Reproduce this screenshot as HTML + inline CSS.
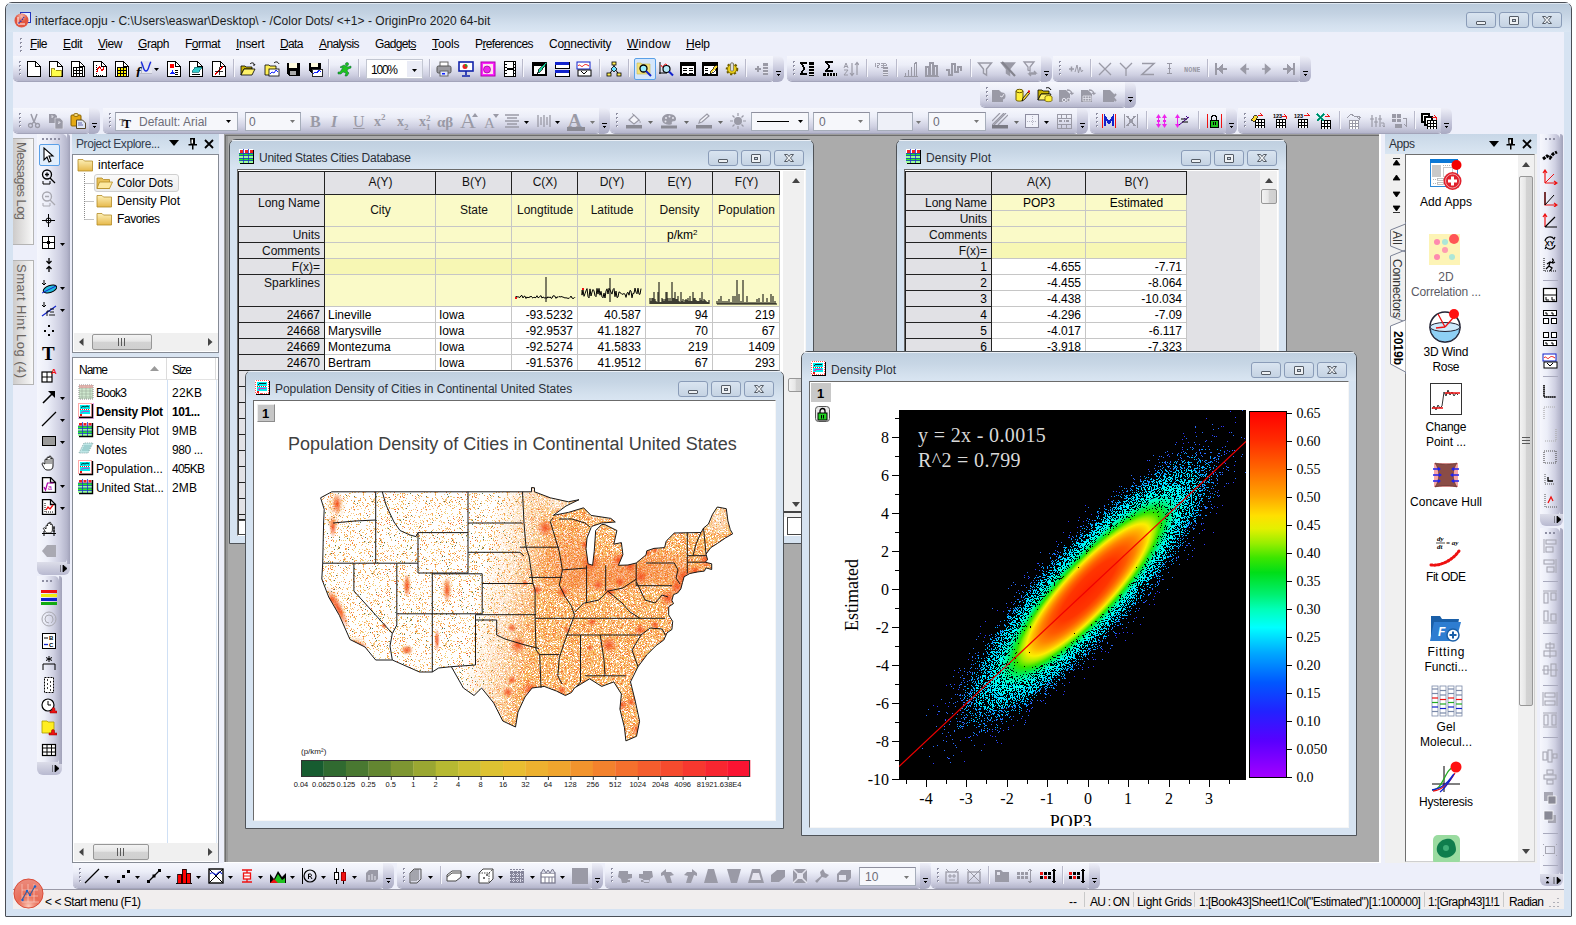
<!DOCTYPE html>
<html><head><meta charset="utf-8"><title>OriginPro 2020</title>
<style>
html,body{margin:0;padding:0;background:#fff;}
body{width:1576px;height:925px;position:relative;overflow:hidden;font-family:"Liberation Sans",sans-serif;}
body div,body svg{position:absolute;}
u{text-decoration:underline;text-underline-offset:1px;}
.tb{background:linear-gradient(#f6f7fd,#eceef8 35%,#cfd0e2 75%,#b4b5cb);border-radius:0 0 5px 5px;box-shadow:0 1px 0 #a3a4ba;}
.tbv{background:linear-gradient(90deg,#f6f7fd,#eceef8 35%,#cfd0e2 75%,#b4b5cb);border-radius:0 5px 5px 0;}
.cap{background:linear-gradient(#d7d8e8,#a9aac4);border-radius:0 5px 5px 0;}
.combo{box-sizing:border-box;border:1px solid #a5acb8;background:#fff;}
</style></head><body>
<svg width="0" height="0" style="left:0;top:0"><defs>
<radialGradient id="gl" cx=".5" cy=".2" r=".8"><stop offset="0" stop-color="#fff" stop-opacity=".6"/><stop offset=".5" stop-color="#fff" stop-opacity="0"/></radialGradient>
<radialGradient id="ball" cx=".5" cy=".95" r=".9"><stop offset="0" stop-color="#ffd8c8" stop-opacity=".9"/><stop offset=".45" stop-color="#f08a70" stop-opacity=".3"/><stop offset="1" stop-color="#fff" stop-opacity=".25"/></radialGradient>
<linearGradient id="fold" x1="0" y1="0" x2="0" y2="1"><stop offset="0" stop-color="#fdf0b8"/><stop offset="1" stop-color="#e6b84a"/></linearGradient>
</defs></svg>
<div style="left:5px;top:2px;width:1567px;height:915px;border:1px solid #4a4e55;border-radius:7px 7px 1px 1px;background:#d6e3f2;box-sizing:border-box;"></div>
<div style="left:6px;top:3px;width:1565px;height:29px;border-radius:6px 6px 0 0;background:linear-gradient(#b9cadb,#c3d2e2 35%,#d3e0ee 75%,#dae6f3);"></div>
<div style="left:6px;top:3px;width:1565px;height:1px;background:#e8eff6;border-radius:6px 6px 0 0;opacity:.8"></div>
<div style="left:13px;top:32px;width:1551px;height:877px;background:#edeffa;"></div>
<div style="left:35px;top:15.0px;font:12px/13.40px 'Liberation Sans',sans-serif;color:#1c1c1c;white-space:pre;letter-spacing:0.04px;">interface.opju - C:\Users\easwar\Desktop\ - /Color Dots/ &lt;+1&gt; - OriginPro 2020 64-bit</div>
<svg style="left:13px;top:9px;" width="22" height="20" viewBox="0 0 22 20"><rect x="7.5" y="3.5" width="10" height="10" fill="#e8eeff" stroke="#2233bb"/><circle cx="8.5" cy="11.5" r="7" fill="#e2553f"/><circle cx="8.5" cy="11.5" r="7" fill="url(#gl)"/><path d="M5 8v7h7" stroke="#fff" fill="none"/><path d="M5.5 14.5l2-2 1.5-1.5 2-3" stroke="#2233bb" stroke-width="1.3" fill="none" stroke-dasharray="1.5 1"/></svg>
<div style="left:1466px;top:12px;width:30px;height:16px;box-sizing:border-box;border:1px solid #8a9cb8;border-radius:3px;background:linear-gradient(#d9e4f0,#c5d3e3);"></div>
<div style="left:1476.0px;top:21.0px;width:10px;height:4px;box-sizing:border-box;border:1px solid #555c66;border-radius:1px;background:#eef1f4;"></div>
<div style="left:1499px;top:12px;width:30px;height:16px;box-sizing:border-box;border:1px solid #8a9cb8;border-radius:3px;background:linear-gradient(#d9e4f0,#c5d3e3);"></div>
<div style="left:1509.0px;top:16.0px;width:10px;height:9px;box-sizing:border-box;border:1px solid #555c66;border-radius:1px;background:#eef1f4;"></div>
<div style="left:1512.0px;top:19.0px;width:4px;height:3px;box-sizing:border-box;border:1px solid #555c66;background:#cbd6e2;"></div>
<div style="left:1532px;top:12px;width:30px;height:16px;box-sizing:border-box;border:1px solid #8a9cb8;border-radius:3px;background:linear-gradient(#d9e4f0,#c5d3e3);"></div>
<svg style="left:1541.0px;top:15.0px;" width="12" height="10" viewBox="0 0 12 10"><path d="M1.5 1.5h3l1.5 2 1.5-2h3l-3 3.5 3 3.5h-3l-1.5-2-1.5 2h-3l3-3.5z" fill="#eef1f4" stroke="#555c66" stroke-width="1" stroke-linejoin="round"/></svg>
<svg style="left:20px;top:38px;" width="3" height="15" viewBox="0 0 3 15"><rect x="0" y="0" width="2" height="2" fill="#8e8fa3"/><rect x="1" y="1" width="1" height="1" fill="#fff"/><rect x="0" y="4" width="2" height="2" fill="#8e8fa3"/><rect x="1" y="5" width="1" height="1" fill="#fff"/><rect x="0" y="8" width="2" height="2" fill="#8e8fa3"/><rect x="1" y="9" width="1" height="1" fill="#fff"/><rect x="0" y="12" width="2" height="2" fill="#8e8fa3"/><rect x="1" y="13" width="1" height="1" fill="#fff"/></svg>
<div style="left:30px;top:38.0px;font:12px/13.40px 'Liberation Sans',sans-serif;color:#000;white-space:pre;letter-spacing:-0.61px;"><u>F</u>ile</div>
<div style="left:63px;top:38.0px;font:12px/13.40px 'Liberation Sans',sans-serif;color:#000;white-space:pre;letter-spacing:-0.39px;"><u>E</u>dit</div>
<div style="left:98px;top:38.0px;font:12px/13.40px 'Liberation Sans',sans-serif;color:#000;white-space:pre;letter-spacing:-0.43px;"><u>V</u>iew</div>
<div style="left:138px;top:38.0px;font:12px/13.40px 'Liberation Sans',sans-serif;color:#000;white-space:pre;letter-spacing:-0.46px;"><u>G</u>raph</div>
<div style="left:185px;top:38.0px;font:12px/13.40px 'Liberation Sans',sans-serif;color:#000;white-space:pre;letter-spacing:-0.50px;">F<u>o</u>rmat</div>
<div style="left:236px;top:38.0px;font:12px/13.40px 'Liberation Sans',sans-serif;color:#000;white-space:pre;letter-spacing:-0.30px;"><u>I</u>nsert</div>
<div style="left:280px;top:38.0px;font:12px/13.40px 'Liberation Sans',sans-serif;color:#000;white-space:pre;letter-spacing:-0.62px;"><u>D</u>ata</div>
<div style="left:319px;top:38.0px;font:12px/13.40px 'Liberation Sans',sans-serif;color:#000;white-space:pre;letter-spacing:-0.60px;"><u>A</u>nalysis</div>
<div style="left:375px;top:38.0px;font:12px/13.40px 'Liberation Sans',sans-serif;color:#000;white-space:pre;letter-spacing:-0.64px;">Gadget<u>s</u></div>
<div style="left:432px;top:38.0px;font:12px/13.40px 'Liberation Sans',sans-serif;color:#000;white-space:pre;letter-spacing:-0.13px;"><u>T</u>ools</div>
<div style="left:475px;top:38.0px;font:12px/13.40px 'Liberation Sans',sans-serif;color:#000;white-space:pre;letter-spacing:-0.62px;">P<u>r</u>eferences</div>
<div style="left:549px;top:38.0px;font:12px/13.40px 'Liberation Sans',sans-serif;color:#000;white-space:pre;letter-spacing:-0.26px;">Co<u>n</u>nectivity</div>
<div style="left:627px;top:38.0px;font:12px/13.40px 'Liberation Sans',sans-serif;color:#000;white-space:pre;letter-spacing:0.16px;"><u>W</u>indow</div>
<div style="left:686px;top:38.0px;font:12px/13.40px 'Liberation Sans',sans-serif;color:#000;white-space:pre;letter-spacing:-0.23px;"><u>H</u>elp</div>
<div class="tb" style="left:13px;top:56px;width:762px;height:25px;"></div>
<svg style="left:19px;top:61px;" width="3" height="17" viewBox="0 0 3 17"><rect x="0" y="0" width="2" height="2" fill="#8e8fa3"/><rect x="1" y="1" width="1" height="1" fill="#fff"/><rect x="0" y="4" width="2" height="2" fill="#8e8fa3"/><rect x="1" y="5" width="1" height="1" fill="#fff"/><rect x="0" y="8" width="2" height="2" fill="#8e8fa3"/><rect x="1" y="9" width="1" height="1" fill="#fff"/><rect x="0" y="12" width="2" height="2" fill="#8e8fa3"/><rect x="1" y="13" width="1" height="1" fill="#fff"/></svg>
<div style="left:773px;top:56px;width:11px;height:26px;background:linear-gradient(#eeeff8,#c4c5da 55%,#a9aac2);border-radius:0 6px 6px 0;"></div>
<svg style="left:776px;top:71px;shape-rendering:crispEdges" width="5" height="6" viewBox="0 0 5 6"><path d="M0 .5h5" stroke="#000"/><path d="M0 2.500h5l-2.500 3z" fill="#000"/></svg>
<svg style="left:26px;top:61px" width="16" height="16" viewBox="0 0 16 16" shape-rendering="crispEdges"><path d="M1.5 .5h8l5 5v10h-13z" fill="#fff" stroke="#000" stroke-width="1.3"/><path d="M9.5 .5v5h5" fill="none" stroke="#000" stroke-width="1.3"/></svg>
<svg style="left:48px;top:61px" width="16" height="16" viewBox="0 0 16 16" shape-rendering="crispEdges"><path d="M1.5 .5h8l5 5v10h-13z" fill="#fff" stroke="#000" stroke-width="1.3"/><path d="M9.5 .5v5h5" fill="none" stroke="#000" stroke-width="1.3"/><path d="M3 7.500h3.500l1 1.500h5.500v6h-10z" fill="#ffff4a" stroke="#8a7a00" stroke-width=".8"/></svg>
<svg style="left:70px;top:61px" width="16" height="16" viewBox="0 0 16 16" shape-rendering="crispEdges"><path d="M1.5 .5h8l5 5v10h-13z" fill="#fff" stroke="#000" stroke-width="1.3"/><path d="M9.5 .5v5h5" fill="none" stroke="#000" stroke-width="1.3"/><rect x="3" y="6" width="10" height="9" fill="#000"/><rect x="4" y="7" width="2" height="2" fill="#fff"/><rect x="4" y="10" width="2" height="2" fill="#fff"/><rect x="4" y="13" width="2" height="2" fill="#fff"/><rect x="7" y="7" width="2" height="2" fill="#fff"/><rect x="7" y="10" width="2" height="2" fill="#fff"/><rect x="7" y="13" width="2" height="2" fill="#fff"/><rect x="10" y="7" width="2" height="2" fill="#fff"/><rect x="10" y="10" width="2" height="2" fill="#fff"/><rect x="10" y="13" width="2" height="2" fill="#fff"/></svg>
<svg style="left:92px;top:61px" width="16" height="16" viewBox="0 0 16 16" shape-rendering="crispEdges"><path d="M1.5 .5h8l5 5v10h-13z" fill="#fff" stroke="#000" stroke-width="1.3"/><path d="M9.5 .5v5h5" fill="none" stroke="#000" stroke-width="1.3"/><path d="M4 4v10h8" stroke="#000" fill="none" stroke-dasharray="1 1"/><path d="M5 11c1-6 3-6 4-3s2 1 3-2" stroke="#e00" stroke-width="1.3" fill="none"/></svg>
<svg style="left:114px;top:61px" width="16" height="16" viewBox="0 0 16 16" shape-rendering="crispEdges"><path d="M1.5 .5h8l5 5v10h-13z" fill="#fff" stroke="#000" stroke-width="1.3"/><path d="M9.5 .5v5h5" fill="none" stroke="#000" stroke-width="1.3"/><rect x="3" y="6" width="10" height="9" fill="#000"/><rect x="4" y="7" width="2" height="2" fill="#ffef00"/><rect x="4" y="10" width="2" height="2" fill="#ffef00"/><rect x="4" y="13" width="2" height="2" fill="#ffef00"/><rect x="7" y="7" width="2" height="2" fill="#ffef00"/><rect x="7" y="10" width="2" height="2" fill="#ffef00"/><rect x="7" y="13" width="2" height="2" fill="#ffef00"/><rect x="10" y="7" width="2" height="2" fill="#ffef00"/><rect x="10" y="10" width="2" height="2" fill="#ffef00"/><rect x="10" y="13" width="2" height="2" fill="#ffef00"/></svg>
<svg style="left:136px;top:61px" width="16" height="16" viewBox="0 0 16 16"><rect x="4" y="0" width="12" height="12" fill="#e6e7f0"/><path d="M4 12.500h12M5.500 0v13" stroke="#b9bac8"/><path d="M5 1c2 1 2 9 5 9s3-8 5-9" stroke="#1a2be0" stroke-width="1.400" fill="none"/><text x="0" y="15.500" font-family="Liberation Serif,serif" font-weight="bold" font-style="italic" font-size="14" fill="#000">f</text></svg>
<svg style="left:166px;top:61px" width="16" height="16" viewBox="0 0 16 16" shape-rendering="crispEdges"><path d="M1.5 .5h8l5 5v10h-13z" fill="#fff" stroke="#000" stroke-width="1.3"/><path d="M9.5 .5v5h5" fill="none" stroke="#000" stroke-width="1.3"/><rect x="4" y="3" width="4" height="4" fill="#f00"/><path d="M4 13l2.500-4 2.500 4z" fill="#12f"/><path d="M9 9h3M9 11h3M9 13h3" stroke="#000"/></svg>
<svg style="left:188px;top:61px" width="16" height="16" viewBox="0 0 16 16" shape-rendering="crispEdges"><path d="M1.5 .5h8l5 5v10h-13z" fill="#fff" stroke="#000" stroke-width="1.3"/><path d="M9.5 .5v5h5" fill="none" stroke="#000" stroke-width="1.3"/><path d="M4 11l3-5h7l-3 5z" fill="#3cc" stroke="#066" stroke-width=".7"/><path d="M4 13h8" stroke="#000"/></svg>
<svg style="left:211px;top:61px" width="16" height="16" viewBox="0 0 16 16" shape-rendering="crispEdges"><path d="M1.5 .5h8l5 5v10h-13z" fill="#fff" stroke="#000" stroke-width="1.3"/><path d="M9.5 .5v5h5" fill="none" stroke="#000" stroke-width="1.3"/><path d="M4 14l8-9" stroke="#e00" stroke-width="1.300"/><path d="M8 6v8M4 10h8" stroke="#000" stroke-width=".8"/></svg>
<svg style="left:240px;top:61px" width="16" height="16" viewBox="0 0 16 16"><path d="M1 5h4l1 1h6v2h-8l-3 6z" fill="#c9b200" stroke="#000" stroke-width=".8"/><path d="M4 8h11l-3 6h-11z" fill="#fff36b" stroke="#000" stroke-width=".8"/><path d="M10 3c2-2 4-1 5 1l-2 0" stroke="#000" fill="none"/></svg>
<svg style="left:264px;top:61px" width="16" height="16" viewBox="0 0 16 16"><path d="M1 4h4l1 1h6v9h-11z" fill="#ffef55" stroke="#000" stroke-width=".8"/><rect x="5" y="8" width="10" height="7" fill="#fff" stroke="#000" stroke-width=".8"/><path d="M6 13l2-2 2 1 2-3 2 2" stroke="#12f" fill="none"/><path d="M10 2c2-2 4-1 5 1" stroke="#000" fill="none"/></svg>
<svg style="left:285px;top:61px" width="16" height="16" viewBox="0 0 16 16" shape-rendering="crispEdges"><path d="M1.500 1.500h13v13h-11l-2-2z" fill="#000"/><rect x="4" y="2" width="8" height="5" fill="#fffbe0"/><rect x="5" y="10" width="6" height="4" fill="#aaa"/></svg>
<svg style="left:307px;top:61px" width="16" height="16" viewBox="0 0 16 16" shape-rendering="crispEdges"><path d="M1.500 1.500h12v10h-10l-2-2z" fill="#000"/><rect x="4" y="2" width="7" height="4" fill="#fffbe0"/><rect x="5" y="8" width="10" height="7" fill="#fff" stroke="#000" stroke-width=".8"/><path d="M6 13l2-2 2 1 2-3 2 2" stroke="#12f" fill="none"/></svg>
<svg style="left:337px;top:61px" width="16" height="16" viewBox="0 0 16 16"><path d="M10 1.500a1.600 1.600 0 1 1 0 3.200a1.600 1.600 0 0 1 0-3.200M3 6l4-2 4 2 3-1v2l-3 1-1 2 2 2-2 3h-2l1-3-3-1-2 2-3 0 0-2h2l2-3 1-2-2 1z" fill="#1fc21f" stroke="#063" stroke-width=".5"/></svg>
<svg style="left:154px;top:68px" width="5" height="3" viewBox="0 0 5 3"><path d="M0 0h5l-2.500 3z" fill="#000"/></svg>
<div style="left:233px;top:59px;width:1px;height:18px;background:#b9bacb;"></div>
<div style="left:234px;top:59px;width:1px;height:18px;background:#f6f6fc;"></div>
<div style="left:328px;top:59px;width:1px;height:18px;background:#b9bacb;"></div>
<div style="left:329px;top:59px;width:1px;height:18px;background:#f6f6fc;"></div>
<div style="left:358px;top:59px;width:1px;height:18px;background:#b9bacb;"></div>
<div style="left:359px;top:59px;width:1px;height:18px;background:#f6f6fc;"></div>
<div style="left:429px;top:59px;width:1px;height:18px;background:#b9bacb;"></div>
<div style="left:430px;top:59px;width:1px;height:18px;background:#f6f6fc;"></div>
<div style="left:522px;top:59px;width:1px;height:18px;background:#b9bacb;"></div>
<div style="left:523px;top:59px;width:1px;height:18px;background:#f6f6fc;"></div>
<div style="left:599px;top:59px;width:1px;height:18px;background:#b9bacb;"></div>
<div style="left:600px;top:59px;width:1px;height:18px;background:#f6f6fc;"></div>
<div style="left:628px;top:59px;width:1px;height:18px;background:#b9bacb;"></div>
<div style="left:629px;top:59px;width:1px;height:18px;background:#f6f6fc;"></div>
<div style="left:745px;top:59px;width:1px;height:18px;background:#b9bacb;"></div>
<div style="left:746px;top:59px;width:1px;height:18px;background:#f6f6fc;"></div>
<div style="left:366px;top:59px;width:57px;height:20px;box-sizing:border-box;border:1px solid #c3c7d2;background:#fff;"></div>
<div style="left:371px;top:63.5px;font:12px/13.40px 'Liberation Sans',sans-serif;color:#000;white-space:pre;letter-spacing:-1.23px;">100%</div>
<div style="left:407px;top:61px;width:15px;height:16px;background:#eaecf6;"></div>
<svg style="left:412px;top:69px" width="5" height="3" viewBox="0 0 5 3"><path d="M0 0h5l-2.500 3z" fill="#000"/></svg>
<svg style="left:436px;top:61px" width="16" height="16" viewBox="0 0 16 16"><rect x="4" y="1" width="8" height="5" fill="#fff" stroke="#666"/><rect x="1" y="5" width="14" height="7" rx="1.500" fill="#9a9aa0" stroke="#555"/><rect x="4" y="10" width="8" height="5" fill="#dfe6ff" stroke="#666"/><rect x="6" y="12" width="3" height="1.500" fill="#12f"/></svg>
<svg style="left:458px;top:61px" width="16" height="16" viewBox="0 0 16 16"><rect x="1" y="1" width="14" height="9" fill="#fff" stroke="#12a" stroke-width="1.600"/><circle cx="7" cy="5.500" r="2.500" fill="#e22"/><path d="M7 5.500v-2.500a2.500 2.500 0 0 1 2.500 2.500z" fill="#2a2"/><path d="M8 10v4M4 15h8" stroke="#12a" stroke-width="1.600"/></svg>
<svg style="left:480px;top:61px" width="16" height="16" viewBox="0 0 16 16"><rect x="1" y="1" width="14" height="14" fill="#f2f" stroke="#a0a"/><rect x="3" y="3" width="10" height="10" fill="#fde" /><circle cx="7" cy="8.500" r="3.500" fill="#e2e" stroke="#707" stroke-width=".6"/></svg>
<svg style="left:502px;top:61px" width="16" height="16" viewBox="0 0 16 16" shape-rendering="crispEdges"><rect x="2" y="0" width="12" height="16" fill="#000"/><rect x="5" y="1" width="6" height="6" fill="#fff"/><rect x="5" y="9" width="6" height="6" fill="#fff"/><rect x="3" y="1" width="1.500" height="1.500" fill="#fff"/><rect x="3" y="4" width="1.500" height="1.500" fill="#fff"/><rect x="3" y="7" width="1.500" height="1.500" fill="#fff"/><rect x="3" y="10" width="1.500" height="1.500" fill="#fff"/><rect x="3" y="13" width="1.500" height="1.500" fill="#fff"/><rect x="11.5" y="1" width="1.500" height="1.500" fill="#fff"/><rect x="11.5" y="4" width="1.500" height="1.500" fill="#fff"/><rect x="11.5" y="7" width="1.500" height="1.500" fill="#fff"/><rect x="11.5" y="10" width="1.500" height="1.500" fill="#fff"/><rect x="11.5" y="13" width="1.500" height="1.500" fill="#fff"/></svg>
<svg style="left:532px;top:61px" width="16" height="16" viewBox="0 0 16 16" shape-rendering="crispEdges"><rect x="1" y="2" width="13" height="12" fill="#fff" stroke="#000" stroke-width="1.300"/><rect x="1" y="2" width="13" height="3" fill="#000"/><path d="M5 13l2-5 7-7 1 1-6 8z" fill="#1c9" stroke="#000" stroke-width=".7"/></svg>
<svg style="left:554px;top:61px" width="16" height="16" viewBox="0 0 16 16" shape-rendering="crispEdges"><rect x="1" y="1" width="14" height="6" fill="#fff" stroke="#000"/><rect x="1" y="1" width="14" height="3" fill="#12c"/><rect x="1" y="9" width="14" height="6" fill="#fff" stroke="#000"/><rect x="1" y="9" width="14" height="3" fill="#12c"/></svg>
<svg style="left:576px;top:61px" width="16" height="16" viewBox="0 0 16 16"><rect x="1" y="1" width="13" height="7" fill="#fff" stroke="#12c"/><path d="M2 5c2-3 3 2 5 0s3-2 6 0" stroke="#e11" fill="none"/><rect x="2" y="9" width="13" height="6" fill="#fff" stroke="#000"/><path d="M5 10l3 3 3-3" stroke="#000" fill="none"/></svg>
<svg style="left:606px;top:61px" width="16" height="16" viewBox="0 0 16 16"><rect x="6" y="1" width="4" height="3" fill="#ffef55" stroke="#000" stroke-width=".8"/><path d="M8 4v2M4 12l4-5 4 5" stroke="#000" fill="none"/><path d="M8 5l3 3-3 3-3-3z" fill="#6df" stroke="#000" stroke-width=".8"/><rect x="1" y="12" width="4" height="3" fill="#ffef55" stroke="#000" stroke-width=".8"/><rect x="11" y="12" width="4" height="3" fill="#ffef55" stroke="#000" stroke-width=".8"/></svg>
<div style="left:634px;top:58px;width:22px;height:22px;box-sizing:border-box;border:1px solid #5aa0e8;background:#d4e6fb;border-radius:2px;"></div>
<svg style="left:636px;top:61px" width="16" height="16" viewBox="0 0 16 16"><path d="M1 2h4l1 1h8v10h-13z" fill="#f3e27a" stroke="#c8b850" stroke-width=".6"/><circle cx="7.500" cy="7.500" r="3.500" fill="#9ef" stroke="#000" stroke-width="1.300"/><path d="M10 10l5 5" stroke="#12c" stroke-width="2"/></svg>
<svg style="left:658px;top:61px" width="16" height="16" viewBox="0 0 16 16"><path d="M2 1v12M1 12h8" stroke="#000"/><path d="M3 4c2 6 3-4 6 0" stroke="#e11" fill="none"/><circle cx="8.500" cy="8" r="3.500" fill="#9ef" fill-opacity=".6" stroke="#000" stroke-width="1.200"/><path d="M11 10.500l4 4" stroke="#12c" stroke-width="2"/></svg>
<svg style="left:680px;top:61px" width="16" height="16" viewBox="0 0 16 16" shape-rendering="crispEdges"><rect x="1" y="2" width="14" height="12" fill="#fff" stroke="#000" stroke-width="1.300"/><rect x="1" y="2" width="14" height="3" fill="#000"/><path d="M3 7h4M9 7h4M3 9.500h4M9 9.500h4M3 12h4M9 12h4" stroke="#000"/></svg>
<svg style="left:702px;top:61px" width="16" height="16" viewBox="0 0 16 16" shape-rendering="crispEdges"><rect x="1" y="2" width="14" height="12" fill="#fff" stroke="#000" stroke-width="1.300"/><rect x="1" y="2" width="14" height="3" fill="#000"/><path d="M3 7h3M3 9.500h3M3 12h3" stroke="#000"/><path d="M8 13l1-3 5-6 1.500 1.500-5 6z" fill="#fd3" stroke="#000" stroke-width=".7"/></svg>
<svg style="left:724px;top:61px" width="16" height="16" viewBox="0 0 16 16"><circle cx="8" cy="8" r="5" fill="#e2c100" stroke="#6b5a00" stroke-width="2.500" stroke-dasharray="2 1.700"/><circle cx="8" cy="8" r="4.500" fill="#ecd019" stroke="#7a6800" stroke-width=".7"/><rect x="6.500" y="2" width="3" height="8" rx="1" fill="#ddd" stroke="#555" stroke-width=".6"/></svg>
<svg style="left:754px;top:61px" width="16" height="16" viewBox="0 0 16 16" shape-rendering="crispEdges"><path d="M1 8h6M4 5v6" stroke="#9a9aa6" stroke-width="1.600"/><rect x="9" y="2" width="5" height="12" fill="#9a9aa6"/><path d="M9 5h5M9 8h5M9 11h5" stroke="#e4e4ee"/></svg>
<div class="tb" style="left:787px;top:56px;width:256px;height:25px;"></div>
<svg style="left:793px;top:61px;" width="3" height="17" viewBox="0 0 3 17"><rect x="0" y="0" width="2" height="2" fill="#8e8fa3"/><rect x="1" y="1" width="1" height="1" fill="#fff"/><rect x="0" y="4" width="2" height="2" fill="#8e8fa3"/><rect x="1" y="5" width="1" height="1" fill="#fff"/><rect x="0" y="8" width="2" height="2" fill="#8e8fa3"/><rect x="1" y="9" width="1" height="1" fill="#fff"/><rect x="0" y="12" width="2" height="2" fill="#8e8fa3"/><rect x="1" y="13" width="1" height="1" fill="#fff"/></svg>
<div style="left:1041px;top:56px;width:11px;height:26px;background:linear-gradient(#eeeff8,#c4c5da 55%,#a9aac2);border-radius:0 6px 6px 0;"></div>
<svg style="left:1044px;top:71px;shape-rendering:crispEdges" width="5" height="6" viewBox="0 0 5 6"><path d="M0 .5h5" stroke="#000"/><path d="M0 2.500h5l-2.500 3z" fill="#000"/></svg>
<svg style="left:800px;top:61px" width="16" height="16" viewBox="0 0 16 16" shape-rendering="crispEdges"><path d="M7 2h-6l3.500 5-3.500 6h6" stroke="#000" stroke-width="1.700" fill="none"/><rect x="9" y="1" width="5" height="14" fill="#000"/><path d="M9 4h5M9 7h5M9 10h5M9 13h5" stroke="#fff" stroke-width=".9"/></svg>
<svg style="left:822px;top:61px" width="16" height="16" viewBox="0 0 16 16" shape-rendering="crispEdges"><path d="M11 1h-7l3.500 4.500-3.500 4.500h7" stroke="#000" stroke-width="1.600" fill="none"/><rect x="1" y="12" width="14" height="3" fill="#000"/><path d="M4 12v3M7 12v3M10 12v3M13 12v3" stroke="#fff" stroke-width=".9"/></svg>
<svg style="left:843px;top:61px" width="16" height="16" viewBox="0 0 16 16"><path d="M9 2v12M7 12l2 2.500 2-2.500M14 14v-12M12 4l2-2.500 2 2.500" stroke="#9a9aa6" fill="none" stroke-width="1.200"/><path d="M1 7l2-5 2 5M2 5.500h2M1 9h4l-4 5h4" stroke="#9a9aa6" fill="none"/></svg>
<svg style="left:874px;top:61px" width="16" height="16" viewBox="0 0 16 16" shape-rendering="crispEdges"><path d="M1 2v4M3 2h2v2h-2v2h2M7 2h2v4h-2M7 4h2M10 2l3 2-3 0" stroke="#9a9aa6" fill="none" stroke-width=".9"/><rect x="9" y="6" width="5" height="9" fill="#9a9aa6"/><path d="M9 8.500h5M9 11h5M9 13.500h5" stroke="#e4e4ee"/></svg>
<svg style="left:903px;top:61px" width="16" height="16" viewBox="0 0 16 16" shape-rendering="crispEdges"><path d="M1 15h14" stroke="#9a9aa6"/><path d="M2.500 15v-3M5.500 15v-6M8.500 15v-9M11.500 15v-13M13.500 15v-13M11.500 2h2" stroke="#9a9aa6" stroke-width="1.400" fill="none"/></svg>
<svg style="left:924px;top:61px" width="16" height="16" viewBox="0 0 16 16" shape-rendering="crispEdges"><path d="M1 15h14" stroke="#9a9aa6"/><rect x="2" y="6" width="3" height="9" fill="none" stroke="#9a9aa6" stroke-width="1.300"/><rect x="6" y="2" width="3" height="13" fill="none" stroke="#9a9aa6" stroke-width="1.300"/><rect x="10" y="5" width="3" height="10" fill="none" stroke="#9a9aa6" stroke-width="1.300"/></svg>
<svg style="left:946px;top:61px" width="16" height="16" viewBox="0 0 16 16" shape-rendering="crispEdges"><path d="M0 9h3v5h3v-11h3v8h3v-5h3v4" fill="none" stroke="#9a9aa6" stroke-width="1.500"/></svg>
<svg style="left:977px;top:61px" width="16" height="16" viewBox="0 0 16 16"><path d="M1.500 2h13l-5 6v6l-3-2v-4z" fill="#e8e9f3" stroke="#9a9aa6" stroke-width="1.500"/></svg>
<svg style="left:1000px;top:61px" width="16" height="16" viewBox="0 0 16 16"><path d="M1.500 2h13l-5 6v6l-3-2v-4z" fill="#9a9aa6" stroke="#9a9aa6" stroke-width="1.500"/><path d="M2 1l13 14" stroke="#84848e" stroke-width="2.200"/></svg>
<svg style="left:1022px;top:61px" width="16" height="16" viewBox="0 0 16 16"><path d="M2 1h10l-4 5v4l-2-1v-3z" fill="#e8e9f3" stroke="#9a9aa6" stroke-width="1.300"/><path d="M7 12h7l-2-2M14 13h-7l2 2" stroke="#9a9aa6" stroke-width="1.400" fill="none"/></svg>
<div style="left:866px;top:59px;width:1px;height:18px;background:#b9bacb;"></div>
<div style="left:867px;top:59px;width:1px;height:18px;background:#f6f6fc;"></div>
<div style="left:896px;top:59px;width:1px;height:18px;background:#b9bacb;"></div>
<div style="left:897px;top:59px;width:1px;height:18px;background:#f6f6fc;"></div>
<div style="left:970px;top:59px;width:1px;height:18px;background:#b9bacb;"></div>
<div style="left:971px;top:59px;width:1px;height:18px;background:#f6f6fc;"></div>
<div class="tb" style="left:1053px;top:56px;width:249px;height:25px;"></div>
<svg style="left:1059px;top:61px;" width="3" height="17" viewBox="0 0 3 17"><rect x="0" y="0" width="2" height="2" fill="#8e8fa3"/><rect x="1" y="1" width="1" height="1" fill="#fff"/><rect x="0" y="4" width="2" height="2" fill="#8e8fa3"/><rect x="1" y="5" width="1" height="1" fill="#fff"/><rect x="0" y="8" width="2" height="2" fill="#8e8fa3"/><rect x="1" y="9" width="1" height="1" fill="#fff"/><rect x="0" y="12" width="2" height="2" fill="#8e8fa3"/><rect x="1" y="13" width="1" height="1" fill="#fff"/></svg>
<div style="left:1300px;top:56px;width:11px;height:26px;background:linear-gradient(#eeeff8,#c4c5da 55%,#a9aac2);border-radius:0 6px 6px 0;"></div>
<svg style="left:1303px;top:71px;shape-rendering:crispEdges" width="5" height="6" viewBox="0 0 5 6"><path d="M0 .5h5" stroke="#000"/><path d="M0 2.500h5l-2.500 3z" fill="#000"/></svg>
<svg style="left:1068px;top:61px" width="16" height="16" viewBox="0 0 16 16"><path d="M1 8h5M3.500 5.500v5" stroke="#9a9aa6" stroke-width="1.500"/><path d="M7 11l2-7 1.500 8 1.500-6 1.500 5 1.500-2" stroke="#9a9aa6" fill="none"/></svg>
<svg style="left:1097px;top:61px" width="16" height="16" viewBox="0 0 16 16"><path d="M2 2l12 12M14 2l-12 12" stroke="#9a9aa6" stroke-width="1.300"/></svg>
<svg style="left:1118px;top:61px" width="16" height="16" viewBox="0 0 16 16"><path d="M2 2l6 6 6-6M8 8v7" stroke="#9a9aa6" stroke-width="1.300" fill="none"/></svg>
<svg style="left:1140px;top:61px" width="16" height="16" viewBox="0 0 16 16"><path d="M2 2.500h12l-12 11h12" stroke="#9a9aa6" stroke-width="1.500" fill="none"/></svg>
<svg style="left:1162px;top:61px" width="16" height="16" viewBox="0 0 16 16"><path d="M7.5 2v11M5 2.5h5M5 12.5h5M6 7.5h3" stroke="#9a9aa6" stroke-width="1" fill="none"/></svg>
<svg style="left:1184px;top:61px" width="16" height="16" viewBox="0 0 16 16"><text x="0" y="11" font-family="Liberation Mono,monospace" font-size="7" font-weight="bold" fill="#9a9aa6">NONE</text></svg>
<svg style="left:1214px;top:61px" width="16" height="16" viewBox="0 0 16 16" shape-rendering="crispEdges"><path d="M2 2v12" stroke="#9a9aa6" stroke-width="2"/><path d="M13 8h-8M8 4.500l-4 3.500 4 3.500z" fill="#9a9aa6" stroke="#9a9aa6" stroke-width="1.500"/></svg>
<svg style="left:1237px;top:61px" width="16" height="16" viewBox="0 0 16 16"><path d="M12 8h-7M8.500 4l-4.500 4 4.500 4z" fill="#9a9aa6" stroke="#9a9aa6" stroke-width="1.500"/></svg>
<svg style="left:1258px;top:61px" width="16" height="16" viewBox="0 0 16 16"><path d="M4 8h7M7.500 4l4.500 4-4.500 4z" fill="#9a9aa6" stroke="#9a9aa6" stroke-width="1.500"/></svg>
<svg style="left:1280px;top:61px" width="16" height="16" viewBox="0 0 16 16" shape-rendering="crispEdges"><path d="M14 2v12" stroke="#9a9aa6" stroke-width="2"/><path d="M3 8h8M8 4.500l4 3.500-4 3.500z" fill="#9a9aa6" stroke="#9a9aa6" stroke-width="1.500"/></svg>
<div style="left:1090px;top:59px;width:1px;height:18px;background:#b9bacb;"></div>
<div style="left:1091px;top:59px;width:1px;height:18px;background:#f6f6fc;"></div>
<div style="left:1207px;top:59px;width:1px;height:18px;background:#b9bacb;"></div>
<div style="left:1208px;top:59px;width:1px;height:18px;background:#f6f6fc;"></div>
<div class="tb" style="left:980px;top:82px;width:147px;height:25px;"></div>
<svg style="left:986px;top:87px;" width="3" height="17" viewBox="0 0 3 17"><rect x="0" y="0" width="2" height="2" fill="#8e8fa3"/><rect x="1" y="1" width="1" height="1" fill="#fff"/><rect x="0" y="4" width="2" height="2" fill="#8e8fa3"/><rect x="1" y="5" width="1" height="1" fill="#fff"/><rect x="0" y="8" width="2" height="2" fill="#8e8fa3"/><rect x="1" y="9" width="1" height="1" fill="#fff"/><rect x="0" y="12" width="2" height="2" fill="#8e8fa3"/><rect x="1" y="13" width="1" height="1" fill="#fff"/></svg>
<div style="left:1125px;top:82px;width:11px;height:26px;background:linear-gradient(#eeeff8,#c4c5da 55%,#a9aac2);border-radius:0 6px 6px 0;"></div>
<svg style="left:1128px;top:97px;shape-rendering:crispEdges" width="5" height="6" viewBox="0 0 5 6"><path d="M0 .5h5" stroke="#000"/><path d="M0 2.500h5l-2.500 3z" fill="#000"/></svg>
<svg style="left:991px;top:87px" width="16" height="16" viewBox="0 0 16 16"><path d="M1 3h7l4 4v8h-11z" fill="#9a9aa6"/><circle cx="11" cy="9" r="3.500" fill="#9a9aa6"/><path d="M9 9l2 1 2-3" stroke="#e4e4ee" fill="none"/></svg>
<svg style="left:1014px;top:87px" width="16" height="16" viewBox="0 0 16 16"><path d="M2 4v9c0 1.500 7 1.500 7 0v-9" fill="#ffef3a" stroke="#6b5a00"/><ellipse cx="5.500" cy="4" rx="3.500" ry="1.700" fill="#ffef3a" stroke="#6b5a00"/><path d="M8 14l1-3 5-6 1.500 1.500-5 6z" fill="#fd3" stroke="#000" stroke-width=".8"/><circle cx="15" cy="4.500" r="1.200" fill="#e11"/></svg>
<svg style="left:1037px;top:87px" width="16" height="16" viewBox="0 0 16 16"><path d="M1 3h4l1 1h6v3h-8l-3 6z" fill="#c9b200" stroke="#000" stroke-width=".8"/><path d="M4 7h10l-3 6h-10z" fill="#fff36b" stroke="#000" stroke-width=".8"/><path d="M9 1c2-1 4 0 5 2" stroke="#000" fill="none"/><ellipse cx="11.500" cy="10" rx="3.500" ry="1.500" fill="#ffef3a" stroke="#6b5a00" stroke-width=".8"/><path d="M8 10v3.500c0 1.500 7 1.500 7 0v-3.500" fill="#ffef3a" stroke="#6b5a00" stroke-width=".8"/></svg>
<svg style="left:1058px;top:87px" width="16" height="16" viewBox="0 0 16 16"><path d="M1 3h7l4 4v8h-11z" fill="#9a9aa6"/><path d="M9 3c3 0 5 2 5 4l1.500-1M14 7l-2-1" stroke="#9a9aa6" fill="none" stroke-width="1.300"/><circle cx="6" cy="13" r="1.700" fill="none" stroke="#e4e4ee"/><circle cx="10.500" cy="13" r="1.700" fill="none" stroke="#e4e4ee"/></svg>
<svg style="left:1080px;top:87px" width="16" height="16" viewBox="0 0 16 16"><path d="M1 3h7l4 4v8h-11z" fill="#9a9aa6"/><path d="M9 3c3 0 5 2 5 4l1.500-1M14 7l-2-1" stroke="#9a9aa6" fill="none" stroke-width="1.300"/><path d="M3.0 9v5M5.7 9v5M8.3 9v5M11.0 9v5M3 9.0h8M3 11.5h8M3 14.0h8" stroke="#e4e4ee" stroke-width="0.8" fill="none"/></svg>
<svg style="left:1102px;top:87px" width="16" height="16" viewBox="0 0 16 16"><path d="M1 3h7l4 4v8h-11z" fill="#9a9aa6"/><path d="M7 6l7 8M14 7l-6 7" stroke="#9a9aa6" stroke-width="2"/></svg>
<div class="tb" style="left:13px;top:108px;width:78px;height:25px;"></div>
<svg style="left:19px;top:113px;" width="3" height="17" viewBox="0 0 3 17"><rect x="0" y="0" width="2" height="2" fill="#8e8fa3"/><rect x="1" y="1" width="1" height="1" fill="#fff"/><rect x="0" y="4" width="2" height="2" fill="#8e8fa3"/><rect x="1" y="5" width="1" height="1" fill="#fff"/><rect x="0" y="8" width="2" height="2" fill="#8e8fa3"/><rect x="1" y="9" width="1" height="1" fill="#fff"/><rect x="0" y="12" width="2" height="2" fill="#8e8fa3"/><rect x="1" y="13" width="1" height="1" fill="#fff"/></svg>
<div style="left:89px;top:108px;width:11px;height:26px;background:linear-gradient(#eeeff8,#c4c5da 55%,#a9aac2);border-radius:0 6px 6px 0;"></div>
<svg style="left:92px;top:123px;shape-rendering:crispEdges" width="5" height="6" viewBox="0 0 5 6"><path d="M0 .5h5" stroke="#000"/><path d="M0 2.500h5l-2.500 3z" fill="#000"/></svg>
<svg style="left:26px;top:113px" width="16" height="16" viewBox="0 0 16 16"><path d="M5 1l3 8M11 1l-3 8M8 9l-2.500 2M8 9l2.500 2" stroke="#9a9aa6" stroke-width="1.500" fill="none"/><circle cx="4.500" cy="12.500" r="2" fill="none" stroke="#9a9aa6" stroke-width="1.300"/><circle cx="11.500" cy="12.500" r="2" fill="none" stroke="#9a9aa6" stroke-width="1.300"/></svg>
<svg style="left:48px;top:113px" width="16" height="16" viewBox="0 0 16 16"><path d="M1 1h6l2 2v7h-8z" fill="#9a9aa6"/><path d="M7 5h5l3 3v8h-8z" fill="#9a9aa6" stroke="#e4e4ee" stroke-width=".6"/><path d="M3 3h2v1h-1v1M10 9h2v1h-1.500v1" stroke="#e4e4ee" fill="none" stroke-width=".8"/></svg>
<svg style="left:70px;top:113px" width="16" height="16" viewBox="0 0 16 16"><rect x="1" y="2" width="10" height="11" rx="1" fill="#e5a913" stroke="#8a6200"/><rect x="4" y="0.500" width="4" height="3" rx="1" fill="#f4d87a" stroke="#8a6200" stroke-width=".8"/><path d="M6.500 7h6l3 3v5.500h-9z" fill="#dfe8f6" stroke="#53452a"/><path d="M8 10h4M8 12h5" stroke="#66a"/></svg>
<div class="tb" style="left:103px;top:108px;width:498px;height:25px;"></div>
<svg style="left:109px;top:113px;" width="3" height="17" viewBox="0 0 3 17"><rect x="0" y="0" width="2" height="2" fill="#8e8fa3"/><rect x="1" y="1" width="1" height="1" fill="#fff"/><rect x="0" y="4" width="2" height="2" fill="#8e8fa3"/><rect x="1" y="5" width="1" height="1" fill="#fff"/><rect x="0" y="8" width="2" height="2" fill="#8e8fa3"/><rect x="1" y="9" width="1" height="1" fill="#fff"/><rect x="0" y="12" width="2" height="2" fill="#8e8fa3"/><rect x="1" y="13" width="1" height="1" fill="#fff"/></svg>
<div style="left:599px;top:108px;width:11px;height:26px;background:linear-gradient(#eeeff8,#c4c5da 55%,#a9aac2);border-radius:0 6px 6px 0;"></div>
<svg style="left:602px;top:123px;shape-rendering:crispEdges" width="5" height="6" viewBox="0 0 5 6"><path d="M0 .5h5" stroke="#000"/><path d="M0 2.500h5l-2.500 3z" fill="#000"/></svg>
<div style="left:115px;top:112px;width:123px;height:19px;box-sizing:border-box;border:1px solid #a6adba;border-top-color:#8e8f9e;background:#f6f7fb;"></div>
<svg style="left:226px;top:120px" width="5" height="3" viewBox="0 0 5 3"><path d="M0 0h5l-2.500 3z" fill="#000"/></svg>
<div style="left:139px;top:115.5px;font:12px/13.40px 'Liberation Sans',sans-serif;color:#6d6d78;white-space:pre;letter-spacing:-0.00px;">Default: Arial</div>
<svg style="left:119px;top:115px;" width="14" height="14" viewBox="0 0 14 14"><text x="0" y="11" font-family="Liberation Serif,serif" font-size="11" fill="#555">T</text><text x="4" y="13" font-family="Liberation Serif,serif" font-weight="bold" font-size="12" fill="#000">T</text></svg>
<div style="left:245px;top:112px;width:56px;height:19px;box-sizing:border-box;border:1px solid #a6adba;border-top-color:#8e8f9e;background:#f6f7fb;"></div>
<svg style="left:290px;top:120px" width="5" height="3" viewBox="0 0 5 3"><path d="M0 0h5l-2.500 3z" fill="#777"/></svg>
<div style="left:249px;top:115.5px;font:12px/13.40px 'Liberation Sans',sans-serif;color:#6d6d78;white-space:pre;">0</div>
<div style="left:310px;top:113.1px;font:bold 16px/17.71px 'Liberation Serif',serif;color:#9a9aa6;white-space:pre;">B</div>
<div style="left:331px;top:113.1px;font:bold 16px/17.71px 'Liberation Serif',serif;color:#9a9aa6;white-space:pre;font-style:italic;">I</div>
<div style="left:353px;top:113.1px;font:16px/17.71px 'Liberation Serif',serif;color:#9a9aa6;white-space:pre;text-decoration:underline;">U</div>
<div style="left:374px;top:114.4px;font:bold 14px/15.50px 'Liberation Serif',serif;color:#9a9aa6;white-space:pre;">x<sup style="font-size:9px;position:relative;top:-1px;vertical-align:super;line-height:0">2</sup></div>
<div style="left:397px;top:114.4px;font:bold 14px/15.50px 'Liberation Serif',serif;color:#9a9aa6;white-space:pre;">x<sub style="font-size:9px;vertical-align:sub;line-height:0">2</sub></div>
<div style="left:419px;top:114.4px;font:bold 14px/15.50px 'Liberation Serif',serif;color:#9a9aa6;white-space:pre;">x</div>
<div style="left:426px;top:113.9px;font:bold 9px/9.96px 'Liberation Serif',serif;color:#9a9aa6;white-space:pre;">2</div>
<div style="left:426px;top:122.9px;font:bold 9px/9.96px 'Liberation Serif',serif;color:#9a9aa6;white-space:pre;">1</div>
<div style="left:437px;top:113.5px;font:bold 15px/16.61px 'Liberation Serif',serif;color:#9a9aa6;white-space:pre;">αβ</div>
<div style="left:460px;top:109.3px;font:22px/24.35px 'Liberation Serif',serif;color:#9a9aa6;white-space:pre;">A</div>
<svg style="left:472px;top:113px;" width="6" height="4" viewBox="0 0 6 4"><path d="M0 4l3-4 3 4z" fill="#9a9aa6"/></svg>
<div style="left:484px;top:114.5px;font:15px/16.61px 'Liberation Serif',serif;color:#9a9aa6;white-space:pre;">A</div>
<svg style="left:493px;top:114px;" width="6" height="4" viewBox="0 0 6 4"><path d="M0 0l3 4 3-4z" fill="#9a9aa6"/></svg>
<svg style="left:505px;top:114px;" width="14" height="14" viewBox="0 0 14 14"><path d="M0 1h14M2 4h10M0 7h14M2 10h10M0 13h14" stroke="#9a9aa6" stroke-width="1.300"/></svg>
<svg style="left:524px;top:121px" width="5" height="3" viewBox="0 0 5 3"><path d="M0 0h5l-2.500 3z" fill="#000"/></svg>
<svg style="left:537px;top:114px;" width="14" height="14" viewBox="0 0 14 14"><path d="M1 1v12M4 3v8M7 1v12M10 3v8M13 1v12" stroke="#9a9aa6" stroke-width="1.300"/></svg>
<svg style="left:555px;top:121px" width="5" height="3" viewBox="0 0 5 3"><path d="M0 0h5l-2.500 3z" fill="#000"/></svg>
<div style="left:568px;top:110.0px;font:bold 19px/21.03px 'Liberation Serif',serif;color:#9a9aa6;white-space:pre;">A</div>
<div style="left:567px;top:127px;width:18px;height:4px;background:#8a8a94;"></div>
<svg style="left:590px;top:121px" width="5" height="3" viewBox="0 0 5 3"><path d="M0 0h5l-2.500 3z" fill="#777"/></svg>
<div class="tb" style="left:610px;top:108px;width:469px;height:25px;"></div>
<svg style="left:616px;top:113px;" width="3" height="17" viewBox="0 0 3 17"><rect x="0" y="0" width="2" height="2" fill="#8e8fa3"/><rect x="1" y="1" width="1" height="1" fill="#fff"/><rect x="0" y="4" width="2" height="2" fill="#8e8fa3"/><rect x="1" y="5" width="1" height="1" fill="#fff"/><rect x="0" y="8" width="2" height="2" fill="#8e8fa3"/><rect x="1" y="9" width="1" height="1" fill="#fff"/><rect x="0" y="12" width="2" height="2" fill="#8e8fa3"/><rect x="1" y="13" width="1" height="1" fill="#fff"/></svg>
<div style="left:1077px;top:108px;width:11px;height:26px;background:linear-gradient(#eeeff8,#c4c5da 55%,#a9aac2);border-radius:0 6px 6px 0;"></div>
<svg style="left:1080px;top:123px;shape-rendering:crispEdges" width="5" height="6" viewBox="0 0 5 6"><path d="M0 .5h5" stroke="#000"/><path d="M0 2.500h5l-2.500 3z" fill="#000"/></svg>
<svg style="left:626px;top:113px" width="16" height="16" viewBox="0 0 16 16"><path d="M3 7l5-5 5 5-5 4z" fill="#f4f4fa" stroke="#9a9aa6" stroke-width="1.200"/><path d="M8 2l-2-1.500M13 7c1 1 1.500 2 1 3" stroke="#9a9aa6" fill="none"/><rect x="0" y="12" width="16" height="3.500" fill="#8a8a94"/></svg>
<svg style="left:661px;top:113px" width="16" height="16" viewBox="0 0 16 16"><path d="M8 1c5 0 7.500 3 7 5.500s-3 1-4 2.500 1 2-1 2.500c-5 1-9-1.500-9-5s3-5.500 7-5.500z" fill="#9a9aa6"/><circle cx="5" cy="5" r="1" fill="#e4e4ee"/><circle cx="8.500" cy="3.500" r="1" fill="#e4e4ee"/><circle cx="12" cy="5" r="1" fill="#e4e4ee"/><circle cx="4.500" cy="8.500" r="1" fill="#e4e4ee"/><rect x="0" y="12.500" width="16" height="3" fill="#8a8a94"/></svg>
<svg style="left:696px;top:113px" width="16" height="16" viewBox="0 0 16 16"><path d="M3 10l1-3 7-6 2 2-7 6z" fill="#f4f4fa" stroke="#9a9aa6" stroke-width="1.200"/><rect x="0" y="12" width="16" height="3.500" fill="#8a8a94"/></svg>
<svg style="left:730px;top:113px" width="16" height="16" viewBox="0 0 16 16"><circle cx="8" cy="8" r="4" fill="#9a9aa6"/><path d="M8 0v3M8 13v3M0 8h3M13 8h3M2.500 2.500l2 2M11.500 11.500l2 2M13.500 2.500l-2 2M4.500 11.500l-2 2" stroke="#9a9aa6" stroke-width="1.200"/></svg>
<svg style="left:992px;top:113px" width="16" height="16" viewBox="0 0 16 16"><path d="M0 8l8-8M0 12l12-12M2 12l12-12M6 12l10-10" stroke="#9a9aa6" stroke-width="1.200"/><rect x="0" y="12" width="16" height="3.500" fill="#7a7a84"/></svg>
<svg style="left:1024px;top:113px" width="16" height="16" viewBox="0 0 16 16" shape-rendering="crispEdges"><rect x="1.500" y="1.500" width="13" height="13" fill="#f1f2fa" stroke="#8d8da0"/><path d="M8 3v10M3 8h10" stroke="#b5b5c4" stroke-dasharray="1 1"/></svg>
<svg style="left:1056px;top:113px" width="16" height="16" viewBox="0 0 16 16" shape-rendering="crispEdges"><rect x="1" y="1" width="14" height="14" fill="none" stroke="#9a9aa6"/><path d="M1 5h14M1 11h14M5 1v4M10 1v4M5 11v4M10 11v4" stroke="#9a9aa6"/><path d="M3 8h3M13 8h-3M7.500 8h1" stroke="#9a9aa6" stroke-width="1.200"/></svg>
<svg style="left:648px;top:121px" width="5" height="3" viewBox="0 0 5 3"><path d="M0 0h5l-2.500 3z" fill="#666"/></svg>
<svg style="left:684px;top:121px" width="5" height="3" viewBox="0 0 5 3"><path d="M0 0h5l-2.500 3z" fill="#666"/></svg>
<svg style="left:718px;top:121px" width="5" height="3" viewBox="0 0 5 3"><path d="M0 0h5l-2.500 3z" fill="#666"/></svg>
<svg style="left:1014px;top:121px" width="5" height="3" viewBox="0 0 5 3"><path d="M0 0h5l-2.500 3z" fill="#666"/></svg>
<svg style="left:1044px;top:121px" width="5" height="3" viewBox="0 0 5 3"><path d="M0 0h5l-2.500 3z" fill="#000"/></svg>
<div style="left:751px;top:112px;width:58px;height:19px;box-sizing:border-box;border:1px solid #a6adba;border-top-color:#8e8f9e;background:#f6f7fb;"></div>
<svg style="left:798px;top:120px" width="5" height="3" viewBox="0 0 5 3"><path d="M0 0h5l-2.500 3z" fill="#000"/></svg>
<div style="left:757px;top:121px;width:32px;height:1px;background:#000;"></div>
<div style="left:813px;top:112px;width:57px;height:19px;box-sizing:border-box;border:1px solid #a6adba;border-top-color:#8e8f9e;background:#f6f7fb;"></div>
<svg style="left:858px;top:120px" width="5" height="3" viewBox="0 0 5 3"><path d="M0 0h5l-2.500 3z" fill="#777"/></svg>
<div style="left:819px;top:115.5px;font:12px/13.40px 'Liberation Sans',sans-serif;color:#6d6d78;white-space:pre;">0</div>
<div style="left:877px;top:112px;width:36px;height:19px;box-sizing:border-box;border:1px solid #a6adba;border-top-color:#8e8f9e;background:#eef0f8;"></div>
<svg style="left:916px;top:121px" width="5" height="3" viewBox="0 0 5 3"><path d="M0 0h5l-2.500 3z" fill="#777"/></svg>
<div style="left:928px;top:112px;width:58px;height:19px;box-sizing:border-box;border:1px solid #a6adba;border-top-color:#8e8f9e;background:#f6f7fb;"></div>
<svg style="left:974px;top:120px" width="5" height="3" viewBox="0 0 5 3"><path d="M0 0h5l-2.500 3z" fill="#777"/></svg>
<div style="left:933px;top:115.5px;font:12px/13.40px 'Liberation Sans',sans-serif;color:#6d6d78;white-space:pre;">0</div>
<div class="tb" style="left:1090px;top:108px;width:138px;height:25px;"></div>
<svg style="left:1096px;top:113px;" width="3" height="17" viewBox="0 0 3 17"><rect x="0" y="0" width="2" height="2" fill="#8e8fa3"/><rect x="1" y="1" width="1" height="1" fill="#fff"/><rect x="0" y="4" width="2" height="2" fill="#8e8fa3"/><rect x="1" y="5" width="1" height="1" fill="#fff"/><rect x="0" y="8" width="2" height="2" fill="#8e8fa3"/><rect x="1" y="9" width="1" height="1" fill="#fff"/><rect x="0" y="12" width="2" height="2" fill="#8e8fa3"/><rect x="1" y="13" width="1" height="1" fill="#fff"/></svg>
<div style="left:1226px;top:108px;width:11px;height:26px;background:linear-gradient(#eeeff8,#c4c5da 55%,#a9aac2);border-radius:0 6px 6px 0;"></div>
<svg style="left:1229px;top:123px;shape-rendering:crispEdges" width="5" height="6" viewBox="0 0 5 6"><path d="M0 .5h5" stroke="#000"/><path d="M0 2.500h5l-2.500 3z" fill="#000"/></svg>
<svg style="left:1101px;top:113px" width="16" height="16" viewBox="0 0 16 16" shape-rendering="crispEdges"><path d="M1.500 1v14M14.500 1v14" stroke="#e11" stroke-width="1.200"/><path d="M4 13v-9l4 6 4-6v9" stroke="#12c" stroke-width="2" fill="none"/></svg>
<svg style="left:1123px;top:113px" width="16" height="16" viewBox="0 0 16 16" shape-rendering="crispEdges"><path d="M1.500 1v14M14.500 1v14" stroke="#9a9aa6" stroke-width="1.200"/><path d="M4 3l8 10M12 3l-8 10" stroke="#9a9aa6" stroke-width="2"/></svg>
<svg style="left:1154px;top:113px" width="16" height="16" viewBox="0 0 16 16"><path d="M4.5 3v10M10.5 3v10" stroke="#e2e" stroke-width="1"/><path d="M2 5l2.5-4 2.5 4zM2 11l2.5 4 2.5-4zM8 5l2.5-4 2.5 4zM8 11l2.5 4 2.5-4z" fill="#e2e"/><rect x="3" y="7" width="3" height="2" fill="#e2e"/><rect x="9" y="7" width="3" height="2" fill="#e2e"/></svg>
<svg style="left:1174px;top:113px" width="16" height="16" viewBox="0 0 16 16"><path d="M3.5 3v10" stroke="#e2e"/><path d="M1 5l2.5-4 2.5 4zM1 11l2.5 4 2.5-4z" fill="#e2e"/><path d="M5 12l10-8" stroke="#408" stroke-width="1"/><path d="M7 6h6M8 9h6" stroke="#000"/><path d="M12 3l2 2M10 5l2 2" stroke="#408"/></svg>
<svg style="left:1206px;top:113px" width="16" height="16" viewBox="0 0 16 16" shape-rendering="crispEdges"><path d="M1 1v14M15 1v14" stroke="#e11"/><rect x="4" y="7" width="8" height="7" fill="#1fc21f" stroke="#000"/><path d="M5.500 7v-2a2.500 2.500 0 0 1 5 0v2" fill="none" stroke="#000" stroke-width="1.200"/><path d="M7 9v3M9 9v3" stroke="#000" /></svg>
<div style="left:1146px;top:111px;width:1px;height:18px;background:#b9bacb;"></div>
<div style="left:1147px;top:111px;width:1px;height:18px;background:#f6f6fc;"></div>
<div style="left:1198px;top:111px;width:1px;height:18px;background:#b9bacb;"></div>
<div style="left:1199px;top:111px;width:1px;height:18px;background:#f6f6fc;"></div>
<div class="tb" style="left:1238px;top:108px;width:205px;height:25px;"></div>
<svg style="left:1244px;top:113px;" width="3" height="17" viewBox="0 0 3 17"><rect x="0" y="0" width="2" height="2" fill="#8e8fa3"/><rect x="1" y="1" width="1" height="1" fill="#fff"/><rect x="0" y="4" width="2" height="2" fill="#8e8fa3"/><rect x="1" y="5" width="1" height="1" fill="#fff"/><rect x="0" y="8" width="2" height="2" fill="#8e8fa3"/><rect x="1" y="9" width="1" height="1" fill="#fff"/><rect x="0" y="12" width="2" height="2" fill="#8e8fa3"/><rect x="1" y="13" width="1" height="1" fill="#fff"/></svg>
<div style="left:1441px;top:108px;width:11px;height:26px;background:linear-gradient(#eeeff8,#c4c5da 55%,#a9aac2);border-radius:0 6px 6px 0;"></div>
<svg style="left:1444px;top:123px;shape-rendering:crispEdges" width="5" height="6" viewBox="0 0 5 6"><path d="M0 .5h5" stroke="#000"/><path d="M0 2.500h5l-2.500 3z" fill="#000"/></svg>
<svg style="left:1250px;top:113px" width="16" height="16" viewBox="0 0 16 16" shape-rendering="crispEdges"><rect x="5" y="6" width="10" height="9" fill="#000"/><rect x="6" y="7" width="2" height="2" fill="#fff"/><rect x="6" y="10" width="2" height="2" fill="#fff"/><rect x="6" y="13" width="2" height="2" fill="#fff"/><rect x="9" y="7" width="2" height="2" fill="#fff"/><rect x="9" y="10" width="2" height="2" fill="#fff"/><rect x="9" y="13" width="2" height="2" fill="#fff"/><rect x="12" y="7" width="2" height="2" fill="#fff"/><rect x="12" y="10" width="2" height="2" fill="#fff"/><rect x="12" y="13" width="2" height="2" fill="#fff"/><path d="M1 7l4-5 3 2-4 5z" fill="#fd3" stroke="#000" stroke-width=".7"/><path d="M8 2h4l-1.500-1.500M12 2l-1.500 1.500" stroke="#e11" fill="none"/></svg>
<svg style="left:1272px;top:113px" width="16" height="16" viewBox="0 0 16 16" shape-rendering="crispEdges"><rect x="4" y="6" width="10" height="9" fill="#000"/><rect x="5" y="7" width="2" height="2" fill="#fff"/><rect x="5" y="10" width="2" height="2" fill="#fff"/><rect x="5" y="13" width="2" height="2" fill="#fff"/><rect x="8" y="7" width="2" height="2" fill="#fff"/><rect x="8" y="10" width="2" height="2" fill="#fff"/><rect x="8" y="13" width="2" height="2" fill="#fff"/><rect x="11" y="7" width="2" height="2" fill="#fff"/><rect x="11" y="10" width="2" height="2" fill="#fff"/><rect x="11" y="13" width="2" height="2" fill="#fff"/><text x="1" y="5" font-size="5.500" font-weight="bold" font-family="Liberation Sans,sans-serif">123</text><path d="M10 3h4l-1.500-1.500M14 3l-1.500 1.500M14 3v3" stroke="#e11" fill="none"/></svg>
<svg style="left:1294px;top:113px" width="16" height="16" viewBox="0 0 16 16" shape-rendering="crispEdges"><rect x="4" y="6" width="10" height="9" fill="#000"/><rect x="5" y="7" width="2" height="2" fill="#fff"/><rect x="5" y="10" width="2" height="2" fill="#fff"/><rect x="5" y="13" width="2" height="2" fill="#fff"/><rect x="8" y="7" width="2" height="2" fill="#fff"/><rect x="8" y="10" width="2" height="2" fill="#fff"/><rect x="8" y="13" width="2" height="2" fill="#fff"/><rect x="11" y="7" width="2" height="2" fill="#fff"/><rect x="11" y="10" width="2" height="2" fill="#fff"/><rect x="11" y="13" width="2" height="2" fill="#fff"/><text x="0" y="5" font-size="5.500" font-weight="bold" font-family="Liberation Sans,sans-serif">123</text><path d="M10 2h5l-1.500-1.500M15 2l-1.500 1.500" stroke="#e11" fill="none"/></svg>
<svg style="left:1316px;top:113px" width="16" height="16" viewBox="0 0 16 16" shape-rendering="crispEdges"><rect x="5" y="7" width="10" height="9" fill="#000"/><rect x="6" y="8" width="2" height="2" fill="#fff"/><rect x="6" y="11" width="2" height="2" fill="#fff"/><rect x="6" y="14" width="2" height="2" fill="#fff"/><rect x="9" y="8" width="2" height="2" fill="#fff"/><rect x="9" y="11" width="2" height="2" fill="#fff"/><rect x="9" y="14" width="2" height="2" fill="#fff"/><rect x="12" y="8" width="2" height="2" fill="#fff"/><rect x="12" y="11" width="2" height="2" fill="#fff"/><rect x="12" y="14" width="2" height="2" fill="#fff"/><path d="M1 1l7 7M8 1l-7 7" stroke="#0a8" stroke-width="2"/><path d="M1 1l7 7M8 1l-7 7" stroke="#064" stroke-width=".7"/><path d="M9 3h4l-1.500-1.500M13 3l-1.500 1.500" stroke="#e11" fill="none"/></svg>
<svg style="left:1346px;top:113px" width="16" height="16" viewBox="0 0 16 16" shape-rendering="crispEdges"><rect x="3" y="7" width="10" height="9" fill="#9a9aa6"/><rect x="4" y="8" width="2" height="2" fill="#fff"/><rect x="4" y="11" width="2" height="2" fill="#fff"/><rect x="4" y="14" width="2" height="2" fill="#fff"/><rect x="7" y="8" width="2" height="2" fill="#fff"/><rect x="7" y="11" width="2" height="2" fill="#fff"/><rect x="7" y="14" width="2" height="2" fill="#fff"/><rect x="10" y="8" width="2" height="2" fill="#fff"/><rect x="10" y="11" width="2" height="2" fill="#fff"/><rect x="10" y="14" width="2" height="2" fill="#fff"/><path d="M1 5l4-4 3 2M8 3h5v3l-1.500-1.500M13 6l1.500-1.500" stroke="#9a9aa6" fill="none"/></svg>
<svg style="left:1369px;top:113px" width="16" height="16" viewBox="0 0 16 16"><path d="M3 2v12M7 4v10M11 2v12M1 6h4M5 9h4M9 6h4" stroke="#9a9aa6" stroke-width="1.200"/><path d="M12 10h3v4l-1.500-1.500M15 14l1-1.500" stroke="#9a9aa6" fill="none"/></svg>
<svg style="left:1391px;top:113px" width="16" height="16" viewBox="0 0 16 16" shape-rendering="crispEdges"><rect x="1" y="1" width="9" height="8" fill="#9a9aa6"/><path d="M1 5h9M5.500 1v8" stroke="#e4e4ee"/><rect x="4" y="11" width="7" height="4" fill="#9a9aa6"/><path d="M12 5h3v8l-1.500-1.500M15 13l1.500-1.500" stroke="#9a9aa6" fill="none"/></svg>
<svg style="left:1421px;top:113px" width="16" height="16" viewBox="0 0 16 16" shape-rendering="crispEdges"><rect x="1" y="1" width="7" height="8" fill="#fff" stroke="#000" stroke-width="1.200"/><rect x="4" y="4" width="7" height="8" fill="#fff" stroke="#000" stroke-width="1.200"/><rect x="6" y="7" width="10" height="9" fill="#000"/><rect x="7" y="8" width="2" height="2" fill="#fff"/><rect x="7" y="11" width="2" height="2" fill="#fff"/><rect x="7" y="14" width="2" height="2" fill="#fff"/><rect x="10" y="8" width="2" height="2" fill="#fff"/><rect x="10" y="11" width="2" height="2" fill="#fff"/><rect x="10" y="14" width="2" height="2" fill="#fff"/><rect x="13" y="8" width="2" height="2" fill="#fff"/><rect x="13" y="11" width="2" height="2" fill="#fff"/><rect x="13" y="14" width="2" height="2" fill="#fff"/><path d="M11 4h4l-1.500-1.500M15 4l-1.500 1.500M15 4v3" stroke="#e11" fill="none"/></svg>
<div style="left:1339px;top:111px;width:1px;height:18px;background:#b9bacb;"></div>
<div style="left:1340px;top:111px;width:1px;height:18px;background:#f6f6fc;"></div>
<div style="left:1414px;top:111px;width:1px;height:18px;background:#b9bacb;"></div>
<div style="left:1415px;top:111px;width:1px;height:18px;background:#f6f6fc;"></div>
<div class="tb" style="left:73px;top:863px;width:312px;height:25px;"></div>
<svg style="left:79px;top:868px;" width="3" height="17" viewBox="0 0 3 17"><rect x="0" y="0" width="2" height="2" fill="#8e8fa3"/><rect x="1" y="1" width="1" height="1" fill="#fff"/><rect x="0" y="4" width="2" height="2" fill="#8e8fa3"/><rect x="1" y="5" width="1" height="1" fill="#fff"/><rect x="0" y="8" width="2" height="2" fill="#8e8fa3"/><rect x="1" y="9" width="1" height="1" fill="#fff"/><rect x="0" y="12" width="2" height="2" fill="#8e8fa3"/><rect x="1" y="13" width="1" height="1" fill="#fff"/></svg>
<div style="left:383px;top:863px;width:11px;height:26px;background:linear-gradient(#eeeff8,#c4c5da 55%,#a9aac2);border-radius:0 6px 6px 0;"></div>
<svg style="left:386px;top:878px;shape-rendering:crispEdges" width="5" height="6" viewBox="0 0 5 6"><path d="M0 .5h5" stroke="#000"/><path d="M0 2.500h5l-2.500 3z" fill="#000"/></svg>
<svg style="left:84px;top:868px" width="16" height="16" viewBox="0 0 16 16"><path d="M1 15l14-14" stroke="#000" stroke-width="1.200"/></svg>
<svg style="left:104px;top:876px" width="5" height="3" viewBox="0 0 5 3"><path d="M0 0h5l-2.500 3z" fill="#000"/></svg>
<svg style="left:116px;top:868px" width="16" height="16" viewBox="0 0 16 16" shape-rendering="crispEdges"><rect x="1" y="12" width="3" height="3" fill="#000"/><rect x="6" y="7" width="3" height="3" fill="#000"/><rect x="11" y="2" width="3" height="3" fill="#000"/></svg>
<svg style="left:135px;top:876px" width="5" height="3" viewBox="0 0 5 3"><path d="M0 0h5l-2.500 3z" fill="#000"/></svg>
<svg style="left:146px;top:868px" width="16" height="16" viewBox="0 0 16 16"><path d="M2 14l12-12" stroke="#000" stroke-width="1.300"/><rect x="1" y="12" width="3" height="3" fill="#000"/><rect x="6.500" y="6.500" width="3" height="3" fill="#000"/><rect x="12" y="1" width="3" height="3" fill="#000"/></svg>
<svg style="left:166px;top:876px" width="5" height="3" viewBox="0 0 5 3"><path d="M0 0h5l-2.500 3z" fill="#000"/></svg>
<svg style="left:176px;top:868px" width="16" height="16" viewBox="0 0 16 16" shape-rendering="crispEdges"><path d="M0 15.500h16" stroke="#000"/><rect x="1.500" y="6" width="4" height="9.500" fill="#f00" stroke="#000" stroke-width=".8"/><rect x="6" y="1" width="4" height="14.500" fill="#f00" stroke="#000" stroke-width=".8"/><rect x="10.500" y="5" width="4" height="10.500" fill="#f00" stroke="#000" stroke-width=".8"/></svg>
<svg style="left:196px;top:876px" width="5" height="3" viewBox="0 0 5 3"><path d="M0 0h5l-2.500 3z" fill="#000"/></svg>
<svg style="left:208px;top:868px" width="16" height="16" viewBox="0 0 16 16"><rect x="1" y="1" width="14" height="14" fill="#fff" stroke="#000" stroke-width="1.400"/><path d="M1 1l14 14M1 15l14-14" stroke="#000"/><path d="M2 6c3-4 5 3 7 0s3-3 5 0" stroke="#12c" fill="none" stroke-width="1.200"/></svg>
<svg style="left:228px;top:876px" width="5" height="3" viewBox="0 0 5 3"><path d="M0 0h5l-2.500 3z" fill="#000"/></svg>
<svg style="left:239px;top:868px" width="16" height="16" viewBox="0 0 16 16"><path d="M3 2h10M3 14h10M8 2v12" stroke="#e11" stroke-width="1.300"/><rect x="4.500" y="5" width="7" height="6" fill="#fff" stroke="#e11" stroke-width="1.300"/><path d="M4.500 8h7" stroke="#e11"/></svg>
<svg style="left:258px;top:876px" width="5" height="3" viewBox="0 0 5 3"><path d="M0 0h5l-2.500 3z" fill="#000"/></svg>
<svg style="left:270px;top:868px" width="16" height="16" viewBox="0 0 16 16"><path d="M0 15v-9l4 5 4-8 4 6 4-4v10z" fill="#000"/><path d="M3 15l5-9 4 6 3-2v5z" fill="#1fc21f"/><path d="M0 15l4-4 4 4z" fill="#e11"/></svg>
<svg style="left:290px;top:876px" width="5" height="3" viewBox="0 0 5 3"><path d="M0 0h5l-2.500 3z" fill="#000"/></svg>
<svg style="left:301px;top:868px" width="16" height="16" viewBox="0 0 16 16"><path d="M1.500 0v16" stroke="#000"/><circle cx="9" cy="8" r="6" fill="none" stroke="#000" stroke-width="1.200"/><path d="M7.500 11v-5h2a1.300 1.300 0 0 1 0 2.500h-2M9.500 8.500l1.500 2.500" stroke="#000" fill="none"/></svg>
<svg style="left:321px;top:876px" width="5" height="3" viewBox="0 0 5 3"><path d="M0 0h5l-2.500 3z" fill="#000"/></svg>
<svg style="left:332px;top:868px" width="16" height="16" viewBox="0 0 16 16" shape-rendering="crispEdges"><path d="M4 0v16M11 1v15" stroke="#000"/><rect x="2" y="4" width="4" height="7" fill="#fff" stroke="#000"/><rect x="9" y="4" width="4" height="8" fill="#e11" stroke="#a00"/></svg>
<svg style="left:352px;top:876px" width="5" height="3" viewBox="0 0 5 3"><path d="M0 0h5l-2.500 3z" fill="#000"/></svg>
<svg style="left:364px;top:868px" width="16" height="16" viewBox="0 0 16 16"><path d="M2 5l3-3h9v9l-3 3h-9z" fill="#9a9aa6"/><path d="M5 7v5M8 6v6M11 8v4" stroke="#e4e4ee"/></svg>
<div class="tb" style="left:397px;top:863px;width:197px;height:25px;"></div>
<svg style="left:403px;top:868px;" width="3" height="17" viewBox="0 0 3 17"><rect x="0" y="0" width="2" height="2" fill="#8e8fa3"/><rect x="1" y="1" width="1" height="1" fill="#fff"/><rect x="0" y="4" width="2" height="2" fill="#8e8fa3"/><rect x="1" y="5" width="1" height="1" fill="#fff"/><rect x="0" y="8" width="2" height="2" fill="#8e8fa3"/><rect x="1" y="9" width="1" height="1" fill="#fff"/><rect x="0" y="12" width="2" height="2" fill="#8e8fa3"/><rect x="1" y="13" width="1" height="1" fill="#fff"/></svg>
<div style="left:592px;top:863px;width:11px;height:26px;background:linear-gradient(#eeeff8,#c4c5da 55%,#a9aac2);border-radius:0 6px 6px 0;"></div>
<svg style="left:595px;top:878px;shape-rendering:crispEdges" width="5" height="6" viewBox="0 0 5 6"><path d="M0 .5h5" stroke="#000"/><path d="M0 2.500h5l-2.500 3z" fill="#000"/></svg>
<svg style="left:407px;top:868px" width="16" height="16" viewBox="0 0 16 16"><path d="M3 5l4-4h7v10l-4 4h-7z" fill="#d8d9e6" stroke="#555" /><path d="M5 3v10M7 2v11M9 1v12M11 1v11" stroke="#555" stroke-width=".8"/></svg>
<svg style="left:446px;top:868px" width="16" height="16" viewBox="0 0 16 16"><path d="M1 7l5-4h9v6l-5 4h-9z" fill="#fff" stroke="#444"/><path d="M1 9l5-4h9" stroke="#444" fill="none"/></svg>
<svg style="left:478px;top:868px" width="16" height="16" viewBox="0 0 16 16"><path d="M1 5l4-4h10v10l-4 4h-10z" fill="#fff" stroke="#444"/><path d="M1 5h10v10M11 5l4-4" stroke="#444" fill="none" stroke-dasharray="1.500 1"/><circle cx="6" cy="10" r="1" fill="#444"/><circle cx="9" cy="7" r="1" fill="#444"/></svg>
<svg style="left:509px;top:868px" width="16" height="16" viewBox="0 0 16 16" shape-rendering="crispEdges"><rect x="1" y="3" width="14" height="12" fill="#85859a"/><path d="M1 6h14M1 9h14M1 12h14M4.500 3v12M8 3v12M11.500 3v12" stroke="#dcdcea" stroke-dasharray="1 1"/><path d="M1 1h14" stroke="#85859a" stroke-dasharray="2 1"/></svg>
<svg style="left:540px;top:868px" width="16" height="16" viewBox="0 0 16 16"><rect x="1" y="5" width="14" height="10" fill="#fff" stroke="#7c7c90" stroke-width="1.300"/><path d="M1 5l2.500-4 2.500 4 2-3 2 3 2.500-4 2.500 4" stroke="#7c7c90" fill="#d8d9e6"/><path d="M1 9h14M5 9v6M9 9v6M12 9v6" stroke="#7c7c90"/></svg>
<svg style="left:572px;top:868px" width="16" height="16" viewBox="0 0 16 16" shape-rendering="crispEdges"><rect x="0" y="0" width="16" height="16" fill="#9a9aa6"/></svg>
<svg style="left:428px;top:876px" width="5" height="3" viewBox="0 0 5 3"><path d="M0 0h5l-2.500 3z" fill="#000"/></svg>
<svg style="left:466px;top:876px" width="5" height="3" viewBox="0 0 5 3"><path d="M0 0h5l-2.500 3z" fill="#000"/></svg>
<svg style="left:498px;top:876px" width="5" height="3" viewBox="0 0 5 3"><path d="M0 0h5l-2.500 3z" fill="#000"/></svg>
<svg style="left:530px;top:876px" width="5" height="3" viewBox="0 0 5 3"><path d="M0 0h5l-2.500 3z" fill="#000"/></svg>
<svg style="left:560px;top:876px" width="5" height="3" viewBox="0 0 5 3"><path d="M0 0h5l-2.500 3z" fill="#000"/></svg>
<div style="left:440px;top:866px;width:1px;height:18px;background:#b9bacb;"></div>
<div style="left:441px;top:866px;width:1px;height:18px;background:#f6f6fc;"></div>
<div class="tb" style="left:605px;top:863px;width:317px;height:25px;"></div>
<svg style="left:611px;top:868px;" width="3" height="17" viewBox="0 0 3 17"><rect x="0" y="0" width="2" height="2" fill="#8e8fa3"/><rect x="1" y="1" width="1" height="1" fill="#fff"/><rect x="0" y="4" width="2" height="2" fill="#8e8fa3"/><rect x="1" y="5" width="1" height="1" fill="#fff"/><rect x="0" y="8" width="2" height="2" fill="#8e8fa3"/><rect x="1" y="9" width="1" height="1" fill="#fff"/><rect x="0" y="12" width="2" height="2" fill="#8e8fa3"/><rect x="1" y="13" width="1" height="1" fill="#fff"/></svg>
<div style="left:920px;top:863px;width:11px;height:26px;background:linear-gradient(#eeeff8,#c4c5da 55%,#a9aac2);border-radius:0 6px 6px 0;"></div>
<svg style="left:923px;top:878px;shape-rendering:crispEdges" width="5" height="6" viewBox="0 0 5 6"><path d="M0 .5h5" stroke="#000"/><path d="M0 2.500h5l-2.500 3z" fill="#000"/></svg>
<svg style="left:617px;top:868px" width="16" height="16" viewBox="0 0 16 16"><path d="M2 3h9v3h4v4l-4 1-1 4h-5l-1-4-3-2zM5 12h8v2h-8z" fill="#9a9aa6"/></svg>
<svg style="left:638px;top:868px" width="16" height="16" viewBox="0 0 16 16"><path d="M14 3h-9v3h-4v4l4 1 1 4h5l1-4 3-2zM3 12h8v2h-8z" fill="#9a9aa6"/></svg>
<svg style="left:660px;top:868px" width="16" height="16" viewBox="0 0 16 16"><path d="M1 5l5-4v3h5l3 3-4 1 2 7h-5l-3-8-3 1z" fill="#9a9aa6"/></svg>
<svg style="left:682px;top:868px" width="16" height="16" viewBox="0 0 16 16"><path d="M15 5l-5-4v3h-5l-3 3 4 1-2 7h5l3-8 3 1z" fill="#9a9aa6"/></svg>
<svg style="left:703px;top:868px" width="16" height="16" viewBox="0 0 16 16"><path d="M5 1h6l4 14h-14z" fill="#9a9aa6"/></svg>
<svg style="left:726px;top:868px" width="16" height="16" viewBox="0 0 16 16"><path d="M1 1h14l-4 14h-6z" fill="#9a9aa6"/></svg>
<svg style="left:748px;top:868px" width="16" height="16" viewBox="0 0 16 16"><path d="M4 1h8l4 14h-16z" fill="#9a9aa6"/><path d="M5 5h6l2 7h-10z" fill="#e4e4ee"/></svg>
<svg style="left:770px;top:868px" width="16" height="16" viewBox="0 0 16 16"><path d="M1 7l6-5h8v7l-6 5h-8z" fill="#9a9aa6"/></svg>
<svg style="left:792px;top:868px" width="16" height="16" viewBox="0 0 16 16"><rect x="1" y="1" width="14" height="14" fill="#9a9aa6"/><path d="M1 1l14 14M15 1l-14 14" stroke="#e4e4ee" stroke-width="1.500"/><rect x="5" y="5" width="6" height="6" fill="#e4e4ee"/></svg>
<svg style="left:814px;top:868px" width="16" height="16" viewBox="0 0 16 16"><path d="M9 1l2 4 4 2-3 3-4-1-5 6-2-2 6-5-1-4z" fill="#9a9aa6"/></svg>
<svg style="left:836px;top:868px" width="16" height="16" viewBox="0 0 16 16"><path d="M1 6l4-4h10v8l-4 4h-10z" fill="#9a9aa6"/><path d="M3 7h7v5h-7z" fill="#e4e4ee"/></svg>
<div style="left:859px;top:867px;width:57px;height:19px;box-sizing:border-box;border:1px solid #a6adba;border-top-color:#8e8f9e;background:#f6f7fb;"></div>
<svg style="left:904px;top:876px" width="5" height="3" viewBox="0 0 5 3"><path d="M0 0h5l-2.500 3z" fill="#777"/></svg>
<div style="left:865px;top:870.5px;font:12px/13.40px 'Liberation Sans',sans-serif;color:#6d6d78;white-space:pre;">10</div>
<div class="tb" style="left:931px;top:863px;width:160px;height:25px;"></div>
<svg style="left:937px;top:868px;" width="3" height="17" viewBox="0 0 3 17"><rect x="0" y="0" width="2" height="2" fill="#8e8fa3"/><rect x="1" y="1" width="1" height="1" fill="#fff"/><rect x="0" y="4" width="2" height="2" fill="#8e8fa3"/><rect x="1" y="5" width="1" height="1" fill="#fff"/><rect x="0" y="8" width="2" height="2" fill="#8e8fa3"/><rect x="1" y="9" width="1" height="1" fill="#fff"/><rect x="0" y="12" width="2" height="2" fill="#8e8fa3"/><rect x="1" y="13" width="1" height="1" fill="#fff"/></svg>
<div style="left:1089px;top:863px;width:11px;height:26px;background:linear-gradient(#eeeff8,#c4c5da 55%,#a9aac2);border-radius:0 6px 6px 0;"></div>
<svg style="left:1092px;top:878px;shape-rendering:crispEdges" width="5" height="6" viewBox="0 0 5 6"><path d="M0 .5h5" stroke="#000"/><path d="M0 2.500h5l-2.500 3z" fill="#000"/></svg>
<svg style="left:944px;top:868px" width="16" height="16" viewBox="0 0 16 16"><rect x="2" y="4" width="12" height="11" fill="none" stroke="#9a9aa6" stroke-width="1.300"/><path d="M2 1l3 3M14 1l-3 3M5 7h2v2h-2zM9 7h2v2h-2zM5 12h6" stroke="#9a9aa6" fill="none"/></svg>
<svg style="left:966px;top:868px" width="16" height="16" viewBox="0 0 16 16"><rect x="2" y="4" width="12" height="11" fill="none" stroke="#9a9aa6" stroke-width="1.300"/><path d="M1 1l14 14M15 1l-14 14" stroke="#9a9aa6"/></svg>
<svg style="left:994px;top:868px" width="16" height="16" viewBox="0 0 16 16"><path d="M1 2h6l2 2h6v10h-14z" fill="#9a9aa6"/><path d="M3 4h3v3h-3z" fill="#e4e4ee"/></svg>
<svg style="left:1016px;top:868px" width="16" height="16" viewBox="0 0 16 16" shape-rendering="crispEdges"><rect x="1" y="4" width="3" height="3" fill="#9a9aa6"/><rect x="1" y="8" width="3" height="3" fill="#9a9aa6"/><rect x="5" y="4" width="3" height="3" fill="#9a9aa6"/><rect x="5" y="8" width="3" height="3" fill="#9a9aa6"/><rect x="9" y="4" width="3" height="3" fill="#9a9aa6"/><rect x="9" y="8" width="3" height="3" fill="#9a9aa6"/><path d="M14 1v14M12.500 3l1.500-2 1.500 2M12.500 13l1.500 2 1.500-2" stroke="#9a9aa6" fill="none"/></svg>
<svg style="left:1040px;top:868px" width="16" height="16" viewBox="0 0 16 16" shape-rendering="crispEdges"><rect x="0" y="4" width="3" height="3" fill="#e11"/><rect x="0" y="8" width="3" height="3" fill="#000"/><rect x="4" y="4" width="3" height="3" fill="#000"/><rect x="4" y="8" width="3" height="3" fill="#e11"/><rect x="8" y="4" width="3" height="3" fill="#000"/><rect x="8" y="8" width="3" height="3" fill="#000"/><path d="M14 1v14M12.500 3l1.500-2 1.500 2M12.500 13l1.500 2 1.500-2" stroke="#000" fill="none" stroke-width="1.300"/></svg>
<svg style="left:1069px;top:868px" width="16" height="16" viewBox="0 0 16 16" shape-rendering="crispEdges"><rect x="0" y="4" width="3" height="3" fill="#e11"/><rect x="0" y="8" width="3" height="3" fill="#000"/><rect x="4" y="4" width="3" height="3" fill="#000"/><rect x="4" y="8" width="3" height="3" fill="#e11"/><rect x="8" y="4" width="3" height="3" fill="#000"/><rect x="8" y="8" width="3" height="3" fill="#000"/><path d="M14 1v14M12.500 3l1.500-2 1.500 2M12.500 13l1.500 2 1.500-2" stroke="#000" fill="none" stroke-width="1.300"/></svg>
<div style="left:988px;top:866px;width:1px;height:18px;background:#b9bacb;"></div>
<div style="left:989px;top:866px;width:1px;height:18px;background:#f6f6fc;"></div>
<div style="left:1062px;top:866px;width:1px;height:18px;background:#b9bacb;"></div>
<div style="left:1063px;top:866px;width:1px;height:18px;background:#f6f6fc;"></div>
<div style="left:13px;top:138px;width:21px;height:107px;background:linear-gradient(90deg,#cdcbca,#f8f8f8);border:1px solid #b4b4b4;border-left:none;box-sizing:border-box;"></div>
<div style="left:13px;top:260px;width:21px;height:125px;background:linear-gradient(90deg,#cdcbca,#f8f8f8);border:1px solid #b4b4b4;border-left:none;box-sizing:border-box;"></div>
<div style="left:28px;top:142px;transform-origin:0 0;transform:rotate(90deg);font:13px/13px 'Liberation Sans',sans-serif;color:#6b6662;white-space:pre;letter-spacing:-0.59px;">Messages Log</div>
<div style="left:28px;top:264px;transform-origin:0 0;transform:rotate(90deg);font:13px/13px 'Liberation Sans',sans-serif;color:#6b6662;white-space:pre;letter-spacing:0.46px;">Smart Hint Log (4)</div>
<div class="tbv" style="left:37px;top:134px;width:30px;height:430px;"></div>
<svg style="left:42px;top:138px;" width="21" height="3" viewBox="0 0 21 3"><rect y="0" x="0" width="2" height="2" fill="#8e8fa3"/><rect y="0" x="4" width="2" height="2" fill="#8e8fa3"/><rect y="0" x="8" width="2" height="2" fill="#8e8fa3"/><rect y="0" x="12" width="2" height="2" fill="#8e8fa3"/><rect y="0" x="16" width="2" height="2" fill="#8e8fa3"/></svg>
<div style="left:37px;top:562px;width:33px;height:13px;background:linear-gradient(#dcdde9,#b8b9d0);border-radius:0 0 6px 6px;"></div>
<div style="left:67px;top:134px;width:3px;height:430px;background:linear-gradient(90deg,#b4b5cb,#a0a1b8);border-radius:0 4px 0 0;"></div>
<svg style="left:60px;top:565px;" width="8" height="7" viewBox="0 0 8 7"><path d="M0 0v7M3 0v7l4-3.500z" fill="#000" stroke="#000" stroke-width=".8"/></svg>
<div style="left:39px;top:144px;width:21px;height:22px;box-sizing:border-box;border:1px solid #5aa0e8;background:#e1eefc;border-radius:2px;"></div>
<svg style="left:41px;top:147px" width="16" height="16" viewBox="0 0 16 16"><path d="M3 1v12l3-3 2 5 2-1-2-5h4z" fill="#fff" stroke="#000" stroke-width="1.100"/></svg>
<svg style="left:41px;top:169px" width="16" height="16" viewBox="0 0 16 16"><circle cx="6" cy="5.500" r="4.500" fill="none" stroke="#000" stroke-width="1.300"/><path d="M4 5.500h4M6 3.500v4M9 9l5 5" stroke="#000" stroke-width="1.300"/><path d="M2 12v3h7v-3" stroke="#000" fill="none"/></svg>
<svg style="left:41px;top:191px" width="16" height="16" viewBox="0 0 16 16"><circle cx="6" cy="5.500" r="4.500" fill="none" stroke="#a8a8b0" stroke-width="1.300"/><path d="M4 5.500h4M9 9l5 5" stroke="#a8a8b0" stroke-width="1.300"/><path d="M2 12v3h7v-3" stroke="#a8a8b0" fill="none"/></svg>
<svg style="left:41px;top:213px" width="16" height="16" viewBox="0 0 16 16"><path d="M7.500 1v13M1 7.500h13" stroke="#000" stroke-width="1"/><circle cx="7.500" cy="7.500" r="2.500" fill="none" stroke="#000"/></svg>
<svg style="left:41px;top:235px" width="16" height="16" viewBox="0 0 16 16"><rect x="1.500" y="1.500" width="12" height="12" fill="#fff" stroke="#000" stroke-width="1"/><path d="M7.500 2v11M2 7.500h11" stroke="#000"/><rect x="6" y="6" width="3" height="3" fill="#000"/></svg>
<svg style="left:41px;top:257px" width="16" height="16" viewBox="0 0 16 16"><path d="M8 1v5M8 15v-5M5.500 4l2.500 2.500 2.500-2.500M5.500 12l2.500-2.500 2.500 2.500" stroke="#000" fill="none" stroke-width="1.300"/></svg>
<svg style="left:41px;top:279px" width="16" height="16" viewBox="0 0 16 16"><ellipse cx="9" cy="10" rx="7" ry="3.500" fill="#2bd" stroke="#000" transform="rotate(-20 9 10)"/><path d="M3 1v5M1 4l2 2 2-2" stroke="#000" fill="none"/><path d="M1 14l14-7" stroke="#12c"/></svg>
<svg style="left:41px;top:301px" width="16" height="16" viewBox="0 0 16 16"><path d="M3 1v5M1 4l2 2 2-2" stroke="#000" fill="none"/><path d="M1 15l14-10" stroke="#12c" stroke-width="1.200"/><path d="M6 15v-5h3M9 8h4M9 11h4M8 14h6" stroke="#000" fill="none" stroke-width=".9"/></svg>
<svg style="left:41px;top:323px" width="16" height="16" viewBox="0 0 16 16"><rect x="7" y="2" width="2" height="2" fill="#000"/><rect x="3" y="7" width="2" height="2" fill="#000"/><rect x="11" y="7" width="2" height="2" fill="#000"/><rect x="7" y="11" width="2" height="2" fill="#000"/></svg>
<svg style="left:41px;top:345px" width="16" height="16" viewBox="0 0 16 16"><text x="1" y="15" font-family="Liberation Serif,serif" font-weight="bold" font-size="19" fill="#000">T</text></svg>
<svg style="left:41px;top:367px" width="16" height="16" viewBox="0 0 16 16"><rect x="1" y="5" width="10" height="10" fill="#fff" stroke="#000" stroke-width="1.200"/><path d="M6 5v10M1 10h10" stroke="#000"/><text x="10" y="7" font-family="Liberation Sans,sans-serif" font-weight="bold" font-size="8" fill="#e11">A</text></svg>
<svg style="left:41px;top:389px" width="16" height="16" viewBox="0 0 16 16"><path d="M2 14l11-11" stroke="#000" stroke-width="1.600"/><path d="M7 2h7v7z" fill="#000"/></svg>
<svg style="left:41px;top:411px" width="16" height="16" viewBox="0 0 16 16"><path d="M1 15l14-14" stroke="#000" stroke-width="1.300"/></svg>
<svg style="left:41px;top:433px" width="16" height="16" viewBox="0 0 16 16"><rect x="1.500" y="3.500" width="13" height="9" fill="#9a9a9a" stroke="#000"/></svg>
<svg style="left:41px;top:455px" width="16" height="16" viewBox="0 0 16 16"><path d="M4 9v-4a1 1 0 0 1 2 0v-2a1 1 0 0 1 2 0v-1a1 1 0 0 1 2 0v2a1 1 0 0 1 2 0v7c0 3-2 4-4 4h-2c-2 0-3-2-4-4l-1-2c0-1 1-1.500 2-.5z" fill="#fff" stroke="#000" stroke-width=".9"/><path d="M6 5v4M8 4v5M10 4v5" stroke="#000" stroke-width=".7"/></svg>
<svg style="left:41px;top:477px" width="16" height="16" viewBox="0 0 16 16"><path d="M1.5 .5h8l5 5v10h-13z" fill="#fff" stroke="#000" stroke-width="1.3"/><path d="M9.5 .5v5h5" fill="none" stroke="#000" stroke-width="1.3"/><path d="M3 10l1.500 3 2-7h6" stroke="#a0a" fill="none" stroke-width="1.200"/><text x="7" y="13" font-family="Liberation Sans,sans-serif" font-size="7" fill="#a0a">a</text></svg>
<svg style="left:41px;top:499px" width="16" height="16" viewBox="0 0 16 16"><path d="M1.5 .5h8l5 5v10h-13z" fill="#fff" stroke="#000" stroke-width="1.3"/><path d="M9.5 .5v5h5" fill="none" stroke="#000" stroke-width="1.3"/><path d="M4 4v9h8" stroke="#000" fill="none" stroke-dasharray="1 1"/><path d="M5 11l2-3 2 2 3-4" stroke="#e11" stroke-width="1.300" fill="none"/></svg>
<svg style="left:41px;top:521px" width="16" height="16" viewBox="0 0 16 16"><path d="M5 8v-3a.8 .8 0 0 1 1.600 0v-2a.8 .8 0 0 1 1.600 0v-1a.8 .8 0 0 1 1.600 0v2a.8 .8 0 0 1 1.600 0v5c0 2-1.500 3-3 3h-2c-1.500 0-2.500-1.500-3-3l-1-1.500c0-.8 1-1 1.600-.5z" fill="#fff" stroke="#000" stroke-width=".8"/><path d="M1 12.500h14M3 10v5M13 5v10M12 7h2M12 10h2" stroke="#000"/></svg>
<svg style="left:41px;top:543px" width="16" height="16" viewBox="0 0 16 16"><path d="M1 8l5-6h9v12h-9z" fill="#a9a9b2"/></svg>
<svg style="left:60px;top:243px" width="5" height="3" viewBox="0 0 5 3"><path d="M0 0h5l-2.500 3z" fill="#000"/></svg>
<svg style="left:60px;top:287px" width="5" height="3" viewBox="0 0 5 3"><path d="M0 0h5l-2.500 3z" fill="#000"/></svg>
<svg style="left:60px;top:309px" width="5" height="3" viewBox="0 0 5 3"><path d="M0 0h5l-2.500 3z" fill="#000"/></svg>
<svg style="left:60px;top:397px" width="5" height="3" viewBox="0 0 5 3"><path d="M0 0h5l-2.500 3z" fill="#000"/></svg>
<svg style="left:60px;top:419px" width="5" height="3" viewBox="0 0 5 3"><path d="M0 0h5l-2.500 3z" fill="#000"/></svg>
<svg style="left:60px;top:441px" width="5" height="3" viewBox="0 0 5 3"><path d="M0 0h5l-2.500 3z" fill="#000"/></svg>
<svg style="left:60px;top:485px" width="5" height="3" viewBox="0 0 5 3"><path d="M0 0h5l-2.500 3z" fill="#000"/></svg>
<svg style="left:60px;top:507px" width="5" height="3" viewBox="0 0 5 3"><path d="M0 0h5l-2.500 3z" fill="#000"/></svg>
<div class="tbv" style="left:37px;top:576px;width:22px;height:188px;"></div>
<svg style="left:42px;top:580px;" width="13" height="3" viewBox="0 0 13 3"><rect y="0" x="0" width="2" height="2" fill="#8e8fa3"/><rect y="0" x="4" width="2" height="2" fill="#8e8fa3"/><rect y="0" x="8" width="2" height="2" fill="#8e8fa3"/></svg>
<div style="left:37px;top:762px;width:25px;height:13px;background:linear-gradient(#dcdde9,#b8b9d0);border-radius:0 0 6px 6px;"></div>
<div style="left:59px;top:576px;width:3px;height:188px;background:linear-gradient(90deg,#b4b5cb,#a0a1b8);border-radius:0 4px 0 0;"></div>
<svg style="left:52px;top:765px;" width="8" height="7" viewBox="0 0 8 7"><path d="M0 0v7M3 0v7l4-3.500z" fill="#000" stroke="#000" stroke-width=".8"/></svg>
<svg style="left:41px;top:589px" width="16" height="16" viewBox="0 0 16 16"><rect x="0" y="1" width="16" height="3" fill="#e11"/><rect x="0" y="5" width="16" height="3" fill="#ee1"/><rect x="0" y="9" width="16" height="3" fill="#12c"/><rect x="0" y="13" width="16" height="3" fill="#1a1"/></svg>
<svg style="left:41px;top:611px" width="16" height="16" viewBox="0 0 16 16"><circle cx="8" cy="8" r="7" fill="none" stroke="#a8a8b0"/><path d="M8 12a4 4 0 1 1 4-4c0 2-1 3-2 4" fill="none" stroke="#a8a8b0"/></svg>
<svg style="left:41px;top:633px" width="16" height="16" viewBox="0 0 16 16"><rect x="1.500" y=".5" width="13" height="15" fill="#fff" stroke="#000"/><text x="8" y="7" font-family="Liberation Sans,sans-serif" font-size="6" font-weight="bold">B</text><text x="8" y="14" font-family="Liberation Sans,sans-serif" font-size="6" font-weight="bold">C</text><path d="M3 5h4" stroke="#000"/><path d="M3 11.500h4" stroke="#12c" stroke-width="1.300"/></svg>
<svg style="left:41px;top:655px" width="16" height="16" viewBox="0 0 16 16"><path d="M2 15v-6h12v6" stroke="#000" fill="none"/><path d="M8 1v6M5 2.500l6 3M11 2.500l-6 3" stroke="#000"/></svg>
<svg style="left:41px;top:677px" width="16" height="16" viewBox="0 0 16 16"><rect x="3.500" y=".5" width="9" height="15" fill="#fff" stroke="#000" stroke-dasharray="2 1"/><path d="M6 3h1M9 5h1M6 7h1M9 9h1M6 11h1M9 13h1" stroke="#000" stroke-width="1.500"/></svg>
<svg style="left:41px;top:698px" width="16" height="16" viewBox="0 0 16 16"><circle cx="7" cy="7" r="6" fill="#fff" stroke="#000" stroke-width="1.200"/><path d="M7 3v4h3" stroke="#000" fill="none"/><path d="M9 15h7v-2h-2v-2a1.500 1.500 0 1 0-3 0v2h-2z" fill="#e11" stroke="#800" stroke-width=".5"/></svg>
<svg style="left:41px;top:720px" width="16" height="16" viewBox="0 0 16 16"><path d="M1 1h5l1 1h6v11h-12z" fill="#fe2" stroke="#a90" stroke-width=".8"/><path d="M8 15h8v-2h-2.500v-2a1.500 1.500 0 1 0-3 0v2h-2.500z" fill="#e11" stroke="#800" stroke-width=".5"/></svg>
<svg style="left:41px;top:742px" width="16" height="16" viewBox="0 0 16 16"><rect x="1.500" y="2.500" width="13" height="11" fill="#fff" stroke="#000" stroke-width="1.200"/><path d="M1.500 6h13M1.500 10h13M6 2.500v11M10.500 2.500v11" stroke="#000"/></svg>
<div style="left:72px;top:134px;width:147px;height:729px;background:#d9e4f1;"></div>
<div style="left:72px;top:134px;width:147px;height:20px;background:linear-gradient(#c8d7e7,#dae6f2);"></div>
<div style="left:76px;top:138.0px;font:12px/13.40px 'Liberation Sans',sans-serif;color:#34404f;white-space:pre;letter-spacing:-0.43px;">Project Explore...</div>
<svg style="left:169px;top:140px;" width="10" height="7" viewBox="0 0 10 7"><path d="M0 0h10l-5 6z" fill="#000"/></svg>
<svg style="left:188px;top:138px;" width="9" height="12" viewBox="0 0 9 12"><path d="M2 0h5v6h2v1.500h-3.500v4h-1.500v-4h-3.500v-1.500h2z" fill="#000"/><rect x="3.500" y="1.500" width="1.500" height="4" fill="#fff"/></svg>
<svg style="left:204px;top:139px;" width="10" height="10" viewBox="0 0 10 10"><path d="M1 1l8 8M9 1l-8 8" stroke="#000" stroke-width="1.800"/></svg>
<div style="left:72px;top:154px;width:147px;height:199px;background:#fff;border:1px solid #868b95;box-sizing:border-box;"></div>
<svg style="left:77px;top:158px;" width="17" height="14" viewBox="0 0 17 14"><path d="M1 1.500h5l1.500 1.500h8v10h-14.500z" fill="url(#fold)" stroke="#b38a25" stroke-width=".8"/></svg>
<div style="left:98px;top:159.0px;font:12px/13.40px 'Liberation Sans',sans-serif;color:#000;white-space:pre;letter-spacing:-0.00px;">interface</div>
<div style="left:94px;top:174px;width:85px;height:18px;box-sizing:border-box;border:1px solid #d0d0d0;border-radius:3px;background:linear-gradient(#fafafa,#ececec);"></div>
<svg style="left:96px;top:176px;" width="17" height="14" viewBox="0 0 17 14"><path d="M1 2h5l1.500 1.500h6v9h-12.500z" fill="#e9c25a" stroke="#b38a25" stroke-width=".8"/><path d="M3.500 6h13l-3 6.500h-12.500z" fill="#fde9a1" stroke="#b38a25" stroke-width=".8"/></svg>
<div style="left:117px;top:177.0px;font:12px/13.40px 'Liberation Sans',sans-serif;color:#000;white-space:pre;letter-spacing:-0.08px;">Color Dots</div>
<svg style="left:96px;top:194px;" width="17" height="14" viewBox="0 0 17 14"><path d="M1 1.500h5l1.500 1.500h8v10h-14.500z" fill="url(#fold)" stroke="#b38a25" stroke-width=".8"/></svg>
<div style="left:117px;top:195.0px;font:12px/13.40px 'Liberation Sans',sans-serif;color:#000;white-space:pre;letter-spacing:-0.09px;">Density Plot</div>
<svg style="left:96px;top:212px;" width="17" height="14" viewBox="0 0 17 14"><path d="M1 1.500h5l1.500 1.500h8v10h-14.500z" fill="url(#fold)" stroke="#b38a25" stroke-width=".8"/></svg>
<div style="left:117px;top:213.0px;font:12px/13.40px 'Liberation Sans',sans-serif;color:#000;white-space:pre;letter-spacing:-0.43px;">Favories</div>
<svg style="left:84px;top:173px;" width="12" height="48" viewBox="0 0 12 48"><path d="M.5 0v46.500M.5 10.500h10M.5 28.500h10M.5 46.500h10" stroke="#888" stroke-dasharray="1 1" fill="none"/></svg>
<div style="left:74px;top:333px;width:144px;height:18px;background:#f0f0f0;"></div>
<svg style="left:79px;top:338px;" width="5" height="8" viewBox="0 0 5 8"><path d="M4.500 0v8l-4.500-4z" fill="#444"/></svg>
<svg style="left:208px;top:338px;" width="5" height="8" viewBox="0 0 5 8"><path d="M0 0v8l4.500-4z" fill="#444"/></svg>
<div style="left:92px;top:334px;width:60px;height:16px;box-sizing:border-box;border:1px solid #979797;border-radius:2px;background:linear-gradient(#f3f3f3,#e6e6e6 45%,#d3d3d3 50%,#cfcfcf);"></div>
<div style="left:118.0px;top:338px;width:1px;height:8px;background:#5a5a5a;"></div>
<div style="left:121.0px;top:338px;width:1px;height:8px;background:#5a5a5a;"></div>
<div style="left:124.0px;top:338px;width:1px;height:8px;background:#5a5a5a;"></div>
<div style="left:72px;top:357px;width:147px;height:506px;background:#fff;border:1px solid #868b95;box-sizing:border-box;"></div>
<div style="left:74px;top:358px;width:144px;height:22px;background:#fff;border-bottom:1px solid #e3e3e3;box-sizing:border-box;"></div>
<div style="left:166px;top:358px;width:1px;height:22px;background:#dcdcdc;"></div>
<div style="left:215px;top:358px;width:1px;height:22px;background:#dcdcdc;"></div>
<div style="left:79px;top:364.0px;font:12px/13.40px 'Liberation Sans',sans-serif;color:#000;white-space:pre;letter-spacing:-1.00px;">Name</div>
<div style="left:172px;top:364.0px;font:12px/13.40px 'Liberation Sans',sans-serif;color:#000;white-space:pre;letter-spacing:-1.11px;">Size</div>
<svg style="left:150px;top:366px;" width="9" height="5" viewBox="0 0 9 5"><path d="M0 5l4.500-5 4.500 5z" fill="#9a9a9a"/></svg>
<div style="left:167px;top:380px;width:1px;height:463px;background:#cfe0f5;"></div>
<div style="left:216px;top:380px;width:1px;height:463px;background:#dfeaf8;"></div>
<svg style="left:78px;top:384px" width="16" height="16" viewBox="0 0 16 16"><rect x="1" y="1" width="14" height="14" fill="#cfe8cf" stroke="#888" stroke-dasharray="1 1"/><path d="M1 4h14M1 7h14M1 10h14M1 13h14M4 1v14M8 1v14M12 1v14" stroke="#9a9" stroke-width=".6"/><rect x="1" y="1" width="14" height="3" fill="#e8a0a0" opacity=".7"/></svg>
<div style="left:96px;top:386.5px;font:12px/13.40px 'Liberation Sans',sans-serif;color:#000;white-space:pre;letter-spacing:-0.76px;">Book3</div>
<div style="left:172px;top:386.5px;font:12px/13.40px 'Liberation Sans',sans-serif;color:#000;white-space:pre;letter-spacing:0.21px;">22KB</div>
<svg style="left:78px;top:403px" width="16" height="16" viewBox="0 0 16 16"><rect x="-.5" y="-.5" width="17" height="17" fill="none" stroke="#e2e" stroke-width="1.500"/><rect x="0" y="0" width="14" height="14" fill="#fff"/><path d="M.5 .5h13v13h-13z" stroke="#f55" fill="none" stroke-dasharray="1 1"/><rect x="2" y="2" width="10" height="4" fill="#0ee"/><rect x="2" y="7" width="10" height="4" fill="#0ee"/><path d="M3 4.500l2-1 2 .5 2-1 2 1" stroke="#000" fill="none" stroke-width=".8"/><path d="M2 6.500h10" stroke="#e11" stroke-dasharray="1 1"/><path d="M3 10c2-2 5-2 8-1.500" stroke="#c3c" fill="none"/><rect x="2" y="11" width="2" height="2" fill="#e11"/><path d="M14.500 1v14.200M1 14.500h14" stroke="#000" stroke-width="1.400"/></svg>
<div style="left:96px;top:405.5px;font:bold 12px/13.40px 'Liberation Sans',sans-serif;color:#000;white-space:pre;letter-spacing:-0.21px;">Density Plot</div>
<div style="left:172px;top:405.5px;font:bold 12px/13.40px 'Liberation Sans',sans-serif;color:#000;white-space:pre;letter-spacing:-0.40px;">101...</div>
<svg style="left:78px;top:422px" width="16" height="16" viewBox="0 0 16 16"><rect x="0" y="0" width="14" height="14" fill="#fff"/><rect x="0" y="4" width="14" height="10" fill="#2e2"/><rect x="0" y="6.500" width="14" height="2.500" fill="#9f9"/><rect x="0" y="11.500" width="14" height="2.500" fill="#9f9"/><path d="M4.500 0v14M9.500 0v14M0 4h14M0 6.500h14M0 9h14M0 11.500h14" stroke="#23c" stroke-width=".8"/><rect x="1" y="1" width="3" height="2.500" fill="#e22"/><rect x="5.500" y="1" width="3" height="2.500" fill="#e22"/><rect x="10.500" y="1" width="3" height="2.500" fill="#e22"/><path d="M14.500 1v14.200M1 14.500h14" stroke="#000" stroke-width="1.400"/></svg>
<div style="left:96px;top:424.5px;font:12px/13.40px 'Liberation Sans',sans-serif;color:#000;white-space:pre;letter-spacing:-0.09px;">Density Plot</div>
<div style="left:172px;top:424.5px;font:12px/13.40px 'Liberation Sans',sans-serif;color:#000;white-space:pre;letter-spacing:0.16px;">9MB</div>
<svg style="left:78px;top:441px" width="16" height="16" viewBox="0 0 16 16"><path d="M1 12l5-10h9l-5 10z" fill="#bfe6e6" stroke="#8aa" stroke-dasharray="1 1"/><path d="M4 9h7M5 7h7M6 5h7" stroke="#6aa" stroke-width=".7"/></svg>
<div style="left:96px;top:443.5px;font:12px/13.40px 'Liberation Sans',sans-serif;color:#000;white-space:pre;letter-spacing:-0.09px;">Notes</div>
<div style="left:172px;top:443.5px;font:12px/13.40px 'Liberation Sans',sans-serif;color:#000;white-space:pre;letter-spacing:-0.39px;">980 ...</div>
<svg style="left:78px;top:460px" width="16" height="16" viewBox="0 0 16 16"><rect x="0" y="0" width="14" height="14" fill="#fff"/><path d="M.5 .5h13v13h-13z" stroke="#f55" fill="none" stroke-dasharray="1 1"/><rect x="2" y="2" width="10" height="4" fill="#0ee"/><rect x="2" y="7" width="10" height="4" fill="#0ee"/><path d="M3 4.500l2-1 2 .5 2-1 2 1" stroke="#000" fill="none" stroke-width=".8"/><path d="M2 6.500h10" stroke="#e11" stroke-dasharray="1 1"/><path d="M3 10c2-2 5-2 8-1.500" stroke="#c3c" fill="none"/><rect x="2" y="11" width="2" height="2" fill="#e11"/><path d="M14.500 1v14.200M1 14.500h14" stroke="#000" stroke-width="1.400"/></svg>
<div style="left:96px;top:462.5px;font:12px/13.40px 'Liberation Sans',sans-serif;color:#000;white-space:pre;letter-spacing:0.02px;">Population...</div>
<div style="left:172px;top:462.5px;font:12px/13.40px 'Liberation Sans',sans-serif;color:#000;white-space:pre;letter-spacing:-0.76px;">405KB</div>
<svg style="left:78px;top:479px" width="16" height="16" viewBox="0 0 16 16"><rect x="0" y="0" width="14" height="14" fill="#fff"/><rect x="0" y="4" width="14" height="10" fill="#2e2"/><rect x="0" y="6.500" width="14" height="2.500" fill="#9f9"/><rect x="0" y="11.500" width="14" height="2.500" fill="#9f9"/><path d="M4.500 0v14M9.500 0v14M0 4h14M0 6.500h14M0 9h14M0 11.500h14" stroke="#23c" stroke-width=".8"/><rect x="1" y="1" width="3" height="2.500" fill="#e22"/><rect x="5.500" y="1" width="3" height="2.500" fill="#e22"/><rect x="10.500" y="1" width="3" height="2.500" fill="#e22"/><path d="M14.500 1v14.200M1 14.500h14" stroke="#000" stroke-width="1.400"/></svg>
<div style="left:96px;top:481.5px;font:12px/13.40px 'Liberation Sans',sans-serif;color:#000;white-space:pre;letter-spacing:-0.11px;">United Stat...</div>
<div style="left:172px;top:481.5px;font:12px/13.40px 'Liberation Sans',sans-serif;color:#000;white-space:pre;letter-spacing:0.16px;">2MB</div>
<div style="left:74px;top:843px;width:144px;height:18px;background:#f0f0f0;"></div>
<svg style="left:79px;top:848px;" width="5" height="8" viewBox="0 0 5 8"><path d="M4.500 0v8l-4.500-4z" fill="#444"/></svg>
<svg style="left:208px;top:848px;" width="5" height="8" viewBox="0 0 5 8"><path d="M0 0v8l4.500-4z" fill="#444"/></svg>
<div style="left:93px;top:844px;width:56px;height:16px;box-sizing:border-box;border:1px solid #979797;border-radius:2px;background:linear-gradient(#f3f3f3,#e6e6e6 45%,#d3d3d3 50%,#cfcfcf);"></div>
<div style="left:117.0px;top:848px;width:1px;height:8px;background:#5a5a5a;"></div>
<div style="left:120.0px;top:848px;width:1px;height:8px;background:#5a5a5a;"></div>
<div style="left:123.0px;top:848px;width:1px;height:8px;background:#5a5a5a;"></div>
<div style="left:1385px;top:134px;width:152px;height:729px;background:#f0f0f0;"></div>
<div style="left:1385px;top:134px;width:152px;height:20px;background:linear-gradient(#c8d7e7,#dae6f2);"></div>
<div style="left:1389px;top:138.0px;font:12px/13.40px 'Liberation Sans',sans-serif;color:#2b3038;white-space:pre;letter-spacing:-0.45px;">Apps</div>
<svg style="left:1489px;top:141px;" width="10" height="7" viewBox="0 0 10 7"><path d="M0 0h10l-5 6z" fill="#000"/></svg>
<svg style="left:1506px;top:138px;" width="9" height="12" viewBox="0 0 9 12"><path d="M2 0h5v6h2v1.500h-3.500v4h-1.500v-4h-3.500v-1.500h2z" fill="#000"/><rect x="3.500" y="1.500" width="1.500" height="4" fill="#fff"/></svg>
<svg style="left:1522px;top:139px;" width="10" height="10" viewBox="0 0 10 10"><path d="M1 1l8 8M9 1l-8 8" stroke="#000" stroke-width="1.800"/></svg>
<div style="left:1405px;top:154px;width:130px;height:708px;background:#fff;border:1px solid #8e96a8;border-color:#6f6f6f #cfcfcf #cfcfcf #6f6f6f;box-sizing:border-box;"></div>
<svg style="left:1393px;top:158px;" width="8" height="58" viewBox="0 0 8 58"><path d="M0 .5h7M0 7l3.500-5 3.500 5zM0 22l3.500-5 3.500 5zM0 34l3.500 5 3.500-5zM0 48l3.500 5 3.500-5zM0 54.500h7" fill="#000" stroke="#000" stroke-width=".8"/></svg>
<svg style="left:1386px;top:222px;" width="22" height="160" viewBox="0 0 22 160"><path d="M19.500 0v2l-15 6v16l15 6" fill="none" stroke="#7b8296"/><path d="M19.500 28l-15 6v60l15 6" fill="none" stroke="#7b8296"/><path d="M19.500 98l-15 6v38l15 8v2" fill="#fff" stroke="#7b8296"/></svg>
<div style="left:1403px;top:231px;transform-origin:0 0;transform:rotate(90deg);font:12px/12px 'Liberation Sans',sans-serif;color:#333;white-space:pre;letter-spacing:0.33px;">All</div>
<div style="left:1403px;top:259px;transform-origin:0 0;transform:rotate(90deg);font:12px/12px 'Liberation Sans',sans-serif;color:#333;white-space:pre;letter-spacing:-0.26px;">Connectors</div>
<div style="left:1404px;top:331px;transform-origin:0 0;transform:rotate(90deg);font:bold 12px/12px 'Liberation Sans',sans-serif;color:#000;white-space:pre;letter-spacing:-0.01px;">2019b</div>
<div style="left:1518px;top:155px;width:16px;height:706px;background:#f0f0f0;"></div>
<svg style="left:1522px;top:162px;" width="8" height="5" viewBox="0 0 8 5"><path d="M0 5l4-5 4 5z" fill="#444"/></svg>
<svg style="left:1522px;top:849px;" width="8" height="5" viewBox="0 0 8 5"><path d="M0 0l4 5 4-5z" fill="#444"/></svg>
<div style="left:1519px;top:176px;width:14px;height:530px;box-sizing:border-box;border:1px solid #979797;border-radius:2px;background:linear-gradient(90deg,#f3f3f3,#e6e6e6 45%,#d3d3d3 50%,#cfcfcf);"></div>
<div style="left:1522px;top:437px;width:8px;height:1px;background:#5a5a5a;"></div>
<div style="left:1522px;top:440px;width:8px;height:1px;background:#5a5a5a;"></div>
<div style="left:1522px;top:443px;width:8px;height:1px;background:#5a5a5a;"></div>
<svg style="left:1428px;top:158px;" width="36" height="36" viewBox="0 0 36 36"><rect x="2.500" y="1.500" width="27" height="27" fill="#fff" stroke="#2b88d8"/><rect x="2" y="1" width="28" height="4" fill="#0a78d6"/><rect x="4" y="7" width="9" height="12" fill="#c9c9c9"/><rect x="15.500" y="9.500" width="9" height="9" fill="#fff" stroke="#c9c9c9"/><path d="M15 7.500h8M5 21.500h3M5 25.500h3" stroke="#b5b5b5" stroke-dasharray="1 1"/><rect x="9.500" y="20.500" width="6" height="2" fill="#fff" stroke="#b5b5b5" stroke-width=".8"/><rect x="9.500" y="24.500" width="6" height="2" fill="#fff" stroke="#b5b5b5" stroke-width=".8"/><circle cx="28.500" cy="7" r="5" fill="#f40000"/><circle cx="24.500" cy="23" r="9" fill="#e0202c"/><circle cx="24.500" cy="23" r="7" fill="none" stroke="#fff" stroke-width=".8" opacity=".7"/><path d="M24.500 18.500v9M20 23h9" stroke="#fff" stroke-width="3"/></svg>
<div style="left:1420.0px;top:196.0px;font:12px/13.40px 'Liberation Sans',sans-serif;color:#000;white-space:pre;letter-spacing:0.09px;">Add Apps</div>
<svg style="left:1428px;top:233px;" width="36" height="36" viewBox="0 0 36 36"><rect x="1" y="1" width="31" height="31" fill="#fdf4b6"/><circle cx="9" cy="9" r="3" fill="#f4a" opacity=".6"/><circle cx="17" cy="9" r="3" fill="#7de" opacity=".6"/><circle cx="9" cy="24" r="3" fill="#f4a" opacity=".6"/><circle cx="24" cy="24" r="3" fill="#7de" opacity=".6"/><circle cx="17" cy="17" r="3" fill="#f4a" opacity=".5"/><circle cx="26" cy="6" r="5" fill="#f55"/></svg>
<div style="left:1438.3px;top:271.0px;font:12px/13.40px 'Liberation Sans',sans-serif;color:#5a5a64;white-space:pre;">2D</div>
<div style="left:1411.0px;top:286.0px;font:12px/13.40px 'Liberation Sans',sans-serif;color:#5a5a64;white-space:pre;letter-spacing:-0.14px;">Correlation ...</div>
<svg style="left:1428px;top:308px;" width="36" height="36" viewBox="0 0 36 36"><circle cx="17" cy="19" r="15" fill="#fff" stroke="#223" stroke-width="1.500"/><path d="M2 19a15 15 0 0 0 30 0z" fill="#8ed0f5" stroke="#223"/><ellipse cx="17" cy="19" rx="15" ry="4.500" fill="#cde9fb" stroke="#223"/><path d="M17 19l-7-13M17 19l8-9M17 19l-9 1" stroke="#e11" stroke-width="1.300"/><circle cx="26" cy="6" r="5" fill="#f11"/></svg>
<div style="left:1423.5px;top:346.0px;font:12px/13.40px 'Liberation Sans',sans-serif;color:#000;white-space:pre;letter-spacing:-0.17px;">3D Wind</div>
<div style="left:1432.5px;top:361.0px;font:12px/13.40px 'Liberation Sans',sans-serif;color:#000;white-space:pre;letter-spacing:-0.34px;">Rose</div>
<svg style="left:1430px;top:383px;" width="32" height="32" viewBox="0 0 32 32"><rect x=".5" y=".5" width="31" height="31" fill="#fff" stroke="#333"/><path d="M2 26l2-3 2 4 2-5 2 3 2-2 2-14 2 4 2-6 2 5 2-3 2 4 2-3 2 2" stroke="#333" fill="none"/><path d="M2 25h11M15 10h15" stroke="#e11" stroke-width="1.500"/></svg>
<div style="left:1425.5px;top:421.0px;font:12px/13.40px 'Liberation Sans',sans-serif;color:#000;white-space:pre;letter-spacing:-0.21px;">Change</div>
<div style="left:1426.0px;top:436.0px;font:12px/13.40px 'Liberation Sans',sans-serif;color:#000;white-space:pre;letter-spacing:-0.09px;">Point ...</div>
<svg style="left:1430px;top:458px;" width="32" height="36" viewBox="0 0 32 36"><rect x="4" y="5" width="24" height="24" fill="#f6a6a6"/><path d="M5 5c4 1.500 18 1.500 22 0c-5 7-5 17 0 24c-4-1.500-18-1.500-22 0c5-7 5-17 0-24z" fill="#8a4c46" stroke="#5e2f2b" stroke-width=".6"/><path d="M3 11h7M3 17h8M3 23h7M29 11h-7M29 17h-8M29 23h-7" stroke="#2222ee" stroke-width="1.300"/><path d="M8 9l3 2-3 2zM9 15l3 2-3 2zM8 21l3 2-3 2zM24 9l-3 2 3 2zM23 15l-3 2 3 2zM24 21l-3 2 3 2z" fill="#2222ee"/></svg>
<div style="left:1410.0px;top:496.0px;font:12px/13.40px 'Liberation Sans',sans-serif;color:#000;white-space:pre;letter-spacing:0.06px;">Concave Hull</div>
<svg style="left:1428px;top:533px;" width="36" height="36" viewBox="0 0 36 36"><text x="9" y="8" font-family="Liberation Serif,serif" font-size="7" font-style="italic" font-weight="bold">dy</text><path d="M8 10h9" stroke="#000" stroke-width=".7"/><text x="9" y="16" font-family="Liberation Serif,serif" font-size="7" font-style="italic" font-weight="bold">dt</text><text x="18" y="12" font-family="Liberation Serif,serif" font-size="7" font-style="italic" font-weight="bold">= ay</text><path d="M3 32c8 1 20-3 28-14" stroke="#00a" fill="none" stroke-width="1.200"/><path d="M3 32c8 1 20-3 28-14" stroke="#e11" fill="none" stroke-width="3" stroke-dasharray="1.500 2" stroke-linecap="round"/></svg>
<div style="left:1426.0px;top:571.0px;font:12px/13.40px 'Liberation Sans',sans-serif;color:#000;white-space:pre;letter-spacing:-0.44px;">Fit ODE</div>
<svg style="left:1428px;top:610px;" width="36" height="34" viewBox="0 0 36 34"><path d="M3 6h9l2 3h17l-4 22h-24z" fill="#1a5fa8"/><path d="M6 12h27l-5 19h-26z" fill="#2e7dd1"/><text x="10" y="26" font-family="Liberation Sans,sans-serif" font-size="12" font-weight="bold" font-style="italic" fill="#fff">F</text><circle cx="25" cy="25" r="6" fill="#fff" stroke="#1a5fa8" stroke-width="1.500"/><path d="M25 21.500v7M21.500 25h7" stroke="#1a5fa8" stroke-width="2"/></svg>
<div style="left:1427.5px;top:646.0px;font:12px/13.40px 'Liberation Sans',sans-serif;color:#000;white-space:pre;letter-spacing:0.72px;">Fitting</div>
<div style="left:1424.5px;top:661.0px;font:12px/13.40px 'Liberation Sans',sans-serif;color:#000;white-space:pre;letter-spacing:0.04px;">Functi...</div>
<svg style="left:1430px;top:685px;" width="34" height="33" viewBox="0 0 34 33"><rect x="2" y="1" width="6" height="30" fill="#fff" stroke="#7a89a8" stroke-width=".8"/><path d="M2 4.0h6" stroke="#7a89a8" stroke-width="1.200"/><path d="M2 8.5h6" stroke="#7a89a8" stroke-width="1.200"/><path d="M2 13.0h6" stroke="#e11" stroke-width="1.200"/><path d="M2 17.5h6" stroke="#2a2" stroke-width="1.200"/><path d="M2 22.0h6" stroke="#12c" stroke-width="1.200"/><path d="M2 26.5h6" stroke="#7a89a8" stroke-width="1.200"/><rect x="10" y="1" width="6" height="30" fill="#fff" stroke="#7a89a8" stroke-width=".8"/><path d="M10 5.5h6" stroke="#7a89a8" stroke-width="1.200"/><path d="M10 10.0h6" stroke="#7a89a8" stroke-width="1.200"/><path d="M10 14.5h6" stroke="#e11" stroke-width="1.200"/><path d="M10 19.0h6" stroke="#2a2" stroke-width="1.200"/><path d="M10 23.5h6" stroke="#12c" stroke-width="1.200"/><path d="M10 28.0h6" stroke="#7a89a8" stroke-width="1.200"/><rect x="18" y="1" width="6" height="30" fill="#fff" stroke="#7a89a8" stroke-width=".8"/><path d="M18 4.0h6" stroke="#7a89a8" stroke-width="1.200"/><path d="M18 8.5h6" stroke="#7a89a8" stroke-width="1.200"/><path d="M18 13.0h6" stroke="#e11" stroke-width="1.200"/><path d="M18 17.5h6" stroke="#2a2" stroke-width="1.200"/><path d="M18 22.0h6" stroke="#12c" stroke-width="1.200"/><path d="M18 26.5h6" stroke="#7a89a8" stroke-width="1.200"/><rect x="26" y="1" width="6" height="30" fill="#fff" stroke="#7a89a8" stroke-width=".8"/><path d="M26 5.5h6" stroke="#7a89a8" stroke-width="1.200"/><path d="M26 10.0h6" stroke="#7a89a8" stroke-width="1.200"/><path d="M26 14.5h6" stroke="#e11" stroke-width="1.200"/><path d="M26 19.0h6" stroke="#2a2" stroke-width="1.200"/><path d="M26 23.5h6" stroke="#12c" stroke-width="1.200"/><path d="M26 28.0h6" stroke="#7a89a8" stroke-width="1.200"/></svg>
<div style="left:1436.5px;top:721.0px;font:12px/13.40px 'Liberation Sans',sans-serif;color:#000;white-space:pre;letter-spacing:0.16px;">Gel</div>
<div style="left:1420.0px;top:736.0px;font:12px/13.40px 'Liberation Sans',sans-serif;color:#000;white-space:pre;letter-spacing:0.07px;">Molecul...</div>
<svg style="left:1428px;top:760px;" width="36" height="34" viewBox="0 0 36 34"><path d="M4 24h28M16 6v26" stroke="#000"/><path d="M4 30c12 0 12-22 24-24" stroke="#2a2" fill="none" stroke-width="1.300"/><path d="M5 31c10-1 16-8 22-18" stroke="#e11" fill="none" stroke-width="1.300"/><path d="M4 30c14-2 18-12 22-16M12 32c6-4 10-12 14-18" stroke="#12c" fill="none" stroke-width="1.300"/><circle cx="28" cy="7" r="5.500" fill="#f11"/></svg>
<div style="left:1419.0px;top:796.0px;font:12px/13.40px 'Liberation Sans',sans-serif;color:#000;white-space:pre;letter-spacing:-0.22px;">Hysteresis</div>
<svg style="left:1433px;top:835px;" width="28" height="27" viewBox="0 0 28 27"><rect x="0" y="0" width="27" height="30" rx="5" fill="#9adba0"/><path d="M13 4c4-1 8 1 9 5s2 7-1 10-8 5-12 3-6-6-5-10 4-7 9-8z" fill="#0f7d4d"/><circle cx="13" cy="13" r="3" fill="#3fae78"/></svg>
<div class="tbv" style="left:1540px;top:134px;width:20px;height:382px;"></div>
<svg style="left:1545px;top:138px;" width="11" height="3" viewBox="0 0 11 3"><rect y="0" x="0" width="2" height="2" fill="#8e8fa3"/><rect y="0" x="4" width="2" height="2" fill="#8e8fa3"/><rect y="0" x="8" width="2" height="2" fill="#8e8fa3"/></svg>
<div style="left:1560px;top:134px;width:3px;height:382px;background:linear-gradient(90deg,#b4b5cb,#a0a1b8);border-radius:0 4px 0 0;"></div>
<div style="left:1540px;top:514px;width:23px;height:12px;background:linear-gradient(#dcdde9,#b8b9d0);border-radius:0 0 6px 6px;"></div>
<svg style="left:1554px;top:516px;" width="8" height="7" viewBox="0 0 8 7"><path d="M0 0v7M3 0v7l4-3.500z" fill="#000" stroke="#000" stroke-width=".8"/></svg>
<svg style="left:1542px;top:147px" width="16" height="16" viewBox="0 0 16 16"><path d="M1 12l4-3 3 2 3-4 4-2" stroke="#000" stroke-width="3" fill="none" stroke-dasharray="3 1"/></svg>
<svg style="left:1542px;top:169px" width="16" height="16" viewBox="0 0 16 16"><path d="M3 14v-12M1 4l2-3 2 3M3 14h12M12 12l3 2-3 2" stroke="#e11" fill="none" stroke-width="1.200"/><path d="M3 14l9-9" stroke="#e11"/></svg>
<svg style="left:1542px;top:191px" width="16" height="16" viewBox="0 0 16 16"><path d="M3 1v13h12M12 12l3 2-3 2" stroke="#e11" fill="none" stroke-width="1.200"/><path d="M3 1v13M3 14l9-10" stroke="#000"/></svg>
<svg style="left:1542px;top:213px" width="16" height="16" viewBox="0 0 16 16"><path d="M3 14v-12M1 4l2-3 2 3" stroke="#e11" fill="none" stroke-width="1.200"/><path d="M3 14h12M3 14l10-10" stroke="#000" stroke-width="1.200"/></svg>
<svg style="left:1542px;top:235px" width="16" height="16" viewBox="0 0 16 16"><path d="M3 6a5 5 0 0 1 9-2l1-2M13 10a5 5 0 0 1-9 2l-1 2" stroke="#000" fill="none" stroke-width="1.200"/><text x="3" y="11" font-family="Liberation Sans,sans-serif" font-size="7" font-weight="bold">XY</text></svg>
<svg style="left:1542px;top:257px" width="16" height="16" viewBox="0 0 16 16"><path d="M2 1v13h13" stroke="#000" fill="none" stroke-dasharray="1 1"/><path d="M10 2a1.300 1.300 0 1 1 0 2.600M5 7l3-2 3 1 2-1M8 5l-1 4 3 2-2 3M7 9l-3 3" stroke="#000" fill="none" stroke-width="1.300"/></svg>
<svg style="left:1542px;top:287px" width="16" height="16" viewBox="0 0 16 16"><rect x="1.500" y="1.500" width="13" height="13" fill="#fff" stroke="#000" stroke-width="1.200"/><path d="M1.500 8h13M4 10v3h3M10 10v3h3" stroke="#000" fill="none"/></svg>
<svg style="left:1542px;top:309px" width="16" height="16" viewBox="0 0 16 16"><rect x="1.500" y="1.500" width="13" height="5" fill="#fff" stroke="#000"/><rect x="1.500" y="9.500" width="5" height="5" fill="#fff" stroke="#000"/><rect x="9.500" y="9.500" width="5" height="5" fill="#fff" stroke="#000"/><path d="M4 3v2h2M10 3v2h2" stroke="#000" fill="none"/></svg>
<svg style="left:1542px;top:331px" width="16" height="16" viewBox="0 0 16 16"><rect x="1.500" y="9.500" width="13" height="5" fill="#fff" stroke="#000"/><rect x="1.500" y="1.500" width="5" height="5" fill="#fff" stroke="#000"/><rect x="9.500" y="1.500" width="5" height="5" fill="#fff" stroke="#000"/><path d="M4 11v2h2M10 11v2h2" stroke="#000" fill="none"/></svg>
<svg style="left:1542px;top:353px" width="16" height="16" viewBox="0 0 16 16"><rect x="1" y="1" width="13" height="7" fill="#fff" stroke="#12c"/><path d="M2 5c2-3 3 2 5 0s3-2 6 0" stroke="#e11" fill="none"/><rect x="2" y="9" width="13" height="6" fill="#fff" stroke="#000"/><path d="M5 10l3 3 3-3" stroke="#000" fill="none"/></svg>
<svg style="left:1542px;top:383px" width="16" height="16" viewBox="0 0 16 16"><path d="M2 2v12h12" stroke="#000" fill="none" stroke-width="1.200" stroke-dasharray="1 1"/><path d="M2 2v12h12" stroke="#000" fill="none"/></svg>
<svg style="left:1542px;top:405px" width="16" height="16" viewBox="0 0 16 16"><path d="M2 14v-12h12" stroke="#aaa" fill="none" stroke-width="1.200" stroke-dasharray="1 1"/></svg>
<svg style="left:1542px;top:427px" width="16" height="16" viewBox="0 0 16 16"><path d="M14 2v12h-12" stroke="#aaa" fill="none" stroke-width="1.200" stroke-dasharray="1 1"/></svg>
<svg style="left:1542px;top:449px" width="16" height="16" viewBox="0 0 16 16"><path d="M2 2h12v12h-12z" stroke="#555" fill="none" stroke-width="1.200" stroke-dasharray="1 1"/></svg>
<svg style="left:1542px;top:471px" width="16" height="16" viewBox="0 0 16 16"><path d="M3 3v10h10" stroke="#555" fill="none" stroke-dasharray="1 1"/><path d="M6 6v4h5" stroke="#000" fill="none" stroke-width="1.300"/></svg>
<svg style="left:1542px;top:493px" width="16" height="16" viewBox="0 0 16 16"><path d="M3 1v13h12" stroke="#555" fill="none" stroke-dasharray="1 1"/><path d="M6 10l3-6 2 4" stroke="#e11" fill="none" stroke-width="1.300"/></svg>
<div style="left:1543px;top:280px;width:15px;height:1px;background:#a9aabd;"></div>
<div style="left:1543px;top:376px;width:15px;height:1px;background:#a9aabd;"></div>
<div class="tbv" style="left:1540px;top:528px;width:20px;height:348px;"></div>
<svg style="left:1545px;top:532px;" width="11" height="3" viewBox="0 0 11 3"><rect y="0" x="0" width="2" height="2" fill="#8e8fa3"/><rect y="0" x="4" width="2" height="2" fill="#8e8fa3"/><rect y="0" x="8" width="2" height="2" fill="#8e8fa3"/></svg>
<div style="left:1560px;top:528px;width:3px;height:348px;background:linear-gradient(90deg,#b4b5cb,#a0a1b8);border-radius:0 4px 0 0;"></div>
<div style="left:1540px;top:874px;width:23px;height:12px;background:linear-gradient(#dcdde9,#b8b9d0);border-radius:0 0 6px 6px;"></div>
<svg style="left:1546px;top:877px;" width="16" height="7" viewBox="0 0 16 7"><path d="M0 0h3l-1.500 2zM0 6h3l-1.500-2zM8 0v7M11 0v7l4-3.500z" fill="#000" stroke="#000" stroke-width=".6"/></svg>
<svg style="left:1542px;top:538px" width="16" height="16" viewBox="0 0 16 16"><rect x="4" y="2" width="10" height="4" fill="none" stroke="#a6a6b2" stroke-width="1.100"/><rect x="4" y="9" width="7" height="5" fill="none" stroke="#a6a6b2" stroke-width="1.100"/><path d="M2 1v14" stroke="#a6a6b2" fill="none"/></svg>
<svg style="left:1542px;top:558px" width="16" height="16" viewBox="0 0 16 16"><rect x="2" y="2" width="10" height="4" fill="none" stroke="#a6a6b2" stroke-width="1.100"/><rect x="5" y="9" width="7" height="5" fill="none" stroke="#a6a6b2" stroke-width="1.100"/><path d="M14 1v14" stroke="#a6a6b2" fill="none"/></svg>
<svg style="left:1542px;top:589px" width="16" height="16" viewBox="0 0 16 16"><rect x="2" y="4" width="4" height="10" fill="none" stroke="#a6a6b2" stroke-width="1.100"/><rect x="9" y="4" width="5" height="7" fill="none" stroke="#a6a6b2" stroke-width="1.100"/><path d="M1 2h14" stroke="#a6a6b2" fill="none"/></svg>
<svg style="left:1542px;top:609px" width="16" height="16" viewBox="0 0 16 16"><rect x="2" y="2" width="4" height="10" fill="none" stroke="#a6a6b2" stroke-width="1.100"/><rect x="9" y="5" width="5" height="7" fill="none" stroke="#a6a6b2" stroke-width="1.100"/><path d="M1 14h14" stroke="#a6a6b2" fill="none"/></svg>
<svg style="left:1542px;top:642px" width="16" height="16" viewBox="0 0 16 16"><rect x="4" y="2" width="8" height="4" fill="none" stroke="#a6a6b2" stroke-width="1.100"/><rect x="2" y="9" width="12" height="5" fill="none" stroke="#a6a6b2" stroke-width="1.100"/><path d="M8 0v16" stroke="#a6a6b2" fill="none"/></svg>
<svg style="left:1542px;top:662px" width="16" height="16" viewBox="0 0 16 16"><rect x="2" y="4" width="4" height="8" fill="none" stroke="#a6a6b2" stroke-width="1.100"/><rect x="9" y="2" width="5" height="12" fill="none" stroke="#a6a6b2" stroke-width="1.100"/><path d="M0 8h16" stroke="#a6a6b2" fill="none"/></svg>
<svg style="left:1542px;top:691px" width="16" height="16" viewBox="0 0 16 16"><rect x="3" y="2" width="10" height="4" fill="none" stroke="#a6a6b2" stroke-width="1.100"/><rect x="3" y="10" width="10" height="4" fill="none" stroke="#a6a6b2" stroke-width="1.100"/><path d="M1 1v14M15 1v14" stroke="#a6a6b2" fill="none"/></svg>
<svg style="left:1542px;top:712px" width="16" height="16" viewBox="0 0 16 16"><rect x="2" y="3" width="4" height="10" fill="none" stroke="#a6a6b2" stroke-width="1.100"/><rect x="10" y="3" width="4" height="10" fill="none" stroke="#a6a6b2" stroke-width="1.100"/><path d="M1 1h14M1 15h14" stroke="#a6a6b2" fill="none"/></svg>
<svg style="left:1542px;top:748px" width="16" height="16" viewBox="0 0 16 16"><rect x="1" y="4" width="4" height="8" fill="none" stroke="#a6a6b2" stroke-width="1.100"/><rect x="6" y="2" width="4" height="12" fill="none" stroke="#a6a6b2" stroke-width="1.100"/><rect x="11" y="6" width="4" height="4" fill="none" stroke="#a6a6b2" stroke-width="1.100"/></svg>
<svg style="left:1542px;top:769px" width="16" height="16" viewBox="0 0 16 16"><rect x="5" y="1" width="6" height="4" fill="none" stroke="#a6a6b2" stroke-width="1.100"/><rect x="2" y="6" width="12" height="4" fill="none" stroke="#a6a6b2" stroke-width="1.100"/><rect x="5" y="11" width="6" height="4" fill="none" stroke="#a6a6b2" stroke-width="1.100"/></svg>
<svg style="left:1542px;top:790px" width="16" height="16" viewBox="0 0 16 16"><rect x="2" y="2" width="9" height="9" fill="#a6a6b2"/><rect x="6" y="6" width="8" height="8" fill="#8a8a96" stroke="#fff" stroke-width=".7"/></svg>
<svg style="left:1542px;top:809px" width="16" height="16" viewBox="0 0 16 16"><rect x="6" y="6" width="8" height="8" fill="#a6a6b2"/><rect x="2" y="2" width="9" height="9" fill="#8a8a96" stroke="#fff" stroke-width=".7"/></svg>
<svg style="left:1542px;top:842px" width="16" height="16" viewBox="0 0 16 16"><rect x="3.500" y="4.500" width="9" height="7" fill="none" stroke="#a6a6b2"/><path d="M1 2l1 1M15 2l-1 1M1 14l1-1M15 14l-1-1" stroke="#a6a6b2"/></svg>
<div style="left:1543px;top:581px;width:15px;height:1px;background:#a9aabd;"></div>
<div style="left:1543px;top:633px;width:15px;height:1px;background:#a9aabd;"></div>
<div style="left:1543px;top:685px;width:15px;height:1px;background:#a9aabd;"></div>
<div style="left:1543px;top:737px;width:15px;height:1px;background:#a9aabd;"></div>
<div style="left:1543px;top:833px;width:15px;height:1px;background:#a9aabd;"></div>
<div style="left:1543px;top:865px;width:15px;height:1px;background:#a9aabd;"></div>
<div style="left:224px;top:134px;width:1155px;height:728px;background:#ababab;"></div>
<div style="left:224px;top:134px;width:1155px;height:1px;background:#9c9c9c;"></div>
<div style="left:224px;top:135px;width:1155px;height:1px;background:#6e6e6e;"></div>
<div style="left:224px;top:134px;width:1px;height:728px;background:#9c9c9c;"></div>
<div style="left:225px;top:135px;width:1px;height:727px;background:#6e6e6e;"></div>
<div style="left:226px;top:136px;width:2px;height:726px;background:#979797;"></div>
<div style="left:1379px;top:134px;width:2px;height:729px;background:#fff;"></div>
<div style="left:224px;top:862px;width:1155px;height:1px;background:#fff;"></div>
<div style="left:229px;top:139px;width:585px;height:405px;box-sizing:border-box;border:1px solid #4f5358;border-radius:7px 7px 0 0;background:#d6e3f1;"></div>
<div style="left:230px;top:140px;width:583px;height:29px;border-radius:6px 6px 0 0;background:linear-gradient(#bfcfdf,#c7d6e5 40%,#d4e1ee 80%,#d9e5f2);"></div>
<div style="left:232px;top:140px;width:579px;height:1px;background:#f2f6fa;opacity:.85;"></div>
<svg style="left:239px;top:149px" width="16" height="16" viewBox="0 0 16 16" shape-rendering="crispEdges"><rect x="0" y="0" width="14" height="14" fill="#fff"/><rect x="0" y="4" width="14" height="10" fill="#2e2"/><rect x="0" y="6.500" width="14" height="2.500" fill="#9f9"/><rect x="0" y="11.500" width="14" height="2.500" fill="#9f9"/><path d="M4.500 0v14M9.500 0v14M0 4h14M0 6.500h14M0 9h14M0 11.500h14" stroke="#23c" stroke-width=".8"/><rect x="1" y="1" width="3" height="2.500" fill="#e22"/><rect x="5.500" y="1" width="3" height="2.500" fill="#e22"/><rect x="10.500" y="1" width="3" height="2.500" fill="#e22"/><path d="M14.500 1v14.200M1 14.500h14" stroke="#000" stroke-width="1.400"/></svg>
<div style="left:259px;top:152.0px;font:12px/13.40px 'Liberation Sans',sans-serif;color:#2b3038;white-space:pre;letter-spacing:-0.29px;">United States Cities Database</div>
<div style="left:708px;top:150px;width:30px;height:16px;box-sizing:border-box;border:1px solid #8a9cb8;border-radius:3px;background:linear-gradient(#d9e4f0,#c5d3e3);"></div>
<div style="left:718.0px;top:159.0px;width:10px;height:4px;box-sizing:border-box;border:1px solid #555c66;border-radius:1px;background:#eef1f4;"></div>
<div style="left:741px;top:150px;width:30px;height:16px;box-sizing:border-box;border:1px solid #8a9cb8;border-radius:3px;background:linear-gradient(#d9e4f0,#c5d3e3);"></div>
<div style="left:751.0px;top:154.0px;width:10px;height:9px;box-sizing:border-box;border:1px solid #555c66;border-radius:1px;background:#eef1f4;"></div>
<div style="left:754.0px;top:157.0px;width:4px;height:3px;box-sizing:border-box;border:1px solid #555c66;background:#cbd6e2;"></div>
<div style="left:774px;top:150px;width:30px;height:16px;box-sizing:border-box;border:1px solid #8a9cb8;border-radius:3px;background:linear-gradient(#d9e4f0,#c5d3e3);"></div>
<svg style="left:783.0px;top:153.0px;" width="12" height="10" viewBox="0 0 12 10"><path d="M1.5 1.5h3l1.5 2 1.5-2h3l-3 3.5 3 3.5h-3l-1.5-2-1.5 2h-3l3-3.5z" fill="#eef1f4" stroke="#555c66" stroke-width="1" stroke-linejoin="round"/></svg>
<div style="left:237px;top:169px;width:569px;height:367px;box-sizing:border-box;background:#fff;border:1px solid;border-color:#6b6b6b #f6f6f6 #f6f6f6 #6b6b6b;"></div>
<div style="left:238px;top:171px;width:566px;height:365px;background:#fff;"></div>
<div style="left:238px;top:171px;width:542px;height:24px;background:#e2e2e6;"></div>
<div style="left:238px;top:171px;width:87px;height:349px;background:#e2e2e6;"></div>
<div style="left:325px;top:195px;width:455px;height:112px;background:#fafac8;"></div>
<div style="left:325px;top:259px;width:455px;height:16px;background:#f7f7b4;"></div>
<div style="left:368.5px;top:175.5px;font:12px/13.40px 'Liberation Sans',sans-serif;color:#111;white-space:pre;">A(Y)</div>
<div style="left:462.0px;top:175.5px;font:12px/13.40px 'Liberation Sans',sans-serif;color:#111;white-space:pre;">B(Y)</div>
<div style="left:532.7px;top:175.5px;font:12px/13.40px 'Liberation Sans',sans-serif;color:#111;white-space:pre;">C(X)</div>
<div style="left:599.7px;top:175.5px;font:12px/13.40px 'Liberation Sans',sans-serif;color:#111;white-space:pre;">D(Y)</div>
<div style="left:667.5px;top:175.5px;font:12px/13.40px 'Liberation Sans',sans-serif;color:#111;white-space:pre;">E(Y)</div>
<div style="left:734.8px;top:175.5px;font:12px/13.40px 'Liberation Sans',sans-serif;color:#111;white-space:pre;">F(Y)</div>
<div style="right:1256px;top:197.0px;font:12px/13.40px 'Liberation Sans',sans-serif;color:#111;white-space:pre;">Long Name</div>
<div style="right:1256px;top:229.0px;font:12px/13.40px 'Liberation Sans',sans-serif;color:#111;white-space:pre;">Units</div>
<div style="right:1256px;top:245.0px;font:12px/13.40px 'Liberation Sans',sans-serif;color:#111;white-space:pre;">Comments</div>
<div style="right:1256px;top:261.0px;font:12px/13.40px 'Liberation Sans',sans-serif;color:#111;white-space:pre;">F(x)=</div>
<div style="right:1256px;top:277.0px;font:12px/13.40px 'Liberation Sans',sans-serif;color:#111;white-space:pre;">Sparklines</div>
<div style="left:370.2px;top:204.0px;font:12px/13.40px 'Liberation Sans',sans-serif;color:#111;white-space:pre;">City</div>
<div style="left:460.0px;top:204.0px;font:12px/13.40px 'Liberation Sans',sans-serif;color:#111;white-space:pre;">State</div>
<div style="left:517.0px;top:204.0px;font:12px/13.40px 'Liberation Sans',sans-serif;color:#111;white-space:pre;">Longtitude</div>
<div style="left:590.7px;top:204.0px;font:12px/13.40px 'Liberation Sans',sans-serif;color:#111;white-space:pre;">Latitude</div>
<div style="left:659.5px;top:204.0px;font:12px/13.40px 'Liberation Sans',sans-serif;color:#111;white-space:pre;">Density</div>
<div style="left:718.1px;top:204.0px;font:12px/13.40px 'Liberation Sans',sans-serif;color:#111;white-space:pre;">Population</div>
<div style="left:667px;top:229.0px;font:12px/13.40px 'Liberation Sans',sans-serif;color:#000;white-space:pre;">p/km<span style="font-size:8px;position:relative;top:-4px">2</span></div>
<div style="right:1256px;top:309.0px;font:12px/13.40px 'Liberation Sans',sans-serif;color:#000;white-space:pre;">24667</div>
<div style="left:328px;top:309.0px;font:12px/13.40px 'Liberation Sans',sans-serif;color:#000;white-space:pre;">Lineville</div>
<div style="left:439px;top:309.0px;font:12px/13.40px 'Liberation Sans',sans-serif;color:#000;white-space:pre;">Iowa</div>
<div style="right:1003px;top:309.0px;font:12px/13.40px 'Liberation Sans',sans-serif;color:#000;white-space:pre;">-93.5232</div>
<div style="right:935px;top:309.0px;font:12px/13.40px 'Liberation Sans',sans-serif;color:#000;white-space:pre;">40.587</div>
<div style="right:868px;top:309.0px;font:12px/13.40px 'Liberation Sans',sans-serif;color:#000;white-space:pre;">94</div>
<div style="right:801px;top:309.0px;font:12px/13.40px 'Liberation Sans',sans-serif;color:#000;white-space:pre;">219</div>
<div style="right:1256px;top:325.0px;font:12px/13.40px 'Liberation Sans',sans-serif;color:#000;white-space:pre;">24668</div>
<div style="left:328px;top:325.0px;font:12px/13.40px 'Liberation Sans',sans-serif;color:#000;white-space:pre;">Marysville</div>
<div style="left:439px;top:325.0px;font:12px/13.40px 'Liberation Sans',sans-serif;color:#000;white-space:pre;">Iowa</div>
<div style="right:1003px;top:325.0px;font:12px/13.40px 'Liberation Sans',sans-serif;color:#000;white-space:pre;">-92.9537</div>
<div style="right:935px;top:325.0px;font:12px/13.40px 'Liberation Sans',sans-serif;color:#000;white-space:pre;">41.1827</div>
<div style="right:868px;top:325.0px;font:12px/13.40px 'Liberation Sans',sans-serif;color:#000;white-space:pre;">70</div>
<div style="right:801px;top:325.0px;font:12px/13.40px 'Liberation Sans',sans-serif;color:#000;white-space:pre;">67</div>
<div style="right:1256px;top:341.0px;font:12px/13.40px 'Liberation Sans',sans-serif;color:#000;white-space:pre;">24669</div>
<div style="left:328px;top:341.0px;font:12px/13.40px 'Liberation Sans',sans-serif;color:#000;white-space:pre;">Montezuma</div>
<div style="left:439px;top:341.0px;font:12px/13.40px 'Liberation Sans',sans-serif;color:#000;white-space:pre;">Iowa</div>
<div style="right:1003px;top:341.0px;font:12px/13.40px 'Liberation Sans',sans-serif;color:#000;white-space:pre;">-92.5274</div>
<div style="right:935px;top:341.0px;font:12px/13.40px 'Liberation Sans',sans-serif;color:#000;white-space:pre;">41.5833</div>
<div style="right:868px;top:341.0px;font:12px/13.40px 'Liberation Sans',sans-serif;color:#000;white-space:pre;">219</div>
<div style="right:801px;top:341.0px;font:12px/13.40px 'Liberation Sans',sans-serif;color:#000;white-space:pre;">1409</div>
<div style="right:1256px;top:357.0px;font:12px/13.40px 'Liberation Sans',sans-serif;color:#000;white-space:pre;">24670</div>
<div style="left:328px;top:357.0px;font:12px/13.40px 'Liberation Sans',sans-serif;color:#000;white-space:pre;">Bertram</div>
<div style="left:439px;top:357.0px;font:12px/13.40px 'Liberation Sans',sans-serif;color:#000;white-space:pre;">Iowa</div>
<div style="right:1003px;top:357.0px;font:12px/13.40px 'Liberation Sans',sans-serif;color:#000;white-space:pre;">-91.5376</div>
<div style="right:935px;top:357.0px;font:12px/13.40px 'Liberation Sans',sans-serif;color:#000;white-space:pre;">41.9512</div>
<div style="right:868px;top:357.0px;font:12px/13.40px 'Liberation Sans',sans-serif;color:#000;white-space:pre;">67</div>
<div style="right:801px;top:357.0px;font:12px/13.40px 'Liberation Sans',sans-serif;color:#000;white-space:pre;">293</div>
<svg style="left:238px;top:171px;" width="543" height="350" viewBox="0 0 543 350"><rect x="86" y="0" width="1" height="200" fill="#c6c6c6"/><rect x="197" y="0" width="1" height="200" fill="#c6c6c6"/><rect x="273" y="0" width="1" height="200" fill="#c6c6c6"/><rect x="339" y="0" width="1" height="200" fill="#c6c6c6"/><rect x="407" y="0" width="1" height="200" fill="#c6c6c6"/><rect x="474" y="0" width="1" height="200" fill="#c6c6c6"/><rect x="541" y="0" width="1" height="200" fill="#c6c6c6"/><rect x="0" y="23" width="542" height="1" fill="#c6c6c6"/><rect x="0" y="55" width="542" height="1" fill="#c6c6c6"/><rect x="0" y="71" width="542" height="1" fill="#c6c6c6"/><rect x="0" y="87" width="542" height="1" fill="#c6c6c6"/><rect x="0" y="103" width="542" height="1" fill="#c6c6c6"/><rect x="0" y="135" width="542" height="1" fill="#c6c6c6"/><rect x="0" y="151" width="542" height="1" fill="#c6c6c6"/><rect x="0" y="167" width="542" height="1" fill="#c6c6c6"/><rect x="0" y="183" width="542" height="1" fill="#c6c6c6"/><rect x="0" y="199" width="542" height="1" fill="#c6c6c6"/><rect x="86" y="0" width="1" height="24" fill="#222"/><rect x="197" y="0" width="1" height="24" fill="#222"/><rect x="273" y="0" width="1" height="24" fill="#222"/><rect x="339" y="0" width="1" height="24" fill="#222"/><rect x="407" y="0" width="1" height="24" fill="#222"/><rect x="474" y="0" width="1" height="24" fill="#222"/><rect x="541" y="0" width="1" height="24" fill="#222"/><rect x="0" y="23" width="542" height="1" fill="#222"/><rect x="86" y="0" width="1" height="349" fill="#222"/><rect x="0" y="23" width="87" height="1" fill="#222"/><rect x="0" y="55" width="87" height="1" fill="#222"/><rect x="0" y="71" width="87" height="1" fill="#222"/><rect x="0" y="87" width="87" height="1" fill="#222"/><rect x="0" y="103" width="87" height="1" fill="#222"/><rect x="0" y="135" width="87" height="1" fill="#222"/><rect x="0" y="151" width="87" height="1" fill="#222"/><rect x="0" y="167" width="87" height="1" fill="#222"/><rect x="0" y="183" width="87" height="1" fill="#222"/><rect x="0" y="199" width="87" height="1" fill="#222"/><rect x="0" y="215" width="87" height="1" fill="#222"/><rect x="0" y="231" width="87" height="1" fill="#222"/><rect x="0" y="247" width="87" height="1" fill="#222"/><rect x="0" y="263" width="87" height="1" fill="#222"/><rect x="0" y="279" width="87" height="1" fill="#222"/><rect x="0" y="295" width="87" height="1" fill="#222"/><rect x="0" y="311" width="87" height="1" fill="#222"/><rect x="0" y="327" width="87" height="1" fill="#222"/><rect x="0" y="343" width="87" height="1" fill="#222"/><rect x="0" y="348" width="87" height="1" fill="#222"/><rect x="0" y="0" width="542" height="1" fill="#222"/><rect x="0" y="0" width="1" height="349" fill="#222"/></svg>
<svg style="left:0;top:0" width="1576" height="925"><path d="M516 297L516 296.2L517 297.1L518 296.6L519 297.3L520 297.4L521 295.7L522 295.5L523 298.0L524 296.3L525 296.2L526 298.5L527 296.9L528 298.0L529 296.9L530 297.4L531 296.0L532 297.4L533 298.1L534 297.1L535 297.7L536 297.5L537 295.7L538 297.8L539 297.3L540 296.4L541 295.6L542 298.1L543 296.9L544 297.7L545 298.1L546 297.6L547 298.3L548 296.7L549 297.9L550 296.8L551 298.3L552 298.1L553 295.8L554 295.9L555 296.2L556 298.4L557 296.8L558 297.4L559 296.4L560 297.0L561 296.7L562 296.6L563 297.3L564 297.3L565 298.2L566 297.5L567 298.3L568 298.1L569 298.5L570 297.5L571 296.0L572 298.1L573 298.4L574 298.2L575 297.2M546 277v25" stroke="#000" fill="none" stroke-width="1"/><path d="M582 290L582 295.1L583 290.1L584 296.3L585 293.7L586 290.8L587 288.6L588 296.5L589 297.9L590 288.9L591 296.0L592 292.1L593 289.5L594 290.9L595 295.7L596 296.7L597 288.4L598 294.1L599 288.4L600 295.2L601 291.3L602 296.8L603 297.8L604 293.1L605 298.0L606 291.1L607 288.8L608 294.0L609 288.3L610 290.0L611 292.1L612 294.1L613 289.6L614 288.4L615 296.7L616 291.1L617 297.6L618 297.0L619 291.8L620 292.6L621 293.2L622 294.4L623 294.0L624 293.6L625 294.2L626 297.4L627 293.1L628 292.3L629 295.2L630 290.4L631 291.0L632 297.8L633 293.2L634 293.5L635 288.1L636 292.2L637 293.8L638 288.2L639 294.2L640 294.3L641 288.6M610 278v24" stroke="#000" fill="none" stroke-width="1"/><path d="M650 304v-6M651 304v-3M652 304v-6M653 304v-6M654 304v-12M655 304v-5M656 304v-3M657 304v-2M658 304v-12M659 304v-22M660 304v-2M661 304v-2M662 304v-6M663 304v-5M664 304v-3M665 304v-5M666 304v-12M667 304v-12M668 304v-6M669 304v-3M670 304v-6M671 304v-3M672 304v-22M673 304v-6M674 304v-6M675 304v-12M676 304v-5M677 304v-5M678 304v-8M679 304v-3M680 304v-2M681 304v-12M682 304v-3M683 304v-5M684 304v-2M685 304v-4M686 304v-5M687 304v-4M688 304v-6M689 304v-3M690 304v-8M691 304v-3M692 304v-3M693 304v-12M694 304v-6M695 304v-6M696 304v-4M697 304v-3M698 304v-3M699 304v-3M700 304v-6M701 304v-4M702 304v-12M703 304v-3M704 304v-5M705 304v-4M706 304v-3M707 304v-2M708 304v-2M709 304v-4" stroke="#000" fill="none" stroke-width="1"/><path d="M717 304h60M717 304v-3M719 304v-5M721 304v-8M723 304v-3M725 304v-3M727 304v-3M729 304v-5M731 304v-2M733 304v-8M735 304v-8M737 304v-24M739 304v-10M741 304v-3M743 304v-24M745 304v-2M747 304v-8M749 304v-2M751 304v-2M753 304v-2M755 304v-2M757 304v-5M759 304v-6M761 304v-2M763 304v-10M765 304v-2M767 304v-6M769 304v-2M771 304v-10M773 304v-8M775 304v-3" stroke="#000" fill="none" stroke-width="1"/><rect x="515" y="297" width="2" height="2" fill="#e11"/><rect x="582" y="288" width="2" height="2" fill="#e11"/></svg>
<div style="left:783px;top:171px;width:21px;height:346px;background:#f0f0f0;"></div>
<svg style="left:792px;top:178px;" width="8" height="5" viewBox="0 0 8 5"><path d="M0 5l4-5 4 5z" fill="#444"/></svg>
<svg style="left:792px;top:502px;" width="8" height="5" viewBox="0 0 8 5"><path d="M0 0l4 5 4-5z" fill="#444"/></svg>
<div style="left:788px;top:378px;width:16px;height:14px;box-sizing:border-box;border:1px solid #979797;border-radius:2px;background:linear-gradient(90deg,#f3f3f3,#e6e6e6 45%,#d3d3d3 50%,#cfcfcf);"></div>
<div style="left:783px;top:511px;width:21px;height:2px;background:#444;"></div>
<div style="left:787px;top:517px;width:17px;height:18px;box-sizing:border-box;border:1px solid #444;background:#fff;"></div>
<div style="left:238px;top:520px;width:545px;height:15px;background:#fff;border:1px solid #444;box-sizing:border-box;"></div>
<div style="left:896px;top:139px;width:391px;height:421px;box-sizing:border-box;border:1px solid #4f5358;border-radius:7px 7px 0 0;background:#d6e3f1;"></div>
<div style="left:897px;top:140px;width:389px;height:29px;border-radius:6px 6px 0 0;background:linear-gradient(#bfcfdf,#c7d6e5 40%,#d4e1ee 80%,#d9e5f2);"></div>
<div style="left:899px;top:140px;width:385px;height:1px;background:#f2f6fa;opacity:.85;"></div>
<svg style="left:906px;top:149px" width="16" height="16" viewBox="0 0 16 16" shape-rendering="crispEdges"><rect x="0" y="0" width="14" height="14" fill="#fff"/><rect x="0" y="4" width="14" height="10" fill="#2e2"/><rect x="0" y="6.500" width="14" height="2.500" fill="#9f9"/><rect x="0" y="11.500" width="14" height="2.500" fill="#9f9"/><path d="M4.500 0v14M9.500 0v14M0 4h14M0 6.500h14M0 9h14M0 11.500h14" stroke="#23c" stroke-width=".8"/><rect x="1" y="1" width="3" height="2.500" fill="#e22"/><rect x="5.500" y="1" width="3" height="2.500" fill="#e22"/><rect x="10.500" y="1" width="3" height="2.500" fill="#e22"/><path d="M14.500 1v14.200M1 14.500h14" stroke="#000" stroke-width="1.400"/></svg>
<div style="left:926px;top:152.0px;font:12px/13.40px 'Liberation Sans',sans-serif;color:#2b3038;white-space:pre;letter-spacing:0.09px;">Density Plot</div>
<div style="left:1181px;top:150px;width:30px;height:16px;box-sizing:border-box;border:1px solid #8a9cb8;border-radius:3px;background:linear-gradient(#d9e4f0,#c5d3e3);"></div>
<div style="left:1191.0px;top:159.0px;width:10px;height:4px;box-sizing:border-box;border:1px solid #555c66;border-radius:1px;background:#eef1f4;"></div>
<div style="left:1214px;top:150px;width:30px;height:16px;box-sizing:border-box;border:1px solid #8a9cb8;border-radius:3px;background:linear-gradient(#d9e4f0,#c5d3e3);"></div>
<div style="left:1224.0px;top:154.0px;width:10px;height:9px;box-sizing:border-box;border:1px solid #555c66;border-radius:1px;background:#eef1f4;"></div>
<div style="left:1227.0px;top:157.0px;width:4px;height:3px;box-sizing:border-box;border:1px solid #555c66;background:#cbd6e2;"></div>
<div style="left:1247px;top:150px;width:30px;height:16px;box-sizing:border-box;border:1px solid #8a9cb8;border-radius:3px;background:linear-gradient(#d9e4f0,#c5d3e3);"></div>
<svg style="left:1256.0px;top:153.0px;" width="12" height="10" viewBox="0 0 12 10"><path d="M1.5 1.5h3l1.5 2 1.5-2h3l-3 3.5 3 3.5h-3l-1.5-2-1.5 2h-3l3-3.5z" fill="#eef1f4" stroke="#555c66" stroke-width="1" stroke-linejoin="round"/></svg>
<div style="left:904px;top:169px;width:375px;height:383px;box-sizing:border-box;background:#fff;border:1px solid;border-color:#6b6b6b #f6f6f6 #f6f6f6 #6b6b6b;"></div>
<div style="left:905px;top:171px;width:372px;height:380px;background:#e1e1e5;"></div>
<div style="left:992px;top:195px;width:195px;height:64px;background:#fafac8;"></div>
<div style="left:992px;top:243px;width:195px;height:16px;background:#f7f7b4;"></div>
<div style="left:992px;top:259px;width:195px;height:300px;background:#fff;"></div>
<div style="left:1027.0px;top:175.5px;font:12px/13.40px 'Liberation Sans',sans-serif;color:#111;white-space:pre;">A(X)</div>
<div style="left:1124.5px;top:175.5px;font:12px/13.40px 'Liberation Sans',sans-serif;color:#111;white-space:pre;">B(Y)</div>
<div style="right:589px;top:197.0px;font:12px/13.40px 'Liberation Sans',sans-serif;color:#111;white-space:pre;">Long Name</div>
<div style="right:589px;top:213.0px;font:12px/13.40px 'Liberation Sans',sans-serif;color:#111;white-space:pre;">Units</div>
<div style="right:589px;top:229.0px;font:12px/13.40px 'Liberation Sans',sans-serif;color:#111;white-space:pre;">Comments</div>
<div style="right:589px;top:245.0px;font:12px/13.40px 'Liberation Sans',sans-serif;color:#111;white-space:pre;">F(x)=</div>
<div style="left:1023.0px;top:197.0px;font:12px/13.40px 'Liberation Sans',sans-serif;color:#000;white-space:pre;">POP3</div>
<div style="left:1109.8px;top:197.0px;font:12px/13.40px 'Liberation Sans',sans-serif;color:#000;white-space:pre;">Estimated</div>
<div style="right:589px;top:261.0px;font:12px/13.40px 'Liberation Sans',sans-serif;color:#000;white-space:pre;">1</div>
<div style="right:495px;top:261.0px;font:12px/13.40px 'Liberation Sans',sans-serif;color:#000;white-space:pre;">-4.655</div>
<div style="right:394px;top:261.0px;font:12px/13.40px 'Liberation Sans',sans-serif;color:#000;white-space:pre;">-7.71</div>
<div style="right:589px;top:277.0px;font:12px/13.40px 'Liberation Sans',sans-serif;color:#000;white-space:pre;">2</div>
<div style="right:495px;top:277.0px;font:12px/13.40px 'Liberation Sans',sans-serif;color:#000;white-space:pre;">-4.455</div>
<div style="right:394px;top:277.0px;font:12px/13.40px 'Liberation Sans',sans-serif;color:#000;white-space:pre;">-8.064</div>
<div style="right:589px;top:293.0px;font:12px/13.40px 'Liberation Sans',sans-serif;color:#000;white-space:pre;">3</div>
<div style="right:495px;top:293.0px;font:12px/13.40px 'Liberation Sans',sans-serif;color:#000;white-space:pre;">-4.438</div>
<div style="right:394px;top:293.0px;font:12px/13.40px 'Liberation Sans',sans-serif;color:#000;white-space:pre;">-10.034</div>
<div style="right:589px;top:309.0px;font:12px/13.40px 'Liberation Sans',sans-serif;color:#000;white-space:pre;">4</div>
<div style="right:495px;top:309.0px;font:12px/13.40px 'Liberation Sans',sans-serif;color:#000;white-space:pre;">-4.296</div>
<div style="right:394px;top:309.0px;font:12px/13.40px 'Liberation Sans',sans-serif;color:#000;white-space:pre;">-7.09</div>
<div style="right:589px;top:325.0px;font:12px/13.40px 'Liberation Sans',sans-serif;color:#000;white-space:pre;">5</div>
<div style="right:495px;top:325.0px;font:12px/13.40px 'Liberation Sans',sans-serif;color:#000;white-space:pre;">-4.017</div>
<div style="right:394px;top:325.0px;font:12px/13.40px 'Liberation Sans',sans-serif;color:#000;white-space:pre;">-6.117</div>
<div style="right:589px;top:341.0px;font:12px/13.40px 'Liberation Sans',sans-serif;color:#000;white-space:pre;">6</div>
<div style="right:495px;top:341.0px;font:12px/13.40px 'Liberation Sans',sans-serif;color:#000;white-space:pre;">-3.918</div>
<div style="right:394px;top:341.0px;font:12px/13.40px 'Liberation Sans',sans-serif;color:#000;white-space:pre;">-7.323</div>
<svg style="left:905px;top:171px;" width="283" height="381" viewBox="0 0 283 381"><rect x="86" y="0" width="1" height="380" fill="#c6c6c6"/><rect x="180" y="0" width="1" height="380" fill="#c6c6c6"/><rect x="281" y="0" width="1" height="380" fill="#c6c6c6"/><rect x="0" y="23" width="282" height="1" fill="#c6c6c6"/><rect x="0" y="39" width="282" height="1" fill="#c6c6c6"/><rect x="0" y="55" width="282" height="1" fill="#c6c6c6"/><rect x="0" y="71" width="282" height="1" fill="#c6c6c6"/><rect x="0" y="87" width="282" height="1" fill="#c6c6c6"/><rect x="0" y="103" width="282" height="1" fill="#c6c6c6"/><rect x="0" y="119" width="282" height="1" fill="#c6c6c6"/><rect x="0" y="135" width="282" height="1" fill="#c6c6c6"/><rect x="0" y="151" width="282" height="1" fill="#c6c6c6"/><rect x="0" y="167" width="282" height="1" fill="#c6c6c6"/><rect x="0" y="183" width="282" height="1" fill="#c6c6c6"/><rect x="0" y="199" width="282" height="1" fill="#c6c6c6"/><rect x="0" y="215" width="282" height="1" fill="#c6c6c6"/><rect x="0" y="231" width="282" height="1" fill="#c6c6c6"/><rect x="0" y="247" width="282" height="1" fill="#c6c6c6"/><rect x="0" y="263" width="282" height="1" fill="#c6c6c6"/><rect x="0" y="279" width="282" height="1" fill="#c6c6c6"/><rect x="0" y="295" width="282" height="1" fill="#c6c6c6"/><rect x="0" y="311" width="282" height="1" fill="#c6c6c6"/><rect x="0" y="327" width="282" height="1" fill="#c6c6c6"/><rect x="0" y="343" width="282" height="1" fill="#c6c6c6"/><rect x="0" y="359" width="282" height="1" fill="#c6c6c6"/><rect x="0" y="375" width="282" height="1" fill="#c6c6c6"/><rect x="86" y="0" width="1" height="24" fill="#222"/><rect x="180" y="0" width="1" height="24" fill="#222"/><rect x="281" y="0" width="1" height="24" fill="#222"/><rect x="0" y="23" width="282" height="1" fill="#222"/><rect x="86" y="0" width="1" height="380" fill="#222"/><rect x="0" y="23" width="87" height="1" fill="#222"/><rect x="0" y="39" width="87" height="1" fill="#222"/><rect x="0" y="55" width="87" height="1" fill="#222"/><rect x="0" y="71" width="87" height="1" fill="#222"/><rect x="0" y="87" width="87" height="1" fill="#222"/><rect x="0" y="103" width="87" height="1" fill="#222"/><rect x="0" y="119" width="87" height="1" fill="#222"/><rect x="0" y="135" width="87" height="1" fill="#222"/><rect x="0" y="151" width="87" height="1" fill="#222"/><rect x="0" y="167" width="87" height="1" fill="#222"/><rect x="0" y="183" width="87" height="1" fill="#222"/><rect x="0" y="199" width="87" height="1" fill="#222"/><rect x="0" y="215" width="87" height="1" fill="#222"/><rect x="0" y="231" width="87" height="1" fill="#222"/><rect x="0" y="247" width="87" height="1" fill="#222"/><rect x="0" y="263" width="87" height="1" fill="#222"/><rect x="0" y="279" width="87" height="1" fill="#222"/><rect x="0" y="295" width="87" height="1" fill="#222"/><rect x="0" y="311" width="87" height="1" fill="#222"/><rect x="0" y="327" width="87" height="1" fill="#222"/><rect x="0" y="343" width="87" height="1" fill="#222"/><rect x="0" y="359" width="87" height="1" fill="#222"/><rect x="0" y="375" width="87" height="1" fill="#222"/><rect x="0" y="0" width="282" height="1" fill="#222"/><rect x="0" y="0" width="1" height="380" fill="#222"/></svg>
<div style="left:1260px;top:171px;width:17px;height:380px;background:#f0f0f0;"></div>
<svg style="left:1265px;top:178px;" width="8" height="5" viewBox="0 0 8 5"><path d="M0 5l4-5 4 5z" fill="#444"/></svg>
<div style="left:1261px;top:189px;width:16px;height:15px;box-sizing:border-box;border:1px solid #979797;border-radius:2px;background:linear-gradient(90deg,#f3f3f3,#e6e6e6 45%,#d3d3d3 50%,#cfcfcf);"></div>
<div style="left:245px;top:370px;width:539px;height:459px;box-sizing:border-box;border:1px solid #4f5358;border-radius:7px 7px 0 0;background:#d6e3f1;"></div>
<div style="left:246px;top:371px;width:537px;height:29px;border-radius:6px 6px 0 0;background:linear-gradient(#bfcfdf,#c7d6e5 40%,#d4e1ee 80%,#d9e5f2);"></div>
<div style="left:248px;top:371px;width:533px;height:1px;background:#f2f6fa;opacity:.85;"></div>
<svg style="left:255px;top:380px" width="16" height="16" viewBox="0 0 16 16" shape-rendering="crispEdges"><rect x="0" y="0" width="14" height="14" fill="#fff"/><path d="M.5 .5h13v13h-13z" stroke="#f55" fill="none" stroke-dasharray="1 1"/><rect x="2" y="2" width="10" height="4" fill="#0ee"/><rect x="2" y="7" width="10" height="4" fill="#0ee"/><path d="M3 4.500l2-1 2 .5 2-1 2 1" stroke="#000" fill="none" stroke-width=".8"/><path d="M2 6.500h10" stroke="#e11" stroke-dasharray="1 1"/><path d="M3 10c2-2 5-2 8-1.500" stroke="#c3c" fill="none"/><rect x="2" y="11" width="2" height="2" fill="#e11"/><path d="M14.500 1v14.200M1 14.500h14" stroke="#000" stroke-width="1.400"/></svg>
<div style="left:275px;top:383.0px;font:12px/13.40px 'Liberation Sans',sans-serif;color:#2b3038;white-space:pre;letter-spacing:-0.03px;">Population Density of Cities in Continental United States</div>
<div style="left:678px;top:381px;width:30px;height:16px;box-sizing:border-box;border:1px solid #8a9cb8;border-radius:3px;background:linear-gradient(#d9e4f0,#c5d3e3);"></div>
<div style="left:688.0px;top:390.0px;width:10px;height:4px;box-sizing:border-box;border:1px solid #555c66;border-radius:1px;background:#eef1f4;"></div>
<div style="left:711px;top:381px;width:30px;height:16px;box-sizing:border-box;border:1px solid #8a9cb8;border-radius:3px;background:linear-gradient(#d9e4f0,#c5d3e3);"></div>
<div style="left:721.0px;top:385.0px;width:10px;height:9px;box-sizing:border-box;border:1px solid #555c66;border-radius:1px;background:#eef1f4;"></div>
<div style="left:724.0px;top:388.0px;width:4px;height:3px;box-sizing:border-box;border:1px solid #555c66;background:#cbd6e2;"></div>
<div style="left:744px;top:381px;width:30px;height:16px;box-sizing:border-box;border:1px solid #8a9cb8;border-radius:3px;background:linear-gradient(#d9e4f0,#c5d3e3);"></div>
<svg style="left:753.0px;top:384.0px;" width="12" height="10" viewBox="0 0 12 10"><path d="M1.5 1.5h3l1.5 2 1.5-2h3l-3 3.5 3 3.5h-3l-1.5-2-1.5 2h-3l3-3.5z" fill="#eef1f4" stroke="#555c66" stroke-width="1" stroke-linejoin="round"/></svg>
<div style="left:253px;top:400px;width:523px;height:421px;box-sizing:border-box;background:#fff;border:1px solid;border-color:#6b6b6b #f6f6f6 #f6f6f6 #6b6b6b;"></div>
<div style="left:257px;top:404px;width:18px;height:18px;background:#c6c6c6;border:1px solid #8c8c8c;border-left-color:#eee;border-top-color:#eee;box-sizing:border-box;"></div>
<div style="left:262px;top:406.6px;font:bold 13px/14.52px 'Liberation Sans',sans-serif;color:#000;white-space:pre;">1</div>
<div style="left:288px;top:434.1px;font:18px/20.11px 'Liberation Sans',sans-serif;color:#404040;white-space:pre;letter-spacing:0.01px;">Population Density of Cities in Continental United States</div>
<svg style="left:300px;top:480px;" width="450" height="270" viewBox="0 0 450 270"><defs><pattern id="pe" width="56" height="56" patternUnits="userSpaceOnUse"><rect width="56" height="56" fill="#facd94"/><path d="M0 0.5h2M3 0.5h2M7 0.5h1M22 0.5h1M27 0.5h1M30 0.5h1M32 0.5h1M34 0.5h1M53 0.5h1M14 1.5h1M45 1.5h1M47 1.5h1M20 2.5h1M48 2.5h1M53 2.5h1M30 3.5h1M33 3.5h1M1 4.5h1M8 4.5h1M13 4.5h1M17 4.5h1M28 4.5h1M42 4.5h1M45 4.5h1M51 4.5h1M5 5.5h1M13 5.5h1M24 5.5h1M32 5.5h1M34 5.5h1M44 5.5h1M49 5.5h1M53 5.5h1M1 6.5h1M3 6.5h1M11 6.5h1M14 6.5h2M19 6.5h1M23 6.5h1M26 6.5h1M31 6.5h1M36 6.5h1M53 6.5h1M0 7.5h1M4 7.5h1M9 7.5h1M40 7.5h1M42 7.5h1M48 7.5h2M4 8.5h1M7 8.5h2M15 8.5h1M20 8.5h1M29 8.5h1M47 8.5h1M2 9.5h1M20 9.5h2M33 9.5h1M35 9.5h1M40 9.5h1M7 10.5h1M10 10.5h1M13 10.5h1M19 10.5h1M22 10.5h1M26 10.5h1M31 10.5h1M2 11.5h1M6 11.5h1M9 11.5h1M27 11.5h1M37 11.5h1M19 12.5h1M27 12.5h2M34 12.5h1M48 12.5h1M54 12.5h2M12 13.5h1M33 13.5h1M49 13.5h1M51 13.5h1M0 14.5h1M2 14.5h1M8 14.5h2M15 14.5h1M25 14.5h1M29 14.5h1M40 14.5h2M52 14.5h2M4 15.5h1M10 15.5h1M19 15.5h1M27 15.5h1M2 16.5h1M22 16.5h1M29 16.5h1M31 16.5h1M35 16.5h1M49 16.5h1M54 16.5h1M14 17.5h1M29 17.5h1M34 17.5h1M44 17.5h1M50 17.5h1M2 18.5h2M18 18.5h1M22 18.5h1M41 18.5h1M1 19.5h1M4 19.5h1M12 19.5h1M53 19.5h2M9 20.5h1M14 20.5h1M18 20.5h1M20 20.5h1M25 20.5h2M29 20.5h1M41 20.5h1M44 20.5h1M53 20.5h1M5 21.5h1M13 21.5h1M30 21.5h1M34 21.5h1M50 21.5h1M52 21.5h1M11 22.5h1M19 22.5h1M23 22.5h1M0 23.5h1M10 23.5h1M49 23.5h1M53 23.5h1M7 24.5h1M15 24.5h1M17 24.5h1M27 24.5h1M45 24.5h1M55 24.5h1M2 25.5h1M4 25.5h1M20 25.5h1M25 25.5h1M30 25.5h1M37 25.5h1M39 25.5h1M45 25.5h1M32 26.5h2M45 26.5h1M52 26.5h1M5 27.5h1M14 27.5h1M18 27.5h1M23 27.5h1M41 27.5h1M46 27.5h1M23 28.5h1M31 28.5h1M34 28.5h1M8 29.5h1M13 29.5h1M20 29.5h1M28 29.5h1M38 29.5h1M45 29.5h1M52 29.5h2M3 30.5h1M5 30.5h1M10 30.5h1M45 30.5h1M7 31.5h2M19 31.5h1M43 31.5h1M0 32.5h1M2 32.5h1M15 32.5h1M35 32.5h1M42 32.5h2M47 32.5h1M52 32.5h1M3 33.5h3M11 33.5h1M23 33.5h1M37 33.5h1M42 33.5h1M50 33.5h1M53 33.5h1M1 34.5h2M8 34.5h1M11 34.5h1M25 34.5h2M50 34.5h1M21 35.5h1M30 35.5h1M34 35.5h1M40 35.5h1M53 35.5h1M3 36.5h1M18 36.5h1M21 36.5h2M31 36.5h1M41 36.5h1M2 37.5h1M7 37.5h1M11 37.5h1M17 37.5h1M19 37.5h1M29 37.5h1M33 37.5h1M2 38.5h1M4 38.5h1M6 38.5h1M8 38.5h1M12 38.5h1M14 38.5h2M29 38.5h1M36 38.5h1M46 38.5h1M6 39.5h1M9 39.5h1M15 39.5h1M21 39.5h1M31 39.5h1M52 39.5h1M55 39.5h1M19 40.5h1M31 40.5h2M35 40.5h1M43 40.5h1M50 40.5h1M53 40.5h1M12 41.5h1M14 41.5h1M22 41.5h1M29 41.5h2M38 41.5h1M51 41.5h2M54 41.5h1M1 42.5h1M5 42.5h1M7 42.5h2M20 42.5h1M22 42.5h1M24 42.5h2M28 42.5h1M47 42.5h1M19 43.5h1M29 43.5h1M46 43.5h2M50 43.5h2M5 44.5h1M11 44.5h1M17 44.5h1M22 44.5h1M24 44.5h1M29 44.5h1M37 44.5h1M40 44.5h1M4 45.5h1M8 45.5h1M12 45.5h1M20 45.5h1M30 45.5h1M36 45.5h2M39 45.5h1M0 46.5h1M27 46.5h1M36 46.5h2M47 46.5h2M6 47.5h1M21 47.5h1M32 47.5h1M8 48.5h1M25 48.5h1M39 48.5h2M47 48.5h1M50 48.5h4M13 49.5h1M15 49.5h1M23 49.5h2M27 49.5h1M43 49.5h1M48 49.5h1M4 50.5h1M18 50.5h1M34 50.5h1M51 50.5h1M53 50.5h1M55 50.5h1M9 51.5h2M20 51.5h1M48 51.5h1M52 51.5h1M54 51.5h1M7 52.5h1M4 53.5h1M16 53.5h1M25 53.5h1M43 53.5h1M46 53.5h1M0 54.5h1M9 54.5h1M17 54.5h1M19 54.5h1M22 54.5h2M31 54.5h2M36 54.5h1M38 54.5h1M1 55.5h1M19 55.5h1M25 55.5h1M39 55.5h1M41 55.5h1M45 55.5h1M54 55.5h1" stroke="#f8803a" shape-rendering="crispEdges"/><path d="M5 0.5h1M8 0.5h1M18 0.5h2M31 0.5h1M1 1.5h1M19 1.5h1M31 1.5h1M41 1.5h1M43 1.5h1M48 1.5h1M5 2.5h1M14 2.5h1M22 2.5h1M32 2.5h1M37 2.5h1M39 2.5h1M47 2.5h1M11 3.5h2M14 3.5h2M17 3.5h1M23 3.5h1M29 3.5h1M34 3.5h1M43 3.5h1M54 3.5h1M12 4.5h1M23 4.5h1M34 4.5h1M36 4.5h2M52 4.5h1M6 5.5h1M9 5.5h1M14 5.5h1M18 5.5h1M0 6.5h1M12 6.5h1M16 6.5h1M22 6.5h1M39 6.5h1M49 6.5h1M7 7.5h2M11 7.5h1M50 7.5h1M10 8.5h1M26 8.5h1M28 8.5h1M50 8.5h2M0 9.5h2M5 9.5h1M10 9.5h1M23 9.5h1M25 9.5h1M28 9.5h1M36 9.5h1M41 9.5h1M44 9.5h2M16 10.5h1M18 10.5h1M28 10.5h1M39 10.5h1M43 10.5h3M0 11.5h1M7 11.5h1M17 11.5h1M24 11.5h1M36 11.5h1M55 11.5h1M17 12.5h1M21 12.5h1M29 12.5h1M31 12.5h1M41 12.5h1M44 12.5h1M11 13.5h1M29 13.5h1M34 13.5h1M42 13.5h1M12 14.5h1M19 14.5h1M26 14.5h1M43 14.5h1M13 15.5h1M18 15.5h1M24 15.5h1M37 15.5h1M49 15.5h1M3 16.5h1M15 16.5h1M19 16.5h1M25 16.5h1M40 16.5h1M44 16.5h1M55 16.5h1M0 17.5h1M5 17.5h1M11 17.5h1M20 17.5h1M25 17.5h1M32 17.5h1M36 17.5h1M38 17.5h1M43 17.5h1M46 17.5h1M0 18.5h1M11 18.5h1M14 18.5h1M36 18.5h1M52 18.5h1M17 19.5h1M43 19.5h1M49 19.5h1M0 20.5h1M21 20.5h1M23 20.5h1M34 20.5h1M43 20.5h1M46 20.5h1M48 20.5h1M4 21.5h1M12 21.5h1M15 21.5h1M1 22.5h1M4 22.5h1M9 22.5h1M6 23.5h1M29 23.5h2M42 23.5h1M5 24.5h1M16 24.5h1M23 24.5h1M28 24.5h1M31 24.5h1M34 24.5h2M3 25.5h1M5 25.5h2M19 25.5h1M21 25.5h1M0 26.5h1M3 26.5h1M12 26.5h1M18 26.5h1M40 26.5h1M0 27.5h1M2 27.5h1M24 27.5h2M6 28.5h1M10 28.5h1M13 28.5h1M0 29.5h1M2 29.5h1M4 29.5h1M7 29.5h1M9 29.5h1M18 29.5h2M22 29.5h1M24 29.5h2M41 29.5h1M1 30.5h1M24 30.5h1M29 30.5h1M38 30.5h1M40 30.5h1M49 30.5h1M3 31.5h1M13 31.5h1M23 31.5h1M42 31.5h1M55 31.5h1M5 32.5h1M11 32.5h1M17 32.5h1M27 32.5h2M49 32.5h1M13 33.5h1M28 33.5h1M38 33.5h1M41 33.5h1M16 34.5h1M19 34.5h1M22 34.5h2M45 34.5h1M49 34.5h1M52 34.5h1M0 35.5h1M26 35.5h1M47 35.5h1M52 35.5h1M55 35.5h1M2 36.5h1M10 36.5h1M17 36.5h1M30 36.5h1M42 36.5h1M45 36.5h1M16 37.5h1M20 37.5h1M34 37.5h1M40 37.5h1M44 37.5h1M53 37.5h1M17 38.5h1M30 38.5h1M32 38.5h2M47 38.5h1M5 39.5h1M19 39.5h1M50 39.5h1M33 40.5h1M46 40.5h1M51 40.5h1M13 41.5h1M20 41.5h1M23 41.5h1M27 41.5h1M44 41.5h1M3 42.5h2M9 42.5h1M50 42.5h1M53 42.5h1M8 43.5h1M16 43.5h1M18 43.5h1M26 43.5h1M33 43.5h1M41 43.5h1M55 43.5h1M7 44.5h1M18 44.5h1M35 44.5h1M50 44.5h1M53 44.5h1M55 44.5h1M13 45.5h1M32 45.5h1M50 45.5h1M53 45.5h1M8 46.5h1M15 46.5h1M19 46.5h1M23 46.5h1M26 46.5h1M35 46.5h1M39 46.5h1M46 46.5h1M50 46.5h1M9 47.5h1M36 47.5h2M41 47.5h1M9 48.5h1M14 48.5h1M27 48.5h1M35 48.5h1M44 48.5h2M5 49.5h1M34 49.5h1M36 49.5h1M40 49.5h2M50 49.5h2M54 49.5h1M6 50.5h1M24 50.5h2M28 50.5h1M48 50.5h1M6 51.5h1M12 51.5h1M22 51.5h1M37 51.5h1M45 51.5h1M51 51.5h1M0 52.5h1M5 52.5h1M31 52.5h1M34 52.5h1M38 52.5h1M42 52.5h1M46 52.5h1M49 52.5h1M12 53.5h1M31 53.5h1M37 53.5h1M50 53.5h1M2 54.5h1M10 54.5h1M16 54.5h1M21 54.5h1M26 54.5h1M48 54.5h1M10 55.5h1M18 55.5h1M24 55.5h1M29 55.5h1M33 55.5h1" stroke="#f4c75a" shape-rendering="crispEdges"/><path d="M6 0.5h1M10 0.5h1M12 0.5h1M15 0.5h1M20 0.5h2M23 0.5h1M26 0.5h1M43 0.5h1M50 0.5h1M0 1.5h1M4 1.5h1M8 1.5h1M10 1.5h2M13 1.5h1M18 1.5h1M20 1.5h1M32 1.5h1M39 1.5h2M50 1.5h2M55 1.5h1M7 2.5h2M16 2.5h1M18 2.5h1M26 2.5h1M29 2.5h2M33 2.5h1M40 2.5h3M46 2.5h1M52 2.5h1M16 3.5h1M26 3.5h1M28 3.5h1M37 3.5h1M41 3.5h1M0 4.5h1M7 4.5h1M18 4.5h2M21 4.5h1M26 4.5h2M29 4.5h1M32 4.5h2M43 4.5h2M47 4.5h1M1 5.5h1M4 5.5h1M30 5.5h1M35 5.5h1M37 5.5h1M39 5.5h1M42 5.5h2M51 5.5h1M17 6.5h1M25 6.5h1M32 6.5h1M41 6.5h1M43 6.5h1M50 6.5h1M52 6.5h1M5 7.5h1M23 7.5h1M27 7.5h1M31 7.5h1M34 7.5h1M39 7.5h1M44 7.5h4M51 7.5h2M1 8.5h2M11 8.5h1M14 8.5h1M19 8.5h1M21 8.5h1M45 8.5h1M48 8.5h1M9 9.5h1M14 9.5h1M17 9.5h1M27 9.5h1M30 9.5h1M32 9.5h1M34 9.5h1M37 9.5h1M49 9.5h1M51 9.5h2M1 10.5h1M4 10.5h1M17 10.5h1M21 10.5h1M23 10.5h1M36 10.5h1M47 10.5h1M52 10.5h2M1 11.5h1M3 11.5h2M14 11.5h2M32 11.5h1M34 11.5h2M41 11.5h1M44 11.5h1M49 11.5h1M53 11.5h1M22 12.5h1M26 12.5h1M33 12.5h1M36 12.5h2M40 12.5h1M42 12.5h1M17 13.5h1M21 13.5h1M26 13.5h1M28 13.5h1M31 13.5h2M36 13.5h3M44 13.5h1M46 13.5h1M4 14.5h1M14 14.5h1M20 14.5h2M30 14.5h1M32 14.5h1M36 14.5h1M39 14.5h1M49 14.5h1M54 14.5h1M2 15.5h1M8 15.5h1M14 15.5h1M20 15.5h1M41 15.5h3M46 15.5h1M50 15.5h1M52 15.5h2M55 15.5h1M9 16.5h1M16 16.5h1M20 16.5h1M26 16.5h1M32 16.5h1M42 16.5h1M50 16.5h1M52 16.5h1M6 17.5h1M13 17.5h1M15 17.5h3M27 17.5h1M30 17.5h1M33 17.5h1M39 17.5h1M41 17.5h1M7 18.5h1M15 18.5h2M20 18.5h1M27 18.5h1M38 18.5h1M40 18.5h1M43 18.5h1M47 18.5h1M53 18.5h2M13 19.5h1M20 19.5h2M27 19.5h1M31 19.5h1M36 19.5h1M50 19.5h1M55 19.5h1M4 20.5h1M10 20.5h1M13 20.5h1M19 20.5h1M31 20.5h1M33 20.5h1M45 20.5h1M50 20.5h3M2 21.5h1M8 21.5h1M10 21.5h1M16 21.5h1M18 21.5h1M20 21.5h1M24 21.5h1M29 21.5h1M33 21.5h1M36 21.5h1M39 21.5h1M43 21.5h2M2 22.5h1M5 22.5h1M18 22.5h1M20 22.5h1M31 22.5h1M35 22.5h2M43 22.5h1M49 22.5h1M52 22.5h1M1 23.5h1M4 23.5h2M7 23.5h1M11 23.5h1M16 23.5h1M27 23.5h2M43 23.5h1M46 23.5h1M51 23.5h1M54 23.5h1M1 24.5h1M4 24.5h1M9 24.5h1M12 24.5h1M14 24.5h1M20 24.5h1M26 24.5h1M43 24.5h2M49 24.5h1M54 24.5h1M18 25.5h1M29 25.5h1M31 25.5h4M36 25.5h1M40 25.5h1M43 25.5h1M6 26.5h1M10 26.5h2M15 26.5h1M22 26.5h1M24 26.5h2M29 26.5h1M31 26.5h1M47 26.5h3M53 26.5h1M55 26.5h1M1 27.5h1M8 27.5h2M12 27.5h2M22 27.5h1M33 27.5h5M42 27.5h1M45 27.5h1M55 27.5h1M5 28.5h1M18 28.5h1M25 28.5h3M30 28.5h1M40 28.5h1M47 28.5h1M52 28.5h1M55 28.5h1M10 29.5h1M21 29.5h1M27 29.5h1M36 29.5h1M47 29.5h1M2 30.5h1M13 30.5h1M15 30.5h2M20 30.5h2M26 30.5h1M35 30.5h1M42 30.5h2M46 30.5h2M2 31.5h1M25 31.5h1M35 31.5h1M44 31.5h1M46 31.5h1M54 31.5h1M14 32.5h1M22 32.5h1M25 32.5h2M34 32.5h1M36 32.5h1M40 32.5h1M44 32.5h1M48 32.5h1M50 32.5h2M1 33.5h1M7 33.5h1M9 33.5h1M17 33.5h2M22 33.5h1M24 33.5h2M30 33.5h1M32 33.5h1M34 33.5h1M54 33.5h1M0 34.5h1M5 34.5h1M12 34.5h1M15 34.5h1M28 34.5h2M38 34.5h1M46 34.5h1M48 34.5h1M53 34.5h1M1 35.5h1M7 35.5h1M14 35.5h1M17 35.5h2M22 35.5h2M32 35.5h1M35 35.5h1M44 35.5h1M46 35.5h1M50 35.5h1M12 36.5h1M25 36.5h1M28 36.5h1M33 36.5h1M37 36.5h1M43 36.5h1M1 37.5h1M6 37.5h1M13 37.5h1M24 37.5h1M38 37.5h1M41 37.5h1M43 37.5h1M45 37.5h1M49 37.5h1M51 37.5h2M3 38.5h1M5 38.5h1M13 38.5h1M18 38.5h1M28 38.5h1M35 38.5h1M38 38.5h2M42 38.5h2M50 38.5h2M2 39.5h1M12 39.5h2M24 39.5h1M32 39.5h1M43 39.5h1M54 39.5h1M1 40.5h1M3 40.5h1M10 40.5h1M14 40.5h1M21 40.5h1M24 40.5h2M27 40.5h1M29 40.5h2M37 40.5h1M39 40.5h1M44 40.5h1M1 41.5h1M4 41.5h3M9 41.5h1M15 41.5h2M18 41.5h1M37 41.5h1M41 41.5h1M45 41.5h1M48 41.5h1M0 42.5h1M6 42.5h1M13 42.5h1M41 42.5h1M46 42.5h1M54 42.5h1M0 43.5h1M4 43.5h1M9 43.5h1M11 43.5h1M22 43.5h2M32 43.5h1M48 43.5h1M2 44.5h2M13 44.5h1M25 44.5h1M27 44.5h2M39 44.5h1M43 44.5h2M48 44.5h1M0 45.5h1M2 45.5h2M5 45.5h2M9 45.5h1M16 45.5h1M4 46.5h1M14 46.5h1M29 46.5h1M38 46.5h1M45 46.5h1M54 46.5h1M7 47.5h1M10 47.5h1M15 47.5h3M23 47.5h1M42 47.5h1M50 47.5h1M4 48.5h1M6 48.5h1M10 48.5h2M16 48.5h3M20 48.5h1M33 48.5h1M37 48.5h1M1 49.5h1M3 49.5h1M20 49.5h1M29 49.5h1M31 49.5h2M35 49.5h1M42 49.5h1M52 49.5h1M0 50.5h1M5 50.5h1M11 50.5h2M14 50.5h1M16 50.5h2M23 50.5h1M27 50.5h1M33 50.5h1M40 50.5h2M52 50.5h1M0 51.5h2M5 51.5h1M8 51.5h1M14 51.5h1M16 51.5h1M18 51.5h2M26 51.5h1M28 51.5h4M34 51.5h2M39 51.5h2M43 51.5h1M46 51.5h2M50 51.5h1M55 51.5h1M3 52.5h1M9 52.5h1M15 52.5h1M22 52.5h1M26 52.5h1M40 52.5h1M43 52.5h1M45 52.5h1M1 53.5h1M6 53.5h3M13 53.5h1M27 53.5h1M32 53.5h2M35 53.5h1M40 53.5h3M49 53.5h1M51 53.5h1M53 53.5h3M1 54.5h1M5 54.5h1M18 54.5h1M24 54.5h2M41 54.5h1M43 54.5h1M45 54.5h2M55 54.5h1M2 55.5h2M6 55.5h1M11 55.5h1M14 55.5h1M16 55.5h2M23 55.5h1M30 55.5h1M38 55.5h1M40 55.5h1M47 55.5h1M55 55.5h1" stroke="#fff" shape-rendering="crispEdges"/><path d="M11 0.5h1M24 0.5h2M28 0.5h1M35 0.5h1M40 0.5h3M45 0.5h1M47 0.5h1M51 0.5h1M55 0.5h1M3 1.5h1M5 1.5h1M9 1.5h1M15 1.5h2M21 1.5h3M26 1.5h1M28 1.5h2M34 1.5h2M37 1.5h2M42 1.5h1M44 1.5h1M54 1.5h1M2 2.5h1M6 2.5h1M10 2.5h1M12 2.5h1M15 2.5h1M19 2.5h1M23 2.5h1M25 2.5h1M27 2.5h2M31 2.5h1M34 2.5h1M50 2.5h1M4 3.5h1M8 3.5h1M13 3.5h1M21 3.5h1M24 3.5h1M31 3.5h1M36 3.5h1M38 3.5h1M40 3.5h1M44 3.5h1M46 3.5h1M48 3.5h2M53 3.5h1M55 3.5h1M6 4.5h1M9 4.5h3M14 4.5h1M24 4.5h1M31 4.5h1M35 4.5h1M41 4.5h1M48 4.5h2M54 4.5h1M8 5.5h1M15 5.5h1M20 5.5h1M26 5.5h1M29 5.5h1M31 5.5h1M40 5.5h1M52 5.5h1M54 5.5h1M4 6.5h2M8 6.5h1M13 6.5h1M20 6.5h1M27 6.5h1M30 6.5h1M33 6.5h1M37 6.5h2M44 6.5h2M47 6.5h2M54 6.5h2M1 7.5h3M6 7.5h1M13 7.5h1M17 7.5h2M20 7.5h1M24 7.5h1M26 7.5h1M29 7.5h1M32 7.5h1M35 7.5h1M53 7.5h1M6 8.5h1M9 8.5h1M17 8.5h2M27 8.5h1M32 8.5h1M37 8.5h1M43 8.5h1M46 8.5h1M49 8.5h1M52 8.5h1M55 8.5h1M3 9.5h1M12 9.5h2M15 9.5h2M18 9.5h1M39 9.5h1M42 9.5h2M46 9.5h1M48 9.5h1M50 9.5h1M54 9.5h1M6 10.5h1M9 10.5h1M20 10.5h1M24 10.5h1M27 10.5h1M29 10.5h1M35 10.5h1M40 10.5h2M48 10.5h1M54 10.5h2M8 11.5h1M10 11.5h2M19 11.5h3M23 11.5h1M26 11.5h1M30 11.5h2M39 11.5h1M42 11.5h1M45 11.5h1M48 11.5h1M50 11.5h1M52 11.5h1M3 12.5h1M5 12.5h3M10 12.5h7M25 12.5h1M45 12.5h2M50 12.5h2M3 13.5h1M15 13.5h2M20 13.5h1M22 13.5h3M27 13.5h1M39 13.5h2M43 13.5h1M45 13.5h1M48 13.5h1M52 13.5h1M55 13.5h1M3 14.5h1M7 14.5h1M10 14.5h1M13 14.5h1M16 14.5h1M22 14.5h2M28 14.5h1M37 14.5h1M45 14.5h1M47 14.5h1M51 14.5h1M0 15.5h2M3 15.5h1M6 15.5h1M9 15.5h1M15 15.5h1M17 15.5h1M23 15.5h1M25 15.5h2M28 15.5h3M32 15.5h2M35 15.5h1M39 15.5h1M47 15.5h1M51 15.5h1M54 15.5h1M1 16.5h1M6 16.5h3M10 16.5h1M17 16.5h2M21 16.5h1M30 16.5h1M38 16.5h1M41 16.5h1M43 16.5h1M46 16.5h1M48 16.5h1M1 17.5h1M8 17.5h1M10 17.5h1M21 17.5h1M24 17.5h1M28 17.5h1M31 17.5h1M35 17.5h1M37 17.5h1M45 17.5h1M54 17.5h2M4 18.5h1M6 18.5h1M13 18.5h1M17 18.5h1M19 18.5h1M23 18.5h4M32 18.5h1M34 18.5h1M44 18.5h3M50 18.5h2M0 19.5h1M5 19.5h2M9 19.5h1M11 19.5h1M16 19.5h1M18 19.5h1M23 19.5h1M30 19.5h1M32 19.5h2M35 19.5h1M37 19.5h1M40 19.5h1M44 19.5h2M48 19.5h1M52 19.5h1M1 20.5h2M5 20.5h1M7 20.5h2M16 20.5h1M22 20.5h1M35 20.5h2M40 20.5h1M42 20.5h1M54 20.5h2M0 21.5h1M7 21.5h1M9 21.5h1M11 21.5h1M14 21.5h1M19 21.5h1M25 21.5h3M37 21.5h1M40 21.5h3M48 21.5h2M51 21.5h1M54 21.5h2M3 22.5h1M6 22.5h1M12 22.5h1M14 22.5h1M16 22.5h2M21 22.5h2M24 22.5h2M29 22.5h2M33 22.5h2M37 22.5h2M41 22.5h2M45 22.5h1M50 22.5h2M54 22.5h1M2 23.5h2M8 23.5h2M13 23.5h1M17 23.5h2M20 23.5h2M23 23.5h4M33 23.5h1M36 23.5h1M41 23.5h1M44 23.5h2M47 23.5h2M50 23.5h1M52 23.5h1M0 24.5h1M2 24.5h2M10 24.5h2M13 24.5h1M18 24.5h2M21 24.5h1M24 24.5h1M30 24.5h1M36 24.5h3M41 24.5h1M46 24.5h2M50 24.5h2M53 24.5h1M0 25.5h2M9 25.5h2M12 25.5h1M22 25.5h2M26 25.5h3M44 25.5h1M47 25.5h1M49 25.5h1M51 25.5h2M1 26.5h1M7 26.5h1M9 26.5h1M17 26.5h1M19 26.5h1M26 26.5h1M30 26.5h1M34 26.5h2M38 26.5h2M43 26.5h1M51 26.5h1M54 26.5h1M3 27.5h2M6 27.5h2M11 27.5h1M16 27.5h1M19 27.5h1M21 27.5h1M26 27.5h1M30 27.5h1M38 27.5h1M40 27.5h1M43 27.5h1M50 27.5h1M1 28.5h1M3 28.5h1M7 28.5h3M12 28.5h1M14 28.5h2M17 28.5h1M19 28.5h1M21 28.5h1M28 28.5h2M32 28.5h2M36 28.5h1M38 28.5h1M42 28.5h1M44 28.5h2M48 28.5h1M51 28.5h1M53 28.5h1M1 29.5h1M3 29.5h1M15 29.5h3M23 29.5h1M31 29.5h1M34 29.5h1M39 29.5h1M50 29.5h1M55 29.5h1M0 30.5h1M6 30.5h1M14 30.5h1M17 30.5h1M22 30.5h1M28 30.5h1M32 30.5h1M34 30.5h1M36 30.5h2M39 30.5h1M50 30.5h2M55 30.5h1M0 31.5h2M4 31.5h1M6 31.5h1M10 31.5h1M12 31.5h1M14 31.5h1M16 31.5h1M21 31.5h1M24 31.5h1M26 31.5h3M30 31.5h1M33 31.5h2M37 31.5h3M47 31.5h2M51 31.5h1M1 32.5h1M3 32.5h1M9 32.5h1M16 32.5h1M18 32.5h1M20 32.5h2M23 32.5h1M30 32.5h1M41 32.5h1M46 32.5h1M53 32.5h1M55 32.5h1M0 33.5h1M2 33.5h1M12 33.5h1M16 33.5h1M26 33.5h1M31 33.5h1M33 33.5h1M36 33.5h1M44 33.5h2M47 33.5h3M51 33.5h2M3 34.5h2M6 34.5h2M9 34.5h1M13 34.5h1M18 34.5h1M20 34.5h2M24 34.5h1M30 34.5h2M33 34.5h1M35 34.5h2M41 34.5h2M3 35.5h1M9 35.5h1M11 35.5h3M15 35.5h1M24 35.5h1M28 35.5h2M36 35.5h2M42 35.5h1M48 35.5h2M51 35.5h1M54 35.5h1M1 36.5h1M5 36.5h1M7 36.5h2M11 36.5h1M14 36.5h1M16 36.5h1M23 36.5h1M26 36.5h1M32 36.5h1M39 36.5h2M49 36.5h1M52 36.5h1M55 36.5h1M0 37.5h1M3 37.5h3M8 37.5h3M23 37.5h1M26 37.5h1M28 37.5h1M30 37.5h1M35 37.5h2M47 37.5h1M7 38.5h1M9 38.5h1M11 38.5h1M19 38.5h2M55 38.5h1M0 39.5h2M4 39.5h1M7 39.5h1M10 39.5h1M14 39.5h1M17 39.5h2M20 39.5h1M22 39.5h1M25 39.5h3M34 39.5h3M38 39.5h2M42 39.5h1M46 39.5h1M48 39.5h2M0 40.5h1M4 40.5h1M8 40.5h1M13 40.5h1M20 40.5h1M22 40.5h1M26 40.5h1M28 40.5h1M38 40.5h1M40 40.5h1M45 40.5h1M47 40.5h1M54 40.5h1M3 41.5h1M8 41.5h1M10 41.5h1M17 41.5h1M19 41.5h1M21 41.5h1M24 41.5h2M28 41.5h1M31 41.5h1M33 41.5h1M40 41.5h1M43 41.5h1M47 41.5h1M50 41.5h1M55 41.5h1M2 42.5h1M11 42.5h2M15 42.5h1M18 42.5h1M21 42.5h1M26 42.5h1M29 42.5h3M43 42.5h2M48 42.5h1M3 43.5h1M20 43.5h2M25 43.5h1M30 43.5h2M36 43.5h1M39 43.5h1M44 43.5h2M53 43.5h2M0 44.5h2M4 44.5h1M8 44.5h3M14 44.5h1M21 44.5h1M30 44.5h1M33 44.5h1M38 44.5h1M45 44.5h1M47 44.5h1M49 44.5h1M52 44.5h1M7 45.5h1M14 45.5h1M17 45.5h2M21 45.5h2M24 45.5h1M27 45.5h3M31 45.5h1M33 45.5h2M40 45.5h1M44 45.5h1M47 45.5h1M52 45.5h1M54 45.5h1M2 46.5h1M5 46.5h1M7 46.5h1M9 46.5h2M12 46.5h1M18 46.5h1M24 46.5h1M31 46.5h1M34 46.5h1M42 46.5h1M44 46.5h1M52 46.5h1M55 46.5h1M3 47.5h3M8 47.5h1M11 47.5h1M14 47.5h1M20 47.5h1M26 47.5h1M29 47.5h1M31 47.5h1M33 47.5h2M39 47.5h2M44 47.5h3M51 47.5h1M53 47.5h1M0 48.5h3M12 48.5h1M21 48.5h1M24 48.5h1M26 48.5h1M28 48.5h5M34 48.5h1M36 48.5h1M41 48.5h1M48 48.5h2M0 49.5h1M2 49.5h1M6 49.5h2M14 49.5h1M21 49.5h1M25 49.5h1M33 49.5h1M38 49.5h1M46 49.5h2M49 49.5h1M53 49.5h1M55 49.5h1M2 50.5h1M7 50.5h1M15 50.5h1M20 50.5h2M29 50.5h1M31 50.5h1M36 50.5h2M42 50.5h2M49 50.5h1M54 50.5h1M3 51.5h2M13 51.5h1M33 51.5h1M41 51.5h2M44 51.5h1M49 51.5h1M53 51.5h1M1 52.5h2M6 52.5h1M10 52.5h1M12 52.5h1M16 52.5h2M23 52.5h1M30 52.5h1M41 52.5h1M47 52.5h2M50 52.5h2M54 52.5h2M3 53.5h1M5 53.5h1M9 53.5h2M15 53.5h1M20 53.5h4M30 53.5h1M34 53.5h1M48 53.5h1M52 53.5h1M4 54.5h1M14 54.5h1M20 54.5h1M30 54.5h1M34 54.5h1M37 54.5h1M39 54.5h1M42 54.5h1M47 54.5h1M50 54.5h3M54 54.5h1M8 55.5h2M13 55.5h1M22 55.5h1M26 55.5h1M28 55.5h1M34 55.5h1M44 55.5h1M46 55.5h1M50 55.5h2" stroke="#f9ab5c" shape-rendering="crispEdges"/><path d="M33 0.5h1M5 3.5h1M39 3.5h1M47 3.5h1M40 4.5h1M47 5.5h1M46 6.5h1M33 7.5h1M36 7.5h1M43 7.5h1M54 8.5h1M25 10.5h1M42 10.5h1M5 11.5h1M38 11.5h1M43 11.5h1M53 12.5h1M5 13.5h1M7 15.5h1M31 15.5h1M44 15.5h1M14 16.5h1M22 17.5h1M40 17.5h1M47 17.5h1M30 18.5h1M38 19.5h1M41 19.5h1M47 19.5h1M28 20.5h1M27 22.5h1M15 23.5h1M34 23.5h1M37 23.5h2M55 23.5h1M25 24.5h1M52 24.5h1M15 25.5h1M8 26.5h1M16 26.5h1M24 28.5h1M49 28.5h1M12 29.5h1M14 29.5h1M33 30.5h1M18 31.5h1M32 31.5h1M50 31.5h1M4 32.5h1M37 34.5h1M4 35.5h1M20 35.5h1M38 35.5h1M41 35.5h1M48 36.5h1M50 37.5h1M55 37.5h1M31 38.5h1M45 38.5h1M8 39.5h1M29 39.5h1M15 40.5h1M49 41.5h1M36 42.5h1M55 42.5h1M34 43.5h1M15 44.5h1M54 44.5h1M45 45.5h1M51 45.5h1M41 46.5h1M49 47.5h1M22 48.5h1M10 49.5h1M45 49.5h1M39 50.5h1M47 50.5h1M26 53.5h1M38 53.5h1M45 53.5h1M6 54.5h1M12 54.5h1M27 54.5h1M44 54.5h1M7 55.5h1" stroke="#f26a2c" shape-rendering="crispEdges"/></pattern><pattern id="pw" width="72" height="72" patternUnits="userSpaceOnUse"><path d="M0 0.5h1M34 0.5h1M43 0.5h1M61 0.5h1M6 1.5h1M8 1.5h2M30 1.5h1M46 1.5h1M48 1.5h1M59 1.5h1M30 2.5h1M43 2.5h1M49 2.5h1M13 3.5h1M18 3.5h1M43 3.5h1M12 4.5h1M15 4.5h1M21 4.5h1M28 4.5h1M47 4.5h1M57 4.5h1M9 5.5h1M14 5.5h1M25 5.5h1M34 5.5h1M51 5.5h1M15 6.5h1M35 6.5h1M60 6.5h1M2 7.5h1M4 7.5h2M12 7.5h1M43 7.5h1M61 7.5h1M8 8.5h1M13 8.5h1M19 8.5h1M40 8.5h1M56 8.5h1M24 9.5h1M30 9.5h1M32 9.5h1M45 9.5h1M47 9.5h1M30 10.5h1M2 11.5h1M7 11.5h1M37 11.5h1M50 11.5h1M66 11.5h1M52 12.5h1M5 13.5h1M13 13.5h1M28 13.5h1M30 13.5h1M32 13.5h1M49 13.5h1M14 14.5h1M35 14.5h1M45 14.5h1M63 14.5h1M32 15.5h1M40 15.5h1M30 16.5h1M43 16.5h1M49 16.5h1M69 16.5h1M3 17.5h1M14 17.5h1M16 17.5h1M28 17.5h1M32 17.5h1M55 17.5h1M63 17.5h1M23 18.5h1M60 18.5h1M70 18.5h1M7 19.5h1M22 19.5h1M27 19.5h1M65 19.5h1M6 20.5h1M33 20.5h1M51 20.5h1M58 20.5h3M65 20.5h1M1 21.5h1M8 21.5h1M20 21.5h1M29 21.5h1M43 21.5h1M47 21.5h1M71 21.5h1M2 22.5h1M12 22.5h1M62 22.5h1M3 23.5h1M15 23.5h1M25 23.5h1M31 23.5h1M37 23.5h1M53 23.5h2M67 23.5h2M1 24.5h1M16 24.5h1M33 24.5h1M55 24.5h1M63 25.5h1M67 25.5h1M6 26.5h1M24 26.5h1M35 26.5h1M53 26.5h1M56 26.5h1M60 26.5h1M10 27.5h1M17 27.5h1M29 27.5h2M44 27.5h1M53 27.5h1M8 28.5h1M25 28.5h1M49 29.5h1M68 29.5h1M39 30.5h1M15 31.5h1M49 31.5h1M69 31.5h1M16 32.5h1M36 32.5h1M38 32.5h1M15 33.5h1M60 33.5h1M16 34.5h1M35 34.5h1M56 34.5h1M60 34.5h1M33 35.5h1M36 35.5h1M9 36.5h1M31 36.5h1M40 36.5h1M69 36.5h1M42 37.5h1M47 37.5h1M57 38.5h1M60 38.5h1M64 38.5h1M10 39.5h1M25 39.5h1M27 39.5h1M15 40.5h1M33 40.5h2M55 40.5h1M61 40.5h1M41 41.5h1M51 41.5h1M55 41.5h1M9 42.5h1M29 42.5h1M71 42.5h1M24 43.5h1M34 43.5h1M49 43.5h1M12 44.5h1M36 44.5h1M51 44.5h1M56 44.5h1M58 44.5h1M22 45.5h1M30 46.5h2M56 46.5h1M20 47.5h1M50 47.5h1M53 47.5h1M3 48.5h1M5 48.5h1M38 48.5h1M4 49.5h1M6 49.5h1M17 49.5h1M37 49.5h1M67 49.5h1M18 50.5h1M52 50.5h1M60 50.5h1M5 51.5h1M7 51.5h1M53 51.5h1M70 51.5h1M0 52.5h1M35 52.5h1M37 52.5h1M41 52.5h1M44 52.5h1M50 52.5h1M59 53.5h1M66 53.5h1M71 53.5h1M9 54.5h1M14 54.5h1M23 54.5h1M44 54.5h1M46 54.5h1M65 54.5h1M8 55.5h1M35 55.5h1M47 55.5h1M60 55.5h1M45 56.5h2M52 56.5h1M33 57.5h1M28 58.5h1M57 58.5h1M67 58.5h1M4 59.5h1M8 59.5h1M33 60.5h1M39 60.5h1M49 60.5h1M53 60.5h1M2 61.5h1M7 61.5h1M9 61.5h1M33 61.5h1M9 62.5h1M52 62.5h1M59 62.5h1M62 62.5h1M70 62.5h1M6 63.5h1M26 63.5h1M46 64.5h1M48 64.5h1M50 64.5h1M54 64.5h1M56 64.5h1M62 64.5h1M0 65.5h1M29 65.5h1M40 65.5h1M54 65.5h1M4 66.5h1M10 66.5h1M18 66.5h1M29 66.5h1M55 66.5h1M10 68.5h1M19 68.5h1M39 68.5h1M45 68.5h2M52 69.5h1M67 69.5h1M5 70.5h1M16 70.5h1M64 70.5h1M5 71.5h1M15 71.5h1M32 71.5h1M69 71.5h1M71 71.5h1" stroke="#f5a24a" shape-rendering="crispEdges"/><path d="M10 0.5h1M39 0.5h1M60 0.5h1M4 1.5h1M60 1.5h1M4 2.5h1M10 2.5h1M38 2.5h1M69 2.5h1M34 3.5h1M24 4.5h1M18 6.5h1M45 6.5h1M54 6.5h1M7 7.5h1M23 7.5h1M44 8.5h1M55 8.5h1M60 8.5h1M62 8.5h2M68 8.5h1M46 9.5h1M49 9.5h1M26 10.5h1M64 10.5h1M6 12.5h1M50 13.5h1M63 13.5h1M23 14.5h1M25 14.5h1M25 15.5h1M6 16.5h1M9 17.5h1M46 17.5h1M64 18.5h1M1 19.5h1M31 20.5h1M42 20.5h1M7 21.5h1M30 21.5h1M30 22.5h1M59 22.5h1M40 23.5h1M6 24.5h1M14 24.5h1M23 24.5h1M29 24.5h1M31 24.5h1M69 24.5h1M10 25.5h1M16 25.5h1M70 25.5h1M12 26.5h1M9 28.5h1M20 28.5h2M26 28.5h1M30 28.5h1M1 29.5h1M31 29.5h1M7 30.5h1M37 30.5h1M64 30.5h1M0 32.5h1M15 32.5h1M30 32.5h1M64 32.5h1M1 33.5h1M3 33.5h1M8 33.5h1M25 33.5h1M13 34.5h1M60 35.5h1M63 35.5h1M5 36.5h1M13 36.5h1M47 36.5h1M12 37.5h1M63 37.5h1M17 38.5h1M52 38.5h1M65 38.5h1M28 39.5h1M60 39.5h1M6 40.5h1M27 40.5h1M48 40.5h1M67 41.5h1M0 42.5h1M48 42.5h1M25 43.5h1M32 43.5h1M24 44.5h1M35 44.5h1M40 44.5h1M57 44.5h1M11 45.5h1M20 45.5h1M42 46.5h1M45 46.5h1M47 46.5h1M2 48.5h1M13 48.5h1M15 48.5h1M43 48.5h1M46 48.5h1M66 48.5h1M64 50.5h1M25 51.5h1M50 51.5h1M34 52.5h1M63 52.5h1M50 53.5h1M17 54.5h1M44 55.5h1M22 56.5h1M39 56.5h1M69 56.5h1M25 57.5h1M44 57.5h1M70 57.5h1M0 58.5h1M49 58.5h1M49 59.5h1M36 60.5h1M43 60.5h1M45 60.5h1M4 61.5h1M36 61.5h1M71 61.5h1M35 62.5h1M63 62.5h1M7 64.5h2M29 64.5h1M41 64.5h1M68 64.5h1M28 65.5h1M50 65.5h1M16 66.5h1M35 66.5h1M38 66.5h1M3 67.5h1M25 67.5h1M27 67.5h1M55 67.5h1M7 68.5h1M17 68.5h1M26 68.5h1M66 68.5h1M37 69.5h1M46 69.5h1M59 69.5h1M20 70.5h1M53 70.5h1M27 71.5h1M58 71.5h1M68 71.5h1" stroke="#f0d070" shape-rendering="crispEdges"/><path d="M40 0.5h1M31 1.5h1M25 2.5h1M0 4.5h1M70 4.5h1M52 7.5h1M70 8.5h1M28 9.5h1M43 9.5h1M5 10.5h1M32 10.5h1M38 13.5h1M3 14.5h1M46 15.5h1M4 16.5h1M54 16.5h1M17 17.5h1M0 21.5h1M15 21.5h1M54 21.5h1M5 22.5h1M36 23.5h1M57 23.5h1M34 28.5h1M25 32.5h1M39 35.5h1M67 35.5h1M18 36.5h1M34 37.5h1M31 39.5h1M4 40.5h1M19 40.5h1M28 40.5h1M60 42.5h1M28 44.5h1M18 46.5h1M48 46.5h1M16 48.5h1M59 51.5h1M6 52.5h1M16 53.5h1M27 53.5h1M22 55.5h1M61 55.5h1M18 57.5h1M31 57.5h1M39 57.5h1M65 57.5h1M47 58.5h1M39 59.5h1M8 60.5h1M23 60.5h1M64 61.5h1M2 62.5h1M12 62.5h1M68 62.5h1M11 65.5h1M35 65.5h1M8 66.5h1M39 67.5h1M38 68.5h1M34 69.5h1M48 69.5h1" stroke="#5a7a52" shape-rendering="crispEdges"/><path d="M55 0.5h1M64 0.5h1M68 0.5h1M32 1.5h1M44 1.5h1M64 1.5h1M26 2.5h1M29 2.5h1M34 2.5h1M44 2.5h1M6 3.5h1M19 3.5h1M25 3.5h1M31 3.5h1M35 3.5h1M37 3.5h1M42 3.5h1M61 3.5h1M66 3.5h1M6 4.5h1M18 4.5h1M46 4.5h1M51 4.5h1M13 5.5h1M35 5.5h1M44 5.5h1M53 5.5h1M63 5.5h1M69 5.5h1M8 6.5h1M27 6.5h1M44 6.5h1M10 7.5h1M17 7.5h1M19 7.5h1M38 7.5h1M45 7.5h1M53 7.5h1M62 7.5h1M65 7.5h1M5 8.5h1M10 8.5h1M21 8.5h1M29 8.5h1M43 8.5h1M54 8.5h1M0 9.5h1M11 9.5h1M39 9.5h1M60 9.5h1M67 9.5h1M1 10.5h2M6 10.5h1M27 10.5h1M52 10.5h1M38 11.5h1M68 11.5h1M18 12.5h1M54 12.5h2M58 12.5h1M62 12.5h1M64 12.5h2M31 13.5h1M0 14.5h1M26 14.5h1M30 14.5h1M33 14.5h1M21 15.5h1M30 15.5h1M48 15.5h1M63 15.5h1M7 16.5h1M47 16.5h1M4 17.5h1M10 17.5h1M24 17.5h1M44 17.5h1M54 17.5h1M56 17.5h1M2 18.5h1M15 18.5h1M34 18.5h1M47 18.5h1M2 19.5h1M13 19.5h1M17 19.5h1M44 19.5h1M60 19.5h1M71 19.5h1M1 20.5h2M41 20.5h1M45 20.5h1M54 20.5h1M5 21.5h1M27 21.5h1M37 21.5h1M58 21.5h1M0 22.5h1M8 22.5h1M14 22.5h1M53 22.5h1M46 23.5h1M63 23.5h1M21 24.5h1M26 24.5h1M62 24.5h1M4 25.5h2M8 25.5h1M28 25.5h1M37 25.5h1M43 25.5h1M57 25.5h1M59 25.5h1M28 26.5h1M67 26.5h1M2 27.5h1M22 27.5h1M51 27.5h1M65 27.5h1M17 28.5h1M19 28.5h1M33 28.5h1M51 28.5h1M61 28.5h1M65 28.5h1M16 29.5h1M41 29.5h1M43 29.5h1M53 29.5h1M57 29.5h2M54 30.5h1M1 31.5h1M44 32.5h1M48 32.5h1M31 33.5h1M51 33.5h1M53 33.5h1M59 33.5h1M7 34.5h1M17 34.5h1M58 34.5h1M69 34.5h2M27 35.5h1M43 35.5h1M48 35.5h1M50 35.5h1M54 35.5h1M32 36.5h1M34 36.5h1M38 36.5h1M46 36.5h1M3 37.5h1M18 37.5h1M36 37.5h1M68 37.5h1M3 38.5h1M15 38.5h1M14 39.5h1M16 39.5h1M26 39.5h1M38 39.5h1M58 39.5h1M13 40.5h1M37 40.5h1M42 40.5h1M50 40.5h1M54 40.5h1M63 40.5h1M68 40.5h1M29 41.5h1M69 41.5h1M7 42.5h1M22 42.5h1M32 42.5h1M43 42.5h2M51 42.5h1M58 42.5h1M69 42.5h1M0 43.5h1M5 43.5h1M46 43.5h1M6 44.5h1M17 44.5h2M42 44.5h1M44 44.5h1M59 44.5h1M70 44.5h1M9 45.5h1M48 45.5h1M66 45.5h2M1 46.5h1M6 46.5h1M44 46.5h1M69 46.5h1M3 47.5h1M15 47.5h1M36 47.5h1M38 47.5h1M1 48.5h1M30 48.5h1M49 48.5h1M69 48.5h1M2 49.5h1M10 49.5h1M23 49.5h2M40 49.5h1M61 49.5h1M1 50.5h1M41 50.5h1M53 50.5h2M70 50.5h1M3 51.5h1M31 51.5h1M48 51.5h1M5 52.5h1M14 52.5h1M17 52.5h1M24 52.5h1M31 52.5h1M62 52.5h1M19 53.5h1M30 53.5h1M36 53.5h1M57 53.5h1M2 54.5h1M8 54.5h1M18 54.5h1M24 54.5h1M50 54.5h1M60 54.5h1M17 55.5h1M37 55.5h1M54 55.5h1M47 56.5h1M50 56.5h1M63 56.5h1M51 57.5h1M53 57.5h1M58 57.5h1M61 57.5h1M71 57.5h1M8 58.5h1M11 58.5h1M9 59.5h1M19 59.5h1M32 59.5h1M67 59.5h1M9 60.5h1M19 60.5h1M41 60.5h1M70 60.5h1M50 61.5h1M65 61.5h1M69 61.5h1M15 62.5h1M64 62.5h1M69 62.5h1M12 63.5h1M44 63.5h1M66 63.5h1M9 64.5h1M15 64.5h1M16 65.5h1M23 65.5h1M53 65.5h1M61 65.5h1M20 66.5h1M22 66.5h1M45 66.5h1M65 66.5h1M31 67.5h1M33 67.5h1M38 67.5h1M23 68.5h1M54 68.5h1M24 69.5h1M62 69.5h1M66 69.5h1M69 69.5h1M14 70.5h1M65 70.5h1M12 71.5h1M19 71.5h1M21 71.5h1M31 71.5h1M46 71.5h1M66 71.5h1" stroke="#f8c88a" shape-rendering="crispEdges"/><path d="M11 1.5h1M21 1.5h1M33 1.5h1M68 1.5h1M5 2.5h1M70 3.5h1M50 6.5h1M44 7.5h1M0 8.5h1M54 9.5h1M59 11.5h1M2 12.5h1M22 12.5h1M63 12.5h1M21 14.5h1M23 16.5h1M28 16.5h1M13 17.5h1M31 17.5h1M43 18.5h1M18 19.5h1M11 20.5h1M66 26.5h1M15 29.5h1M22 29.5h2M26 29.5h1M54 29.5h1M45 30.5h1M23 31.5h1M66 33.5h1M15 37.5h1M25 37.5h1M33 37.5h1M9 38.5h1M17 40.5h1M14 41.5h1M37 41.5h1M4 42.5h1M17 42.5h1M6 43.5h1M15 43.5h1M38 43.5h1M8 44.5h1M32 47.5h1M47 47.5h1M10 50.5h1M47 50.5h1M71 50.5h1M55 52.5h1M28 56.5h1M71 56.5h1M7 58.5h1M62 58.5h1M31 60.5h1M51 60.5h1M26 61.5h1M10 62.5h1M52 63.5h1M0 67.5h1M48 67.5h1M45 69.5h1" stroke="#f26a2c" shape-rendering="crispEdges"/></pattern><linearGradient id="mg" gradientUnits="userSpaceOnUse" x1="180" y1="103" x2="242" y2="115"><stop offset="0" stop-color="#000"/><stop offset=".45" stop-color="#555"/><stop offset="1" stop-color="#fff"/></linearGradient><radialGradient id="cg"><stop offset="0" stop-color="#f2481a" stop-opacity=".92"/><stop offset=".5" stop-color="#f55c26" stop-opacity=".5"/><stop offset="1" stop-color="#f87a3a" stop-opacity="0"/></radialGradient><radialGradient id="tg"><stop offset="0" stop-color="#f46a2c" stop-opacity=".5"/><stop offset=".6" stop-color="#f5742f" stop-opacity=".3"/><stop offset="1" stop-color="#f67a34" stop-opacity="0"/></radialGradient><radialGradient id="bg"><stop offset="0" stop-color="#000" stop-opacity=".75"/><stop offset="1" stop-color="#000" stop-opacity="0"/></radialGradient><radialGradient id="wg"><stop offset="0" stop-color="#fff" stop-opacity=".9"/><stop offset="1" stop-color="#fff" stop-opacity="0"/></radialGradient><mask id="me" maskUnits="userSpaceOnUse" x="0" y="0" width="450" height="270"><rect width="450" height="270" fill="url(#mg)"/><ellipse cx="418" cy="40" rx="16" ry="18" fill="url(#bg)"/><ellipse cx="256" cy="23" rx="22" ry="10" fill="url(#bg)"/><ellipse cx="300" cy="35" rx="16" ry="7" fill="url(#bg)"/><ellipse cx="360" cy="60" rx="8" ry="6" fill="url(#bg)"/><ellipse cx="36" cy="25" rx="10" ry="14" fill="url(#wg)"/><ellipse cx="33" cy="42" rx="7" ry="7" fill="url(#wg)"/><ellipse cx="33" cy="120" rx="7" ry="10" fill="url(#wg)"/><ellipse cx="41" cy="132" rx="5" ry="12" fill="url(#wg)"/><ellipse cx="56" cy="163" rx="11" ry="7" fill="url(#wg)"/><ellipse cx="107" cy="104" rx="5" ry="12" fill="url(#wg)"/><ellipse cx="147" cy="108" rx="7" ry="12" fill="url(#wg)"/><ellipse cx="107" cy="170" rx="7" ry="6" fill="url(#wg)"/></mask><clipPath id="usc"><polygon points="31.8,11.8 231.5,11.8 231.5,7.5 234.5,7.8 234.5,11.8 250.3,17.8 268.4,21.8 279.0,19.7 266.0,26.0 253.3,35.4 268.4,32.4 283.6,27.8 291.1,35.4 310.8,38.4 315.3,42.0 301.7,43.0 292.6,46.0 291.1,47.5 287.0,58.0 286.0,68.7 288.1,83.8 292.6,85.3 294.2,71.7 295.7,50.5 301.7,44.5 304.7,44.5 316.9,50.5 313.8,64.2 321.4,62.6 322.9,74.7 318.4,85.3 328.0,85.0 336.2,83.0 346.0,74.9 346.8,70.8 354.0,68.4 364.6,67.6 366.2,61.1 374.3,53.0 401.1,52.5 403.5,48.1 408.4,44.1 412.5,34.3 417.3,27.0 426.3,28.7 427.9,40.8 430.3,49.7 432.7,53.8 425.5,57.9 417.3,63.5 410.8,67.6 406.0,74.1 407.6,79.8 405.2,82.2 411.7,83.8 411.7,89.5 406.0,87.9 404.4,91.1 397.9,91.9 389.8,93.5 384.1,96.8 382.5,102.5 380.8,109.0 377.6,113.0 373.5,114.6 371.9,120.3 373.5,123.6 368.7,126.8 368.7,134.9 372.7,141.4 371.9,149.5 367.0,152.8 363.8,160.0 356.2,165.5 347.1,174.6 338.0,186.7 332.0,198.8 330.5,201.9 335.0,220.0 339.6,241.2 336.5,256.3 325.9,260.9 324.4,247.3 319.9,229.1 321.4,214.0 313.8,201.9 301.7,206.4 289.6,198.8 274.5,207.9 271.5,212.5 265.4,215.5 256.3,211.0 244.2,206.4 232.1,208.0 225.0,217.0 218.0,232.0 215.5,247.0 202.8,241.0 193.7,223.0 181.6,208.0 174.0,215.5 163.4,208.0 151.3,186.7 138.6,188.0 132.3,192.0 119.5,192.0 92.3,180.0 75.7,180.0 65.0,167.0 50.0,159.5 39.3,135.3 28.7,117.0 21.8,99.0 22.7,83.8 23.6,43.0 24.2,29.3 20.6,17.8"/></clipPath></defs><g clip-path="url(#usc)" fill="none" stroke-width="1"><rect width="450" height="270" fill="url(#pw)" stroke="none"/><rect width="450" height="270" fill="url(#pe)" mask="url(#me)" stroke="none"/><ellipse cx="332" cy="92" rx="85" ry="22" fill="url(#tg)" stroke="none" transform="rotate(-6 332 92)"/><ellipse cx="268" cy="82" rx="38" ry="42" fill="url(#tg)" opacity=".7" stroke="none"/><ellipse cx="38" cy="128" rx="5" ry="24" fill="url(#cg)" stroke="none" transform="rotate(-27 38 128)"/><ellipse cx="57" cy="165" rx="12" ry="5" fill="url(#cg)" stroke="none" transform="rotate(15 57 165)"/><ellipse cx="31" cy="120" rx="5" ry="6" fill="url(#cg)" stroke="none" transform="rotate(0 31 120)"/><ellipse cx="37" cy="24" rx="5" ry="11" fill="url(#cg)" stroke="none" transform="rotate(0 37 24)"/><ellipse cx="33" cy="47" rx="4" ry="11" fill="url(#cg)" stroke="none" transform="rotate(0 33 47)"/><ellipse cx="107" cy="106" rx="3.5" ry="12" fill="url(#cg)" stroke="none" transform="rotate(0 107 106)"/><ellipse cx="147" cy="110" rx="4" ry="13" fill="url(#cg)" stroke="none" transform="rotate(0 147 110)"/><ellipse cx="137" cy="160" rx="3" ry="12" fill="url(#cg)" stroke="none" transform="rotate(0 137 160)"/><ellipse cx="107" cy="170" rx="6" ry="5" fill="url(#cg)" stroke="none" transform="rotate(0 107 170)"/><ellipse cx="84" cy="146" rx="3" ry="3" fill="url(#cg)" stroke="none" transform="rotate(0 84 146)"/><circle cx="245" cy="48" r="9" fill="url(#cg)" stroke="none"/><circle cx="237" cy="110" r="6" fill="url(#cg)" stroke="none"/><circle cx="218" cy="165" r="9" fill="url(#cg)" stroke="none"/><circle cx="230" cy="210" r="9" fill="url(#cg)" stroke="none"/><circle cx="208" cy="212" r="6" fill="url(#cg)" stroke="none"/><circle cx="212" cy="200" r="5" fill="url(#cg)" stroke="none"/><circle cx="212" cy="148" r="5" fill="url(#cg)" stroke="none"/><circle cx="263" cy="112" r="7" fill="url(#cg)" stroke="none"/><circle cx="290" cy="82" r="11" fill="url(#cg)" stroke="none"/><circle cx="319" cy="80" r="8" fill="url(#cg)" stroke="none"/><circle cx="298" cy="105" r="6" fill="url(#cg)" stroke="none"/><circle cx="310" cy="112" r="6" fill="url(#cg)" stroke="none"/><circle cx="320" cy="102" r="6" fill="url(#cg)" stroke="none"/><circle cx="330" cy="86" r="7" fill="url(#cg)" stroke="none"/><circle cx="341" cy="97" r="7" fill="url(#cg)" stroke="none"/><circle cx="309" cy="165" r="9" fill="url(#cg)" stroke="none"/><circle cx="292" cy="142" r="5" fill="url(#cg)" stroke="none"/><circle cx="338" cy="250" r="7" fill="url(#cg)" stroke="none"/><circle cx="322" cy="225" r="6" fill="url(#cg)" stroke="none"/><circle cx="331" cy="222" r="5" fill="url(#cg)" stroke="none"/><circle cx="384" cy="97" r="12" fill="url(#cg)" stroke="none"/><circle cx="377" cy="107" r="9" fill="url(#cg)" stroke="none"/><circle cx="368" cy="118" r="9" fill="url(#cg)" stroke="none"/><circle cx="406" cy="80" r="8" fill="url(#cg)" stroke="none"/><circle cx="395" cy="91" r="6" fill="url(#cg)" stroke="none"/><circle cx="340" cy="150" r="6" fill="url(#cg)" stroke="none"/><circle cx="355" cy="145" r="5" fill="url(#cg)" stroke="none"/><circle cx="262" cy="210" r="5" fill="url(#cg)" stroke="none"/><circle cx="267" cy="150" r="4" fill="url(#cg)" stroke="none"/><circle cx="290" cy="168" r="4" fill="url(#cg)" stroke="none"/><circle cx="355" cy="70" r="4" fill="url(#cg)" stroke="none"/><circle cx="348" cy="73" r="4" fill="url(#cg)" stroke="none"/><circle cx="225" cy="103" r="4" fill="url(#cg)" stroke="none"/><circle cx="285" cy="65" r="5" fill="url(#cg)" stroke="none"/></g><polygon points="31.8,11.8 231.5,11.8 231.5,7.5 234.5,7.8 234.5,11.8 250.3,17.8 268.4,21.8 279.0,19.7 266.0,26.0 253.3,35.4 268.4,32.4 283.6,27.8 291.1,35.4 310.8,38.4 315.3,42.0 301.7,43.0 292.6,46.0 291.1,47.5 287.0,58.0 286.0,68.7 288.1,83.8 292.6,85.3 294.2,71.7 295.7,50.5 301.7,44.5 304.7,44.5 316.9,50.5 313.8,64.2 321.4,62.6 322.9,74.7 318.4,85.3 328.0,85.0 336.2,83.0 346.0,74.9 346.8,70.8 354.0,68.4 364.6,67.6 366.2,61.1 374.3,53.0 401.1,52.5 403.5,48.1 408.4,44.1 412.5,34.3 417.3,27.0 426.3,28.7 427.9,40.8 430.3,49.7 432.7,53.8 425.5,57.9 417.3,63.5 410.8,67.6 406.0,74.1 407.6,79.8 405.2,82.2 411.7,83.8 411.7,89.5 406.0,87.9 404.4,91.1 397.9,91.9 389.8,93.5 384.1,96.8 382.5,102.5 380.8,109.0 377.6,113.0 373.5,114.6 371.9,120.3 373.5,123.6 368.7,126.8 368.7,134.9 372.7,141.4 371.9,149.5 367.0,152.8 363.8,160.0 356.2,165.5 347.1,174.6 338.0,186.7 332.0,198.8 330.5,201.9 335.0,220.0 339.6,241.2 336.5,256.3 325.9,260.9 324.4,247.3 319.9,229.1 321.4,214.0 313.8,201.9 301.7,206.4 289.6,198.8 274.5,207.9 271.5,212.5 265.4,215.5 256.3,211.0 244.2,206.4 232.1,208.0 225.0,217.0 218.0,232.0 215.5,247.0 202.8,241.0 193.7,223.0 181.6,208.0 174.0,215.5 163.4,208.0 151.3,186.7 138.6,188.0 132.3,192.0 119.5,192.0 92.3,180.0 75.7,180.0 65.0,167.0 50.0,159.5 39.3,135.3 28.7,117.0 21.8,99.0 22.7,83.8 23.6,43.0 24.2,29.3 20.6,17.8" fill="none" stroke="#1a1a1a" stroke-width="1"/><polyline points="33.0,43.0 55.0,41.0 75.7,40.0" fill="none" stroke="#1a1a1a" stroke-width="1"/><polyline points="75.7,11.8 75.7,83.0" fill="none" stroke="#1a1a1a" stroke-width="1"/><polyline points="22.7,83.2 96.8,83.2" fill="none" stroke="#1a1a1a" stroke-width="1"/><polyline points="82.3,11.8 86.0,25.0 94.0,42.0 100.0,50.5 110.0,55.0 116.0,56.6 118.0,52.6" fill="none" stroke="#1a1a1a" stroke-width="1"/><polyline points="118.0,52.6 168.0,52.6 168.0,93.0 118.0,93.0 118.0,52.6" fill="none" stroke="#1a1a1a" stroke-width="1"/><polyline points="168.0,11.8 168.0,52.6" fill="none" stroke="#1a1a1a" stroke-width="1"/><polyline points="168.0,43.0 222.5,43.0" fill="none" stroke="#1a1a1a" stroke-width="1"/><polyline points="168.0,72.3 220.0,72.3 224.0,76.0" fill="none" stroke="#1a1a1a" stroke-width="1"/><polyline points="96.8,83.2 96.8,133.8" fill="none" stroke="#1a1a1a" stroke-width="1"/><polyline points="96.8,83.2 118.0,83.2" fill="none" stroke="#1a1a1a" stroke-width="1"/><polyline points="132.3,93.8 182.2,93.8 182.2,133.8 96.8,133.8" fill="none" stroke="#1a1a1a" stroke-width="1"/><polyline points="132.3,93.0 132.3,192.0" fill="none" stroke="#1a1a1a" stroke-width="1"/><polyline points="182.2,103.5 233.0,103.5" fill="none" stroke="#1a1a1a" stroke-width="1"/><polyline points="175.5,134.7 236.0,134.7" fill="none" stroke="#1a1a1a" stroke-width="1"/><polyline points="175.5,134.7 175.5,185.0 151.3,186.7" fill="none" stroke="#1a1a1a" stroke-width="1"/><polyline points="175.5,140.0 196.7,140.0 196.7,155.0 205.0,159.0 215.0,162.0 225.0,165.0 239.0,168.5" fill="none" stroke="#1a1a1a" stroke-width="1"/><polyline points="53.9,83.2 53.9,111.0 92.3,153.5 90.0,166.0 92.3,180.0" fill="none" stroke="#1a1a1a" stroke-width="1"/><polyline points="92.3,153.5 96.8,145.0 96.8,133.8" fill="none" stroke="#1a1a1a" stroke-width="1"/><polyline points="220.0,67.2 259.3,67.2" fill="none" stroke="#1a1a1a" stroke-width="1"/><polyline points="229.0,97.4 262.4,97.4" fill="none" stroke="#1a1a1a" stroke-width="1"/><polyline points="235.1,138.3 270.0,138.3" fill="none" stroke="#1a1a1a" stroke-width="1"/><polyline points="239.7,174.6 259.3,174.6" fill="none" stroke="#1a1a1a" stroke-width="1"/><polyline points="269.9,138.3 365.3,138.3" fill="none" stroke="#1a1a1a" stroke-width="1"/><polyline points="265.4,155.0 341.0,155.0" fill="none" stroke="#1a1a1a" stroke-width="1"/><polyline points="280.5,155.0 280.5,202.0 276.0,207.0" fill="none" stroke="#1a1a1a" stroke-width="1"/><polyline points="300.2,155.0 304.0,180.0 305.0,195.8" fill="none" stroke="#1a1a1a" stroke-width="1"/><polyline points="285.1,195.8 326.0,195.8" fill="none" stroke="#1a1a1a" stroke-width="1"/><polyline points="286.6,85.3 286.6,123.0" fill="none" stroke="#1a1a1a" stroke-width="1"/><polyline points="305.7,85.3 305.7,111.0" fill="none" stroke="#1a1a1a" stroke-width="1"/><polyline points="336.2,83.0 336.2,105.7" fill="none" stroke="#1a1a1a" stroke-width="1"/><polyline points="336.2,105.7 372.0,105.7" fill="none" stroke="#1a1a1a" stroke-width="1"/><polyline points="346.0,83.0 374.3,83.0 378.0,90.0 376.0,98.0 380.0,104.0" fill="none" stroke="#1a1a1a" stroke-width="1"/><polyline points="253.0,38.0 250.3,41.5 259.3,71.7 262.4,89.9 259.3,105.0 265.4,117.1 271.5,126.2 274.5,135.3 269.9,147.4 265.4,159.5 259.3,177.7 257.8,195.8 262.0,204.0" fill="none" stroke="#1a1a1a" stroke-width="1"/><polyline points="274.5,132.3 283.6,123.2 298.7,120.1 307.8,111.1 322.9,108.0 336.5,99.0" fill="none" stroke="#1a1a1a" stroke-width="1"/><polyline points="222.5,11.8 224.0,43.0 226.0,67.2 229.0,76.0 233.0,103.5 235.1,110.0 235.1,138.3 236.0,170.0 239.7,174.6 241.0,208.0" fill="none" stroke="#1a1a1a" stroke-width="1"/><polyline points="259.0,39.0 272.0,39.0 285.0,43.0 290.0,47.0" fill="none" stroke="#1a1a1a" stroke-width="1"/><polyline points="262.4,89.9 286.6,88.0" fill="none" stroke="#1a1a1a" stroke-width="1"/><polyline points="387.3,52.5 387.3,93.5" fill="none" stroke="#1a1a1a" stroke-width="1"/><polyline points="403.5,48.0 405.2,65.0 406.0,74.0" fill="none" stroke="#1a1a1a" stroke-width="1"/><polyline points="401.0,52.5 396.2,63.5 393.0,75.7" fill="none" stroke="#1a1a1a" stroke-width="1"/><polyline points="387.3,75.7 406.0,75.7" fill="none" stroke="#1a1a1a" stroke-width="1"/><polyline points="387.3,82.2 405.2,82.2" fill="none" stroke="#1a1a1a" stroke-width="1"/><polyline points="341.0,155.0 350.0,148.0 362.0,149.0 365.3,155.0" fill="none" stroke="#1a1a1a" stroke-width="1"/><polyline points="341.0,155.0 332.0,170.0 338.0,186.7" fill="none" stroke="#1a1a1a" stroke-width="1"/><polyline points="336.5,102.0 345.0,120.0 355.0,123.0 362.0,115.0 368.0,117.0" fill="none" stroke="#1a1a1a" stroke-width="1"/><polyline points="307.8,111.1 322.0,123.0 330.0,132.0 340.0,138.3" fill="none" stroke="#1a1a1a" stroke-width="1"/></svg>
<div style="left:301px;top:747.7px;font:8px/8.94px 'Liberation Sans',sans-serif;color:#222;white-space:pre;">(p/km²)</div>
<svg style="left:301px;top:760px;" width="450" height="21" viewBox="0 0 450 21"><rect x="0.00" y="0" width="22.75" height="17" fill="rgb(23, 92, 48)"/><rect x="22.45" y="0" width="22.75" height="17" fill="rgb(48, 106, 48)"/><rect x="44.90" y="0" width="22.75" height="17" fill="rgb(73, 120, 49)"/><rect x="67.35" y="0" width="22.75" height="17" fill="rgb(99, 134, 49)"/><rect x="89.80" y="0" width="22.75" height="17" fill="rgb(126, 150, 50)"/><rect x="112.25" y="0" width="22.75" height="17" fill="rgb(154, 167, 50)"/><rect x="134.70" y="0" width="22.75" height="17" fill="rgb(182, 185, 50)"/><rect x="157.15" y="0" width="22.75" height="17" fill="rgb(203, 191, 50)"/><rect x="179.60" y="0" width="22.75" height="17" fill="rgb(221, 194, 50)"/><rect x="202.05" y="0" width="22.75" height="17" fill="rgb(233, 190, 49)"/><rect x="224.50" y="0" width="22.75" height="17" fill="rgb(237, 177, 47)"/><rect x="246.95" y="0" width="22.75" height="17" fill="rgb(240, 165, 45)"/><rect x="269.40" y="0" width="22.75" height="17" fill="rgb(242, 148, 45)"/><rect x="291.85" y="0" width="22.75" height="17" fill="rgb(243, 130, 45)"/><rect x="314.30" y="0" width="22.75" height="17" fill="rgb(244, 112, 45)"/><rect x="336.75" y="0" width="22.75" height="17" fill="rgb(244, 93, 45)"/><rect x="359.20" y="0" width="22.75" height="17" fill="rgb(246, 75, 46)"/><rect x="381.65" y="0" width="22.75" height="17" fill="rgb(247, 56, 47)"/><rect x="404.10" y="0" width="22.75" height="17" fill="rgb(248, 38, 48)"/><rect x="426.55" y="0" width="22.75" height="17" fill="rgb(250, 20, 50)"/><rect x=".5" y=".5" width="448" height="16" fill="none" stroke="#333"/><rect x="22.4" y="17" width="1" height="3" fill="#333"/><rect x="44.9" y="17" width="1" height="3" fill="#333"/><rect x="67.3" y="17" width="1" height="3" fill="#333"/><rect x="89.8" y="17" width="1" height="3" fill="#333"/><rect x="112.2" y="17" width="1" height="3" fill="#333"/><rect x="134.7" y="17" width="1" height="3" fill="#333"/><rect x="157.2" y="17" width="1" height="3" fill="#333"/><rect x="179.6" y="17" width="1" height="3" fill="#333"/><rect x="202.0" y="17" width="1" height="3" fill="#333"/><rect x="224.5" y="17" width="1" height="3" fill="#333"/><rect x="246.9" y="17" width="1" height="3" fill="#333"/><rect x="269.4" y="17" width="1" height="3" fill="#333"/><rect x="291.8" y="17" width="1" height="3" fill="#333"/><rect x="314.3" y="17" width="1" height="3" fill="#333"/><rect x="336.8" y="17" width="1" height="3" fill="#333"/><rect x="359.2" y="17" width="1" height="3" fill="#333"/><rect x="381.6" y="17" width="1" height="3" fill="#333"/><rect x="404.1" y="17" width="1" height="3" fill="#333"/><rect x="426.6" y="17" width="1" height="3" fill="#333"/></svg>
<div style="left:293.7px;top:781.1px;font:7.5px/8.38px 'Liberation Sans',sans-serif;color:#111;white-space:pre;">0.04</div>
<div style="left:312.0px;top:781.1px;font:7.5px/8.38px 'Liberation Sans',sans-serif;color:#111;white-space:pre;">0.0625</div>
<div style="left:336.5px;top:781.1px;font:7.5px/8.38px 'Liberation Sans',sans-serif;color:#111;white-space:pre;">0.125</div>
<div style="left:361.1px;top:781.1px;font:7.5px/8.38px 'Liberation Sans',sans-serif;color:#111;white-space:pre;">0.25</div>
<div style="left:385.6px;top:781.1px;font:7.5px/8.38px 'Liberation Sans',sans-serif;color:#111;white-space:pre;">0.5</div>
<div style="left:411.2px;top:781.1px;font:7.5px/8.38px 'Liberation Sans',sans-serif;color:#111;white-space:pre;">1</div>
<div style="left:433.6px;top:781.1px;font:7.5px/8.38px 'Liberation Sans',sans-serif;color:#111;white-space:pre;">2</div>
<div style="left:456.1px;top:781.1px;font:7.5px/8.38px 'Liberation Sans',sans-serif;color:#111;white-space:pre;">4</div>
<div style="left:478.5px;top:781.1px;font:7.5px/8.38px 'Liberation Sans',sans-serif;color:#111;white-space:pre;">8</div>
<div style="left:498.9px;top:781.1px;font:7.5px/8.38px 'Liberation Sans',sans-serif;color:#111;white-space:pre;">16</div>
<div style="left:521.3px;top:781.1px;font:7.5px/8.38px 'Liberation Sans',sans-serif;color:#111;white-space:pre;">32</div>
<div style="left:543.8px;top:781.1px;font:7.5px/8.38px 'Liberation Sans',sans-serif;color:#111;white-space:pre;">64</div>
<div style="left:564.1px;top:781.1px;font:7.5px/8.38px 'Liberation Sans',sans-serif;color:#111;white-space:pre;">128</div>
<div style="left:586.6px;top:781.1px;font:7.5px/8.38px 'Liberation Sans',sans-serif;color:#111;white-space:pre;">256</div>
<div style="left:609.0px;top:781.1px;font:7.5px/8.38px 'Liberation Sans',sans-serif;color:#111;white-space:pre;">512</div>
<div style="left:629.4px;top:781.1px;font:7.5px/8.38px 'Liberation Sans',sans-serif;color:#111;white-space:pre;">1024</div>
<div style="left:651.9px;top:781.1px;font:7.5px/8.38px 'Liberation Sans',sans-serif;color:#111;white-space:pre;">2048</div>
<div style="left:674.3px;top:781.1px;font:7.5px/8.38px 'Liberation Sans',sans-serif;color:#111;white-space:pre;">4096</div>
<div style="left:696.8px;top:781.1px;font:7.5px/8.38px 'Liberation Sans',sans-serif;color:#111;white-space:pre;">8192</div>
<div style="left:713.6px;top:781.1px;font:7.5px/8.38px 'Liberation Sans',sans-serif;color:#111;white-space:pre;">1.638E4</div>
<div style="left:801px;top:351px;width:556px;height:485px;box-sizing:border-box;border:1px solid #4f5358;border-radius:7px 7px 0 0;background:#d6e3f1;"></div>
<div style="left:802px;top:352px;width:554px;height:29px;border-radius:6px 6px 0 0;background:linear-gradient(#bfcfdf,#c7d6e5 40%,#d4e1ee 80%,#d9e5f2);"></div>
<div style="left:804px;top:352px;width:550px;height:1px;background:#f2f6fa;opacity:.85;"></div>
<svg style="left:811px;top:361px" width="16" height="16" viewBox="0 0 16 16" shape-rendering="crispEdges"><rect x="0" y="0" width="14" height="14" fill="#fff"/><path d="M.5 .5h13v13h-13z" stroke="#f55" fill="none" stroke-dasharray="1 1"/><rect x="2" y="2" width="10" height="4" fill="#0ee"/><rect x="2" y="7" width="10" height="4" fill="#0ee"/><path d="M3 4.500l2-1 2 .5 2-1 2 1" stroke="#000" fill="none" stroke-width=".8"/><path d="M2 6.500h10" stroke="#e11" stroke-dasharray="1 1"/><path d="M3 10c2-2 5-2 8-1.500" stroke="#c3c" fill="none"/><rect x="2" y="11" width="2" height="2" fill="#e11"/><path d="M14.500 1v14.200M1 14.500h14" stroke="#000" stroke-width="1.400"/></svg>
<div style="left:831px;top:364.0px;font:12px/13.40px 'Liberation Sans',sans-serif;color:#2b3038;white-space:pre;letter-spacing:0.09px;">Density Plot</div>
<div style="left:1251px;top:362px;width:30px;height:16px;box-sizing:border-box;border:1px solid #8a9cb8;border-radius:3px;background:linear-gradient(#d9e4f0,#c5d3e3);"></div>
<div style="left:1261.0px;top:371.0px;width:10px;height:4px;box-sizing:border-box;border:1px solid #555c66;border-radius:1px;background:#eef1f4;"></div>
<div style="left:1284px;top:362px;width:30px;height:16px;box-sizing:border-box;border:1px solid #8a9cb8;border-radius:3px;background:linear-gradient(#d9e4f0,#c5d3e3);"></div>
<div style="left:1294.0px;top:366.0px;width:10px;height:9px;box-sizing:border-box;border:1px solid #555c66;border-radius:1px;background:#eef1f4;"></div>
<div style="left:1297.0px;top:369.0px;width:4px;height:3px;box-sizing:border-box;border:1px solid #555c66;background:#cbd6e2;"></div>
<div style="left:1317px;top:362px;width:30px;height:16px;box-sizing:border-box;border:1px solid #8a9cb8;border-radius:3px;background:linear-gradient(#d9e4f0,#c5d3e3);"></div>
<svg style="left:1326.0px;top:365.0px;" width="12" height="10" viewBox="0 0 12 10"><path d="M1.5 1.5h3l1.5 2 1.5-2h3l-3 3.5 3 3.5h-3l-1.5-2-1.5 2h-3l3-3.5z" fill="#eef1f4" stroke="#555c66" stroke-width="1" stroke-linejoin="round"/></svg>
<div style="left:809px;top:381px;width:540px;height:447px;box-sizing:border-box;background:#fff;border:1px solid;border-color:#6b6b6b #f6f6f6 #f6f6f6 #6b6b6b;"></div>
<div style="left:811px;top:383px;width:20px;height:19px;background:#c8c8c8;"></div>
<div style="left:817px;top:387.1px;font:bold 13px/14.52px 'Liberation Sans',sans-serif;color:#000;white-space:pre;">1</div>
<svg style="left:815px;top:406px;" width="15" height="16" viewBox="0 0 15 16"><rect x=".5" y=".5" width="14" height="15" rx="3" fill="#e8e8e8" stroke="#555"/><rect x="3" y="7" width="9" height="7" fill="#1fd11f" stroke="#000"/><path d="M5 7v-2a2.500 2.500 0 0 1 5 0v2" fill="none" stroke="#000" stroke-width="1.300"/><path d="M6.500 9v3.500M8.500 9v3.500" stroke="#000"/></svg>
<svg style="left:899px;top:410px;" width="347" height="370" viewBox="0 0 347 370"><defs><radialGradient id="dg" cx=".5" cy=".5" r=".5"><stop offset="0.000" stop-color="#ff2400"/><stop offset="0.324" stop-color="#ff3600"/><stop offset="0.459" stop-color="#ff5a00"/><stop offset="0.554" stop-color="#ff8400"/><stop offset="0.635" stop-color="#ffb800"/><stop offset="0.703" stop-color="#fcee00"/><stop offset="0.764" stop-color="#a0ee00"/><stop offset="0.824" stop-color="#30e400"/><stop offset="0.892" stop-color="#00e850"/><stop offset="0.946" stop-color="#00f4a0"/><stop offset="1.000" stop-color="#00fce0"/></radialGradient><clipPath id="pc"><rect x="0" y="0" width="347" height="370"/></clipPath></defs><rect width="347" height="370" fill="#000"/><g clip-path="url(#pc)"><ellipse cx="189" cy="180" rx="124.3" ry="32.2" fill="url(#dg)" transform="rotate(-47.3 189 180)"/><path d="M343 0.5h1M313 14.5h1M296 16.5h1M296 17.5h1M319 18.5h1M314 19.5h1M303 22.5h1M332 22.5h1M334 25.5h1M297 26.5h1M315 26.5h1M342 27.5h1M287 28.5h1M306 31.5h1M312 31.5h1M295 32.5h1M276 34.5h1M296 34.5h1M304 36.5h1M309 36.5h1M326 36.5h1M283 37.5h1M291 37.5h1M293 37.5h1M294 38.5h1M300 39.5h1M302 39.5h1M310 39.5h1M300 40.5h1M333 40.5h1M335 40.5h1M268 41.5h1M284 41.5h1M325 41.5h1M330 41.5h1M336 41.5h1M266 42.5h1M282 42.5h1M286 42.5h1M297 42.5h1M301 42.5h1M311 42.5h2M273 43.5h1M279 43.5h1M301 43.5h1M305 43.5h2M319 43.5h2M278 44.5h1M297 44.5h1M325 44.5h1M343 44.5h1M254 45.5h1M268 45.5h1M293 45.5h1M297 45.5h1M302 45.5h1M318 45.5h1M322 45.5h1M260 46.5h1M262 46.5h1M289 46.5h1M303 46.5h1M319 46.5h2M334 46.5h1M342 46.5h1M264 47.5h1M281 47.5h1M315 47.5h2M282 48.5h1M311 48.5h1M315 48.5h1M259 49.5h1M279 49.5h1M317 49.5h1M319 49.5h1M250 50.5h1M315 50.5h1M266 51.5h1M271 51.5h1M311 51.5h1M317 51.5h1M336 51.5h1M260 52.5h1M265 52.5h2M271 52.5h1M310 52.5h1M313 52.5h1M319 52.5h1M266 53.5h1M270 53.5h1M267 54.5h1M256 55.5h1M263 55.5h1M259 56.5h1M327 56.5h1M314 57.5h1M328 57.5h2M255 58.5h1M324 58.5h1M317 59.5h1M256 60.5h1M329 60.5h1M250 61.5h1M313 61.5h1M335 61.5h1M316 62.5h1M321 62.5h1M323 62.5h1M346 62.5h1M314 63.5h1M249 64.5h1M252 64.5h1M314 64.5h1M321 64.5h1M323 64.5h1M232 65.5h1M318 65.5h1M241 66.5h1M234 68.5h1M336 68.5h1M235 69.5h1M241 69.5h1M318 69.5h1M241 70.5h1M318 70.5h1M234 72.5h1M314 72.5h1M235 73.5h1M314 73.5h1M318 73.5h1M327 73.5h1M236 75.5h1M220 76.5h1M222 76.5h1M232 76.5h1M227 78.5h1M231 78.5h1M312 78.5h1M314 78.5h1M228 80.5h1M214 81.5h1M227 81.5h1M316 81.5h1M220 82.5h1M224 82.5h1M318 82.5h1M311 83.5h1M313 83.5h1M222 84.5h1M217 85.5h1M318 85.5h1M320 85.5h1M212 86.5h1M311 86.5h1M311 87.5h1M309 88.5h1M212 91.5h2M309 91.5h1M311 91.5h1M312 94.5h1M205 95.5h1M205 96.5h1M305 96.5h1M189 97.5h1M306 97.5h3M312 97.5h1M205 98.5h1M306 98.5h2M313 98.5h1M302 100.5h1M186 101.5h1M199 101.5h1M311 102.5h1M199 103.5h1M301 104.5h1M199 105.5h1M300 105.5h1M307 105.5h1M197 106.5h1M188 108.5h1M303 108.5h1M179 110.5h1M187 110.5h1M193 110.5h1M189 111.5h1M296 112.5h1M297 113.5h1M302 113.5h1M184 115.5h1M294 115.5h1M296 115.5h1M181 116.5h2M187 116.5h1M293 117.5h1M295 118.5h1M294 119.5h1M181 120.5h1M178 122.5h1M300 123.5h1M170 125.5h1M177 125.5h1M173 126.5h1M170 127.5h1M174 127.5h1M172 128.5h1M288 128.5h1M294 130.5h1M286 131.5h1M162 132.5h1M289 133.5h2M159 134.5h1M283 135.5h1M287 135.5h1M291 135.5h1M158 136.5h1M164 137.5h1M286 137.5h1M285 140.5h1M293 140.5h1M158 141.5h1M141 142.5h1M159 142.5h1M161 142.5h1M150 143.5h1M154 143.5h1M153 144.5h1M155 144.5h2M158 144.5h1M289 144.5h1M157 146.5h1M279 146.5h1M277 147.5h1M279 147.5h1M151 148.5h1M274 148.5h1M277 148.5h1M277 150.5h1M152 151.5h1M139 153.5h1M143 153.5h1M272 154.5h1M280 154.5h1M140 155.5h1M148 156.5h1M142 157.5h1M267 158.5h1M140 160.5h1M143 160.5h1M128 162.5h1M269 162.5h1M137 165.5h1M129 166.5h1M261 166.5h1M125 167.5h1M138 167.5h1M273 167.5h1M263 169.5h1M134 170.5h1M260 170.5h1M258 171.5h1M260 171.5h1M114 172.5h1M132 172.5h1M131 173.5h1M259 173.5h1M116 174.5h1M256 174.5h1M259 174.5h1M112 175.5h1M122 175.5h1M125 175.5h1M127 177.5h1M109 178.5h1M253 178.5h1M253 179.5h1M268 179.5h1M123 181.5h1M117 182.5h1M124 182.5h1M251 182.5h1M249 184.5h2M122 185.5h1M249 185.5h1M115 186.5h1M122 186.5h1M244 186.5h1M122 187.5h1M118 189.5h2M247 190.5h1M246 191.5h1M239 192.5h1M244 192.5h1M107 193.5h1M115 193.5h1M114 194.5h1M93 198.5h1M111 198.5h1M237 198.5h1M240 198.5h1M110 200.5h2M109 203.5h1M231 204.5h1M244 207.5h1M227 208.5h1M101 211.5h1M234 211.5h1M229 212.5h1M221 214.5h1M98 215.5h1M100 215.5h1M218 215.5h2M227 217.5h1M214 221.5h1M216 223.5h1M92 224.5h1M90 225.5h1M209 225.5h1M79 226.5h1M206 228.5h1M77 229.5h1M84 231.5h1M203 231.5h1M208 232.5h1M208 233.5h1M88 234.5h1M200 235.5h1M212 235.5h2M202 236.5h1M74 238.5h1M198 238.5h1M202 238.5h1M211 238.5h1M195 239.5h1M79 242.5h1M70 243.5h1M76 243.5h1M195 243.5h1M78 245.5h1M73 246.5h1M73 247.5h1M76 248.5h1M188 248.5h1M189 249.5h1M194 249.5h1M203 249.5h1M73 250.5h1M185 251.5h1M72 254.5h1M74 254.5h1M179 254.5h1M177 255.5h1M181 255.5h1M60 258.5h1M65 258.5h1M71 258.5h1M179 258.5h1M175 259.5h1M183 259.5h1M61 260.5h1M174 260.5h1M65 261.5h1M70 261.5h1M68 262.5h1M71 262.5h1M73 262.5h1M170 262.5h1M73 263.5h1M68 264.5h1M63 265.5h1M54 266.5h1M61 267.5h1M165 267.5h1M64 268.5h2M166 268.5h1M64 270.5h1M70 270.5h1M160 270.5h1M68 271.5h1M62 272.5h1M65 272.5h1M157 273.5h1M163 273.5h1M51 274.5h1M61 274.5h2M155 274.5h1M60 275.5h1M153 275.5h1M157 275.5h1M165 275.5h1M52 276.5h1M66 276.5h1M60 277.5h1M152 277.5h1M54 278.5h1M155 278.5h1M64 279.5h1M147 280.5h1M146 281.5h1M145 283.5h1M149 283.5h1M56 284.5h1M58 284.5h1M61 284.5h1M65 284.5h1M146 284.5h1M60 285.5h2M65 285.5h1M146 287.5h1M52 288.5h1M61 288.5h1M42 289.5h1M64 289.5h1M62 290.5h2M133 290.5h1M138 290.5h1M141 290.5h1M58 291.5h1M131 291.5h1M50 292.5h1M56 292.5h1M64 292.5h1M132 292.5h1M54 293.5h1M131 293.5h2M146 293.5h1M64 294.5h1M129 294.5h1M64 295.5h1M127 295.5h1M56 296.5h1M133 297.5h1M29 299.5h1M128 299.5h1M61 300.5h1M39 301.5h2M127 301.5h1M47 302.5h1M63 302.5h2M48 303.5h1M53 303.5h1M58 304.5h1M27 305.5h1M65 305.5h1M108 305.5h1M129 305.5h1M111 306.5h1M114 306.5h1M123 306.5h1M66 307.5h2M62 308.5h1M65 308.5h1M101 308.5h1M103 308.5h1M101 309.5h1M103 309.5h1M112 309.5h1M46 310.5h1M95 310.5h1M97 310.5h1M118 310.5h1M51 311.5h1M58 311.5h1M60 311.5h2M102 311.5h1M63 312.5h2M126 312.5h1M65 313.5h1M67 313.5h1M85 313.5h1M103 313.5h1M50 314.5h1M64 314.5h1M80 314.5h1M85 314.5h1M92 314.5h1M97 314.5h1M125 314.5h1M87 315.5h1M37 316.5h1M45 316.5h1M58 316.5h1M63 316.5h2M79 316.5h1M61 317.5h1M77 317.5h1M63 318.5h1M85 318.5h1M101 318.5h1M45 319.5h1M82 319.5h1M90 319.5h1M93 319.5h1M96 319.5h1M109 319.5h1M55 320.5h1M82 320.5h1M88 320.5h1M98 320.5h1M55 321.5h1M80 321.5h1M88 321.5h1M100 321.5h1M49 322.5h1M74 322.5h1M80 322.5h1M86 322.5h1M99 322.5h1M43 323.5h1M77 324.5h1M51 325.5h1M74 325.5h1M71 326.5h1M70 327.5h1M53 329.5h1M44 330.5h1M72 330.5h1M97 330.5h1M47 331.5h1M54 333.5h1M38 335.5h1M56 335.5h1M75 335.5h1M34 336.5h1M57 337.5h1M23 338.5h1M45 340.5h1M82 340.5h1M54 345.5h1M30 346.5h1M48 347.5h1M49 348.5h1M51 352.5h1" stroke="#2a6cff" stroke-width="1" fill="none" shape-rendering="crispEdges"/><path d="M331 1.5h1M336 7.5h1M307 8.5h1M336 12.5h1M322 16.5h1M324 16.5h1M296 22.5h1M330 22.5h1M284 23.5h1M313 25.5h1M285 26.5h1M317 26.5h1M345 28.5h1M283 29.5h1M307 30.5h1M328 31.5h1M277 32.5h1M289 32.5h1M284 33.5h1M300 34.5h1M323 37.5h1M283 39.5h1M328 40.5h1M325 42.5h1M327 43.5h1M269 44.5h1M270 46.5h1M248 50.5h1M325 52.5h1M326 53.5h1M335 55.5h1M249 59.5h1M327 59.5h1M334 72.5h1M329 73.5h1M325 76.5h1M319 80.5h1M217 81.5h1M319 86.5h1M209 89.5h1M186 95.5h1M323 95.5h1M315 96.5h1M318 97.5h1M317 103.5h1M192 104.5h1M180 107.5h1M169 111.5h1M184 111.5h1M304 113.5h1M302 114.5h1M178 117.5h1M305 119.5h1M303 120.5h1M164 122.5h1M171 122.5h1M314 122.5h1M169 127.5h1M294 127.5h1M157 131.5h1M305 134.5h1M288 135.5h1M295 138.5h1M156 140.5h1M293 146.5h1M288 149.5h1M138 153.5h1M136 159.5h1M125 165.5h1M130 167.5h1M129 168.5h1M264 169.5h1M119 180.5h1M258 181.5h1M260 182.5h1M256 183.5h1M255 186.5h1M254 189.5h1M112 192.5h1M245 192.5h1M250 194.5h1M255 194.5h1M108 197.5h1M98 200.5h1M239 200.5h1M104 201.5h1M237 207.5h1M235 208.5h1M86 211.5h1M241 214.5h1M81 216.5h1M223 218.5h1M224 222.5h1M228 222.5h1M81 223.5h1M217 223.5h1M220 223.5h1M233 223.5h1M86 225.5h1M216 225.5h1M85 227.5h1M217 227.5h1M226 230.5h1M203 239.5h1M202 241.5h1M206 241.5h1M209 242.5h1M193 247.5h1M69 249.5h1M196 249.5h1M194 256.5h1M183 257.5h1M189 257.5h1M55 260.5h1M59 262.5h1M175 266.5h1M185 268.5h1M170 272.5h1M55 274.5h1M47 275.5h1M59 279.5h1M157 280.5h1M165 281.5h1M164 284.5h1M151 285.5h1M144 290.5h1M142 291.5h1M46 293.5h1M34 295.5h1M38 296.5h1M49 296.5h1M132 298.5h1M130 300.5h1M130 301.5h1M38 304.5h1M52 307.5h1M122 308.5h1M46 309.5h1M49 309.5h1M126 310.5h1M114 315.5h1M109 317.5h1M104 320.5h1M93 321.5h1M78 325.5h1M91 325.5h1M47 326.5h1M93 326.5h1M96 326.5h1M66 327.5h1M69 327.5h1M61 330.5h1M98 332.5h1M102 333.5h1M85 334.5h1M62 341.5h1M50 348.5h1M65 351.5h1M34 353.5h1" stroke="#3038ff" stroke-width="1" fill="none" shape-rendering="crispEdges"/><path d="M288 39.5h1M293 39.5h1M303 39.5h1M306 39.5h1M318 39.5h1M321 40.5h1M285 43.5h1M287 43.5h1M296 43.5h1M278 45.5h1M281 45.5h1M288 46.5h1M296 46.5h1M311 46.5h1M293 47.5h1M311 47.5h1M314 48.5h1M319 48.5h1M300 49.5h1M300 50.5h2M276 51.5h1M289 51.5h1M312 51.5h1M263 52.5h1M268 52.5h1M288 52.5h1M311 52.5h1M285 53.5h1M298 53.5h1M306 54.5h1M283 55.5h2M300 55.5h1M310 55.5h1M315 55.5h1M261 56.5h1M268 56.5h1M277 56.5h1M281 56.5h1M317 56.5h1M264 57.5h1M275 57.5h1M281 57.5h1M289 57.5h1M298 57.5h1M303 57.5h1M311 57.5h1M283 58.5h1M288 58.5h1M295 58.5h1M306 58.5h1M314 58.5h1M281 59.5h1M305 59.5h1M311 59.5h1M259 60.5h1M278 60.5h1M294 60.5h3M300 60.5h1M263 61.5h1M271 61.5h1M258 62.5h1M260 62.5h1M299 62.5h2M320 62.5h1M262 63.5h1M255 64.5h1M266 64.5h1M304 64.5h1M307 64.5h1M317 64.5h1M301 65.5h1M303 65.5h1M245 66.5h1M257 66.5h1M302 66.5h1M318 66.5h1M247 67.5h1M249 67.5h1M310 67.5h1M246 68.5h1M317 68.5h1M245 70.5h1M306 70.5h1M310 70.5h1M241 71.5h1M249 71.5h2M252 71.5h1M244 72.5h1M301 72.5h1M310 72.5h1M312 72.5h2M245 73.5h1M243 74.5h1M233 75.5h1M305 75.5h1M316 75.5h1M233 76.5h2M240 76.5h2M313 76.5h1M237 77.5h1M308 77.5h1M225 78.5h1M237 78.5h1M301 78.5h1M304 78.5h1M232 79.5h1M306 79.5h1M223 80.5h1M231 80.5h1M233 80.5h1M302 80.5h1M305 80.5h1M310 81.5h1M300 84.5h1M302 84.5h1M305 84.5h1M315 84.5h1M219 85.5h1M228 85.5h1M230 85.5h1M215 86.5h1M221 86.5h1M226 86.5h2M309 86.5h1M227 87.5h1M314 87.5h1M225 88.5h2M300 88.5h1M310 88.5h1M214 90.5h1M219 90.5h1M302 90.5h1M220 91.5h1M300 91.5h1M213 92.5h1M216 92.5h1M219 92.5h3M300 92.5h1M219 93.5h1M209 94.5h1M213 94.5h1M299 94.5h1M298 95.5h1M217 96.5h1M296 96.5h1M306 96.5h1M215 97.5h1M298 97.5h1M200 98.5h1M206 99.5h2M211 99.5h1M295 100.5h1M301 100.5h1M198 101.5h1M205 101.5h1M198 102.5h1M201 102.5h1M205 102.5h2M294 102.5h1M297 102.5h1M204 104.5h1M294 104.5h1M301 105.5h1M306 105.5h1M292 106.5h2M200 108.5h1M296 108.5h1M190 109.5h1M196 110.5h1M292 112.5h1M189 113.5h1M289 113.5h1M191 114.5h1M193 114.5h1M289 114.5h1M183 118.5h1M294 118.5h1M185 121.5h1M284 122.5h1M289 123.5h1M283 124.5h1M182 125.5h1M284 125.5h1M177 126.5h1M181 126.5h1M180 127.5h1M180 128.5h1M172 129.5h1M176 129.5h1M178 129.5h1M283 129.5h1M173 131.5h1M284 132.5h1M283 133.5h1M165 135.5h1M279 135.5h1M281 135.5h1M280 136.5h1M165 137.5h1M279 138.5h1M169 139.5h1M279 141.5h1M155 143.5h1M165 143.5h1M273 144.5h1M160 146.5h3M269 146.5h1M271 146.5h2M151 147.5h1M159 147.5h1M161 147.5h1M268 147.5h2M273 149.5h1M153 150.5h1M272 150.5h1M273 151.5h1M157 152.5h1M266 152.5h1M152 153.5h1M274 153.5h1M263 155.5h1M143 156.5h1M262 156.5h1M266 156.5h1M144 157.5h1M151 157.5h2M269 157.5h1M144 158.5h1M264 159.5h1M261 160.5h1M261 161.5h1M259 162.5h1M144 164.5h2M263 165.5h1M141 166.5h1M257 166.5h2M260 166.5h1M136 167.5h1M139 167.5h1M143 167.5h1M135 168.5h1M260 168.5h1M141 169.5h1M258 172.5h1M138 174.5h1M248 174.5h1M253 174.5h1M131 175.5h1M251 175.5h1M258 175.5h1M248 176.5h1M256 176.5h1M135 177.5h1M251 177.5h1M129 180.5h1M243 180.5h1M243 181.5h1M120 183.5h1M244 183.5h1M251 183.5h1M245 184.5h1M126 185.5h1M128 185.5h1M241 185.5h1M124 187.5h1M127 188.5h1M237 188.5h1M241 188.5h1M237 190.5h1M242 190.5h1M116 191.5h1M120 192.5h1M236 192.5h1M235 193.5h1M119 195.5h1M116 197.5h1M120 197.5h1M230 197.5h1M114 198.5h1M119 198.5h1M109 200.5h1M114 200.5h3M229 200.5h1M231 200.5h1M110 201.5h1M114 201.5h1M116 201.5h1M227 201.5h1M236 201.5h1M113 203.5h1M227 203.5h1M108 204.5h1M225 204.5h1M223 205.5h1M228 205.5h1M109 206.5h1M109 207.5h1M220 207.5h1M219 209.5h1M105 210.5h1M108 210.5h1M218 211.5h1M216 212.5h1M221 213.5h1M213 214.5h1M216 214.5h1M223 214.5h1M106 215.5h1M106 216.5h1M96 217.5h1M98 217.5h1M101 220.5h1M103 220.5h1M215 222.5h1M98 223.5h1M96 226.5h1M204 226.5h1M93 227.5h1M91 228.5h1M96 228.5h1M91 229.5h2M199 229.5h1M94 230.5h1M200 230.5h1M93 231.5h1M89 233.5h1M93 233.5h1M94 234.5h1M86 235.5h1M192 235.5h2M198 236.5h1M196 237.5h1M201 237.5h1M92 239.5h1M196 239.5h1M186 241.5h1M189 242.5h1M84 243.5h1M88 243.5h1M189 243.5h1M193 243.5h1M89 244.5h1M189 244.5h1M79 245.5h1M180 246.5h1M79 247.5h1M183 247.5h1M79 248.5h1M177 249.5h1M181 249.5h1M176 250.5h1M78 251.5h1M175 251.5h1M76 253.5h1M176 253.5h1M184 253.5h1M80 254.5h1M171 255.5h1M173 255.5h1M80 256.5h1M172 256.5h2M72 257.5h1M83 257.5h1M171 257.5h1M81 258.5h1M169 258.5h1M172 259.5h2M167 260.5h1M75 262.5h1M162 262.5h1M75 263.5h1M164 263.5h1M73 264.5h1M159 264.5h1M165 264.5h1M79 265.5h1M72 266.5h1M77 266.5h1M162 266.5h1M164 266.5h1M79 267.5h1M157 267.5h1M73 268.5h1M78 268.5h1M163 268.5h1M165 268.5h1M72 270.5h1M76 271.5h1M152 271.5h1M75 273.5h1M77 273.5h1M68 274.5h1M147 274.5h1M156 274.5h1M151 275.5h1M65 276.5h1M73 276.5h1M146 276.5h1M142 277.5h1M150 277.5h1M154 277.5h1M69 278.5h1M141 278.5h1M146 278.5h1M154 278.5h1M75 279.5h1M140 279.5h1M66 280.5h1M66 282.5h1M75 283.5h1M133 283.5h1M141 283.5h1M146 283.5h1M147 284.5h1M63 285.5h1M68 285.5h1M71 285.5h1M66 286.5h1M70 286.5h1M65 287.5h1M74 287.5h1M76 287.5h1M131 287.5h1M65 288.5h1M72 289.5h1M123 289.5h1M128 289.5h1M123 290.5h1M126 290.5h1M71 291.5h1M69 292.5h1M77 292.5h1M121 292.5h1M69 293.5h1M117 293.5h1M126 293.5h1M115 294.5h1M120 294.5h1M125 294.5h1M127 294.5h1M68 295.5h1M77 295.5h1M114 295.5h1M119 295.5h1M128 295.5h1M67 296.5h1M71 296.5h1M110 296.5h1M115 296.5h1M120 296.5h1M127 296.5h1M67 297.5h1M107 297.5h1M116 297.5h1M120 297.5h1M62 298.5h2M81 298.5h1M122 298.5h1M77 299.5h1M120 299.5h1M67 300.5h2M77 300.5h1M93 300.5h1M95 300.5h1M112 300.5h1M114 300.5h1M122 300.5h1M120 301.5h1M70 302.5h1M80 302.5h3M56 303.5h1M71 303.5h1M73 303.5h1M76 303.5h1M93 303.5h1M95 303.5h1M120 303.5h1M62 304.5h1M67 304.5h1M76 304.5h1M99 304.5h1M102 304.5h1M107 304.5h1M68 305.5h1M74 305.5h1M77 305.5h1M89 305.5h2M99 305.5h1M96 306.5h1M64 307.5h1M76 307.5h1M97 307.5h1M110 307.5h1M57 308.5h1M72 308.5h1M88 308.5h1M92 308.5h1M65 309.5h1M98 309.5h1M102 309.5h1M75 310.5h1M85 310.5h1M74 311.5h1M93 311.5h1M107 311.5h1M68 312.5h1M70 312.5h1M84 313.5h1M58 314.5h1M81 314.5h1M61 315.5h1M68 315.5h1M75 315.5h1M86 315.5h1M98 315.5h1M60 316.5h1M62 316.5h1M80 316.5h1M85 316.5h1M96 317.5h1M98 317.5h1M59 318.5h1M88 318.5h1M84 320.5h2M82 321.5h1M75 323.5h1" stroke="#00a8ff" stroke-width="1" fill="none" shape-rendering="crispEdges"/><path d="M290 47.5h1M299 48.5h1M297 49.5h1M282 50.5h1M303 50.5h1M306 50.5h2M278 51.5h1M283 51.5h1M299 51.5h1M305 51.5h1M286 52.5h1M291 52.5h1M301 52.5h1M306 52.5h1M309 52.5h1M277 53.5h1M308 53.5h1M280 54.5h1M276 55.5h1M295 55.5h1M269 56.5h2M291 56.5h1M300 56.5h1M304 56.5h1M269 57.5h1M276 57.5h1M278 57.5h1M285 57.5h1M304 57.5h2M263 58.5h1M271 58.5h1M274 58.5h2M282 58.5h1M285 58.5h1M298 58.5h1M261 59.5h1M274 59.5h1M277 59.5h1M292 59.5h1M270 60.5h1M302 60.5h2M310 60.5h1M258 61.5h1M267 61.5h1M272 61.5h1M296 61.5h1M300 61.5h1M307 61.5h1M263 62.5h1M305 62.5h1M256 63.5h1M260 63.5h1M266 63.5h1M261 64.5h1M265 64.5h1M302 64.5h1M306 64.5h1M264 65.5h1M305 65.5h1M260 66.5h1M300 67.5h1M254 69.5h1M312 69.5h1M248 70.5h1M242 71.5h1M248 71.5h1M301 71.5h1M304 71.5h1M308 71.5h1M249 72.5h2M307 72.5h1M247 73.5h1M249 73.5h1M244 74.5h1M304 74.5h1M237 75.5h1M242 75.5h1M245 75.5h2M303 75.5h1M306 75.5h1M239 76.5h1M301 76.5h1M303 76.5h2M242 77.5h1M307 77.5h1M305 78.5h1M303 79.5h1M237 80.5h1M308 80.5h1M301 81.5h1M301 85.5h1M300 86.5h2M227 88.5h1M302 89.5h1M301 90.5h1M298 92.5h1M217 93.5h1M217 94.5h1M304 94.5h1M217 95.5h1M299 95.5h1M302 96.5h1M211 97.5h1M298 98.5h1M213 99.5h1M209 100.5h1M211 100.5h1M209 102.5h1M207 103.5h1M294 103.5h1M298 105.5h1M195 110.5h1M295 110.5h1M295 111.5h1M197 112.5h1M290 112.5h1M196 113.5h1M290 113.5h1M192 114.5h1M291 114.5h1M193 115.5h1M288 115.5h2M287 116.5h2M188 117.5h1M287 117.5h1M290 117.5h1M190 119.5h1M286 119.5h1M285 120.5h1M288 120.5h1M181 122.5h1M285 123.5h1M182 124.5h1M183 125.5h1M286 125.5h1M182 126.5h1M283 126.5h1M281 128.5h1M284 128.5h1M178 130.5h1M279 130.5h1M177 131.5h1M173 134.5h1M281 134.5h1M276 135.5h1M279 137.5h1M274 138.5h1M166 140.5h1M276 141.5h1M164 144.5h1M271 144.5h1M271 145.5h1M270 146.5h1M159 148.5h1M157 149.5h1M154 151.5h1M267 151.5h1M270 151.5h1M155 153.5h1M153 154.5h1M155 154.5h1M263 154.5h3M154 155.5h1M148 158.5h1M147 161.5h1M143 163.5h1M256 164.5h2M146 165.5h1M259 165.5h1M144 167.5h1M255 167.5h1M137 170.5h1M135 172.5h1M140 172.5h1M137 174.5h1M249 174.5h1M252 174.5h1M131 176.5h2M245 178.5h1M133 179.5h1M248 179.5h1M130 180.5h2M244 180.5h1M131 181.5h1M242 182.5h1M125 186.5h1M125 189.5h1M123 190.5h1M121 191.5h1M234 193.5h1M236 194.5h1M121 195.5h1M234 195.5h1M116 198.5h1M232 198.5h1M115 199.5h1M117 199.5h2M230 201.5h1M114 202.5h1M115 203.5h1M109 205.5h1M225 205.5h1M111 207.5h1M221 207.5h1M109 208.5h1M223 208.5h1M110 210.5h1M219 210.5h1M217 211.5h1M219 211.5h2M109 212.5h1M215 212.5h1M105 214.5h1M105 215.5h1M215 216.5h1M213 217.5h1M213 218.5h1M209 219.5h1M212 219.5h1M102 221.5h2M101 222.5h1M207 222.5h1M101 223.5h1M97 225.5h1M98 227.5h2M204 227.5h1M97 228.5h1M199 230.5h1M203 230.5h1M201 231.5h1M93 232.5h2M197 232.5h1M200 232.5h1M194 234.5h1M196 234.5h2M94 236.5h1M88 237.5h1M92 238.5h1M190 238.5h2M189 239.5h2M191 240.5h1M87 241.5h1M190 241.5h1M185 243.5h2M84 244.5h1M187 244.5h1M184 245.5h1M186 245.5h1M85 248.5h1M177 251.5h1M83 252.5h1M171 254.5h1M175 254.5h1M80 255.5h1M83 255.5h1M170 257.5h1M173 257.5h1M76 258.5h1M78 258.5h1M82 259.5h1M167 259.5h2M80 260.5h1M168 260.5h1M162 263.5h1M159 265.5h1M79 268.5h1M72 269.5h2M78 269.5h1M155 269.5h1M152 270.5h1M74 271.5h1M149 272.5h1M148 273.5h1M150 273.5h2M148 274.5h2M76 275.5h1M145 277.5h1M74 278.5h1M147 278.5h1M141 279.5h1M146 279.5h1M72 280.5h2M71 281.5h1M136 281.5h1M140 281.5h1M68 282.5h1M71 282.5h1M136 282.5h2M69 283.5h3M72 284.5h1M76 284.5h1M75 285.5h1M74 286.5h1M73 287.5h1M68 288.5h1M74 288.5h1M67 290.5h1M74 290.5h1M76 290.5h1M70 291.5h1M65 292.5h1M70 292.5h1M72 292.5h2M118 293.5h1M72 294.5h1M126 294.5h1M65 295.5h1M70 295.5h2M116 295.5h1M112 296.5h2M116 296.5h1M109 297.5h1M113 297.5h1M74 298.5h1M80 298.5h1M103 298.5h2M107 298.5h1M115 298.5h1M69 299.5h1M76 299.5h1M79 299.5h1M81 299.5h1M88 300.5h1M94 300.5h1M97 300.5h1M101 300.5h1M105 300.5h1M80 301.5h1M90 301.5h1M94 301.5h1M102 301.5h2M78 302.5h1M89 302.5h1M91 302.5h1M100 302.5h1M104 302.5h1M94 303.5h1M109 303.5h1M80 304.5h2M86 304.5h1M92 304.5h1M98 304.5h1M72 305.5h1M81 305.5h1M87 305.5h1M106 305.5h1M83 306.5h1M98 306.5h1M88 307.5h1M85 308.5h1M89 309.5h1M91 309.5h1M97 309.5h1M70 310.5h1M82 310.5h1M90 310.5h2M75 311.5h1M82 311.5h1M88 311.5h1" stroke="#2088ff" stroke-width="1" fill="none" shape-rendering="crispEdges"/><path d="M292 47.5h1M295 47.5h1M295 49.5h1M285 50.5h1M284 51.5h1M301 51.5h1M275 52.5h1M277 52.5h1M283 52.5h1M289 52.5h2M292 52.5h1M298 52.5h1M289 53.5h1M307 53.5h1M271 54.5h1M274 54.5h1M281 54.5h1M289 54.5h2M293 54.5h1M309 54.5h1M298 55.5h1M274 56.5h1M276 56.5h1M289 56.5h2M303 56.5h1M308 56.5h1M282 57.5h1M291 57.5h1M302 57.5h1M310 57.5h1M277 58.5h1M296 58.5h2M300 58.5h1M303 58.5h1M307 58.5h1M266 59.5h1M289 59.5h1M295 59.5h1M262 60.5h1M266 60.5h2M277 60.5h1M287 60.5h1M304 60.5h1M268 61.5h1M279 61.5h1M287 61.5h1M293 61.5h1M297 61.5h1M259 62.5h1M269 62.5h1M274 62.5h1M276 62.5h1M283 62.5h1M297 62.5h1M257 63.5h1M265 63.5h1M269 63.5h1M298 63.5h1M307 63.5h1M256 64.5h1M267 64.5h1M277 64.5h1M279 64.5h1M282 64.5h1M287 64.5h1M299 64.5h1M301 64.5h1M303 64.5h1M257 65.5h1M261 65.5h1M277 65.5h1M281 65.5h2M288 65.5h1M290 65.5h1M295 65.5h2M300 65.5h1M306 65.5h1M258 66.5h1M276 66.5h1M279 66.5h1M281 66.5h1M304 66.5h1M306 66.5h1M308 66.5h1M312 66.5h1M260 67.5h1M265 67.5h2M272 67.5h1M298 67.5h1M252 68.5h1M261 68.5h1M265 68.5h1M267 68.5h1M273 68.5h1M276 68.5h1M284 68.5h1M297 68.5h1M251 69.5h2M264 69.5h1M267 69.5h1M270 69.5h1M273 69.5h1M306 69.5h1M310 69.5h1M246 70.5h1M254 70.5h1M263 70.5h1M266 70.5h1M272 70.5h1M278 70.5h1M291 70.5h1M296 70.5h1M244 71.5h1M254 71.5h1M259 71.5h2M276 71.5h1M289 71.5h1M291 71.5h3M295 71.5h1M302 71.5h1M305 71.5h1M309 71.5h1M253 72.5h1M255 72.5h1M275 72.5h1M283 72.5h1M287 72.5h1M297 72.5h1M302 72.5h1M305 72.5h1M309 72.5h1M243 73.5h1M246 73.5h1M254 73.5h1M258 73.5h1M264 73.5h1M266 73.5h2M270 73.5h2M274 73.5h3M289 73.5h1M296 73.5h1M261 74.5h2M264 74.5h1M269 74.5h1M284 74.5h1M289 74.5h1M301 74.5h1M303 74.5h1M305 74.5h1M244 75.5h1M253 75.5h1M257 75.5h2M264 75.5h1M269 75.5h1M276 75.5h1M278 75.5h1M258 76.5h1M283 76.5h1M295 76.5h3M299 76.5h1M245 77.5h1M261 77.5h1M281 77.5h1M288 77.5h3M305 77.5h1M309 77.5h1M238 78.5h2M252 78.5h1M257 78.5h1M282 78.5h1M288 78.5h2M239 79.5h1M252 79.5h1M283 79.5h1M286 79.5h1M290 79.5h1M296 79.5h1M299 79.5h1M246 80.5h1M254 80.5h1M287 80.5h1M292 80.5h1M296 80.5h1M301 80.5h1M303 80.5h1M228 81.5h1M246 81.5h1M251 81.5h2M284 81.5h1M297 81.5h1M300 81.5h1M233 82.5h1M235 82.5h1M243 82.5h1M245 82.5h1M296 82.5h1M298 83.5h1M304 83.5h2M231 84.5h1M234 84.5h1M236 84.5h1M243 84.5h1M245 84.5h1M286 84.5h1M292 84.5h1M299 84.5h1M301 84.5h1M225 85.5h1M227 85.5h1M237 85.5h1M245 85.5h1M304 85.5h1M234 86.5h1M237 86.5h1M240 86.5h2M287 86.5h2M291 86.5h2M297 86.5h1M307 86.5h1M222 87.5h1M228 87.5h1M232 87.5h1M230 88.5h1M297 88.5h1M302 88.5h2M236 89.5h1M289 89.5h1M292 89.5h1M297 89.5h1M233 90.5h3M237 90.5h1M289 90.5h1M292 90.5h1M296 90.5h1M226 91.5h2M229 91.5h1M288 91.5h1M303 91.5h1M218 92.5h1M230 92.5h1M233 92.5h1M289 92.5h1M295 92.5h1M224 93.5h1M228 93.5h1M230 93.5h1M286 93.5h1M300 93.5h1M215 94.5h1M218 94.5h1M293 94.5h1M222 95.5h1M225 95.5h1M228 95.5h1M291 95.5h1M220 96.5h2M225 96.5h1M293 96.5h1M300 96.5h1M214 97.5h1M217 97.5h1M222 97.5h1M289 97.5h1M213 98.5h1M218 98.5h2M222 98.5h1M292 98.5h1M215 99.5h1M290 99.5h1M293 99.5h1M299 99.5h1M213 100.5h1M288 100.5h1M296 100.5h4M212 101.5h1M214 101.5h1M216 102.5h1M298 102.5h1M205 103.5h2M213 103.5h1M286 103.5h1M296 103.5h1M206 104.5h1M286 104.5h2M290 104.5h1M299 104.5h1M206 105.5h1M284 105.5h1M292 105.5h1M297 105.5h1M199 106.5h1M289 106.5h1M295 106.5h2M198 107.5h1M209 107.5h1M284 107.5h2M198 108.5h1M206 108.5h1M211 108.5h1M283 108.5h1M288 108.5h1M295 108.5h1M207 109.5h2M288 109.5h1M294 109.5h1M287 110.5h1M296 110.5h1M280 111.5h1M285 111.5h1M288 111.5h1M290 111.5h1M296 111.5h1M199 112.5h1M203 112.5h1M207 112.5h1M281 112.5h1M286 112.5h1M289 112.5h1M191 113.5h1M197 113.5h2M202 113.5h1M279 113.5h1M292 113.5h1M201 114.5h1M203 114.5h1M286 114.5h1M192 115.5h1M280 115.5h1M282 115.5h1M285 115.5h1M192 116.5h1M198 116.5h1M200 116.5h3M193 117.5h1M201 117.5h1M278 117.5h1M185 118.5h1M279 118.5h1M281 118.5h1M187 119.5h1M198 119.5h1M279 119.5h1M193 120.5h1M195 120.5h1M278 120.5h2M194 121.5h1M279 121.5h1M286 121.5h1M290 121.5h1M190 122.5h1M192 122.5h1M276 122.5h2M280 122.5h1M183 123.5h1M288 123.5h1M181 124.5h1M193 124.5h1M280 124.5h1M189 125.5h1M191 125.5h1M274 125.5h2M280 125.5h1M287 125.5h1M185 126.5h1M190 126.5h1M184 127.5h1M276 127.5h1M181 128.5h1M275 128.5h2M279 128.5h1M188 129.5h1M278 129.5h1M182 130.5h1M187 130.5h1M281 130.5h1M182 131.5h1M274 131.5h1M179 132.5h1M276 132.5h1M278 132.5h1M281 132.5h1M174 133.5h1M182 133.5h1M279 133.5h1M270 134.5h1M175 135.5h2M182 135.5h1M268 135.5h1M171 136.5h1M179 136.5h2M269 136.5h2M273 136.5h1M277 136.5h2M166 137.5h2M172 137.5h1M268 137.5h1M166 138.5h1M178 138.5h1M165 139.5h1M272 139.5h1M165 140.5h1M169 140.5h1M266 140.5h1M270 140.5h1M165 141.5h1M170 141.5h2M266 141.5h1M274 141.5h1M166 142.5h1M171 142.5h2M175 142.5h1M164 143.5h1M166 143.5h2M169 143.5h1M172 143.5h1M276 143.5h1M168 144.5h1M172 144.5h1M160 145.5h1M168 145.5h1M263 145.5h2M274 145.5h1M266 146.5h1M160 147.5h1M260 147.5h1M164 148.5h1M168 148.5h1M264 148.5h1M161 149.5h1M165 149.5h1M264 149.5h1M156 150.5h1M159 150.5h1M166 150.5h1M258 150.5h1M260 150.5h1M158 151.5h1M165 151.5h1M153 152.5h1M160 152.5h1M153 153.5h1M159 153.5h2M264 153.5h1M158 154.5h1M257 154.5h1M259 154.5h1M150 155.5h1M161 155.5h1M258 155.5h1M264 156.5h1M148 157.5h1M154 157.5h1M261 157.5h1M257 158.5h1M156 159.5h1M253 159.5h1M256 159.5h1M150 160.5h1M154 160.5h2M157 160.5h1M251 160.5h2M258 160.5h1M260 160.5h1M144 161.5h1M156 161.5h1M251 161.5h1M258 161.5h1M153 162.5h1M256 162.5h1M260 162.5h1M144 163.5h1M152 163.5h1M256 163.5h1M151 164.5h1M144 165.5h2M250 165.5h1M254 165.5h1M257 165.5h1M140 166.5h1M150 166.5h2M246 167.5h2M249 167.5h1M148 168.5h1M258 168.5h1M245 169.5h1M139 170.5h1M141 170.5h2M149 170.5h1M245 170.5h1M249 170.5h1M142 171.5h1M146 171.5h1M148 171.5h1M247 171.5h1M139 172.5h1M145 172.5h1M243 172.5h1M139 173.5h1M242 173.5h1M249 173.5h1M135 174.5h1M138 175.5h1M140 175.5h1M145 175.5h1M134 176.5h1M144 176.5h1M133 177.5h1M143 177.5h1M250 177.5h1M131 178.5h1M241 178.5h1M135 179.5h1M238 179.5h1M242 179.5h1M136 180.5h2M245 180.5h1M136 181.5h1M139 181.5h1M237 181.5h1M127 182.5h1M130 182.5h1M134 182.5h1M235 182.5h1M239 182.5h1M128 183.5h1M131 183.5h1M133 183.5h1M137 183.5h1M234 183.5h1M239 183.5h1M127 184.5h2M236 184.5h1M233 185.5h2M237 185.5h1M242 185.5h1M134 186.5h1M231 186.5h1M234 186.5h1M237 186.5h1M241 186.5h1M231 187.5h1M241 187.5h1M126 188.5h1M133 188.5h1M233 188.5h1M239 188.5h1M229 189.5h1M237 189.5h1M128 190.5h1M131 190.5h1M228 190.5h1M120 191.5h1M127 191.5h1M132 191.5h1M228 191.5h2M233 191.5h1M127 192.5h1M129 192.5h1M228 192.5h1M234 192.5h1M129 193.5h1M226 193.5h1M233 193.5h1M236 193.5h1M128 194.5h1M232 194.5h2M125 195.5h2M128 195.5h2M225 196.5h1M230 196.5h2M118 197.5h1M124 197.5h1M126 197.5h1M228 197.5h1M117 198.5h1M124 198.5h1M222 198.5h1M225 198.5h1M126 199.5h1M124 200.5h1M120 201.5h1M124 201.5h1M218 201.5h1M118 202.5h1M219 202.5h2M226 202.5h1M121 203.5h1M217 203.5h1M221 203.5h1M119 204.5h2M217 204.5h1M220 204.5h1M223 204.5h1M214 205.5h3M218 205.5h1M224 205.5h1M226 205.5h2M108 206.5h1M110 206.5h2M117 206.5h1M215 206.5h1M220 206.5h1M108 207.5h1M112 207.5h1M212 207.5h1M110 208.5h2M118 208.5h1M211 208.5h1M213 208.5h2M218 208.5h1M224 208.5h1M112 209.5h1M216 209.5h1M220 209.5h1M114 210.5h1M116 210.5h1M209 210.5h1M115 211.5h1M212 211.5h1M114 212.5h3M208 212.5h1M115 214.5h1M208 214.5h2M114 215.5h2M209 215.5h2M111 216.5h1M206 216.5h1M205 217.5h1M107 218.5h1M113 218.5h1M202 218.5h1M205 218.5h1M209 218.5h1M109 219.5h1M111 219.5h2M201 219.5h1M106 220.5h1M101 221.5h1M104 221.5h1M198 221.5h1M202 221.5h1M204 221.5h1M209 221.5h1M98 222.5h1M99 223.5h1M102 223.5h1M109 223.5h1M198 223.5h1M206 223.5h1M96 224.5h1M99 224.5h1M195 224.5h1M102 225.5h1M197 225.5h1M205 225.5h1M107 226.5h1M193 226.5h1M196 226.5h1M205 226.5h3M107 227.5h1M105 228.5h1M195 228.5h2M204 228.5h1M97 229.5h1M104 229.5h1M190 229.5h1M95 230.5h1M97 230.5h1M101 230.5h1M189 230.5h2M194 230.5h1M191 231.5h1M197 231.5h1M95 232.5h2M101 232.5h1M189 232.5h1M191 232.5h1M92 233.5h1M101 233.5h1M188 234.5h1M193 234.5h1M90 235.5h1M95 235.5h1M99 235.5h3M90 236.5h1M100 236.5h1M195 236.5h1M101 237.5h1M182 237.5h1M193 237.5h1M88 238.5h1M184 238.5h1M189 238.5h1M86 239.5h1M90 239.5h1M94 239.5h1M97 239.5h1M100 239.5h1M179 239.5h2M194 239.5h1M184 240.5h1M186 240.5h1M188 240.5h1M92 241.5h1M97 241.5h2M100 241.5h1M88 242.5h1M96 242.5h2M99 242.5h1M180 242.5h1M93 243.5h1M90 244.5h1M184 244.5h3M97 245.5h1M89 246.5h1M93 246.5h1M97 246.5h2M171 246.5h1M175 246.5h1M182 246.5h1M186 246.5h1M87 247.5h1M92 247.5h1M175 247.5h1M82 248.5h1M88 248.5h1M94 248.5h1M169 249.5h1M179 249.5h1M183 249.5h1M85 250.5h1M90 250.5h1M167 250.5h1M80 251.5h1M86 251.5h1M93 251.5h1M174 251.5h1M82 252.5h1M84 252.5h1M165 252.5h1M169 252.5h3M179 252.5h1M84 253.5h1M87 253.5h1M95 253.5h1M166 253.5h1M169 253.5h1M83 254.5h1M86 254.5h1M90 254.5h1M162 254.5h1M165 254.5h1M173 254.5h1M84 255.5h1M87 255.5h1M89 255.5h1M162 255.5h2M87 256.5h2M91 256.5h1M169 256.5h1M82 257.5h1M92 257.5h1M157 257.5h1M166 257.5h1M91 258.5h1M93 258.5h1M156 258.5h1M158 258.5h2M168 258.5h1M172 258.5h1M86 259.5h1M92 259.5h1M160 259.5h1M163 259.5h1M165 259.5h1M171 259.5h1M82 260.5h1M86 260.5h1M154 260.5h1M156 260.5h1M88 261.5h2M91 261.5h2M155 261.5h1M164 261.5h1M78 262.5h1M82 262.5h1M85 262.5h2M90 262.5h1M92 262.5h1M152 262.5h1M84 263.5h1M88 263.5h1M91 263.5h1M153 263.5h1M77 264.5h1M91 264.5h1M148 264.5h2M163 264.5h1M90 265.5h1M153 265.5h1M157 265.5h1M160 265.5h1M165 265.5h1M81 266.5h1M83 266.5h1M86 266.5h1M151 266.5h1M73 267.5h1M88 267.5h1M146 267.5h1M149 267.5h1M153 267.5h2M143 268.5h1M150 268.5h2M75 269.5h1M84 269.5h1M89 269.5h1M141 269.5h1M144 269.5h1M146 269.5h1M148 269.5h1M151 269.5h1M159 269.5h2M79 270.5h1M81 270.5h1M148 270.5h1M82 271.5h1M146 271.5h1M149 271.5h1M157 271.5h1M73 272.5h1M76 272.5h1M79 272.5h1M87 272.5h1M89 272.5h1M138 272.5h1M141 272.5h1M143 272.5h1M150 272.5h1M153 272.5h1M79 273.5h1M81 273.5h1M85 273.5h1M135 273.5h2M139 273.5h1M141 273.5h2M155 273.5h1M77 274.5h1M138 274.5h1M141 274.5h4M72 275.5h1M77 275.5h1M84 275.5h1M87 275.5h1M89 275.5h1M130 275.5h1M133 275.5h1M140 275.5h1M142 275.5h1M148 275.5h1M152 275.5h1M79 276.5h1M81 276.5h1M84 276.5h1M90 276.5h1M92 276.5h1M130 276.5h3M147 276.5h1M74 277.5h1M91 277.5h1M130 277.5h1M148 277.5h1M68 278.5h1M75 278.5h1M82 278.5h2M129 278.5h1M72 279.5h1M83 279.5h1M86 279.5h1M88 279.5h1M122 279.5h1M124 279.5h1M129 279.5h1M75 280.5h1M77 280.5h2M85 280.5h1M88 280.5h2M124 280.5h1M134 280.5h3M139 280.5h2M77 281.5h1M81 281.5h2M86 281.5h1M91 281.5h1M124 281.5h1M127 281.5h1M130 281.5h4M138 281.5h1M73 282.5h1M75 282.5h1M124 282.5h1M129 282.5h1M133 282.5h1M72 283.5h1M78 283.5h1M81 283.5h2M93 283.5h1M97 283.5h1M112 283.5h1M115 283.5h1M122 283.5h1M129 283.5h1M132 283.5h1M136 283.5h1M70 284.5h1M84 284.5h1M94 284.5h1M98 284.5h1M101 284.5h1M104 284.5h1M108 284.5h1M110 284.5h1M113 284.5h1M115 284.5h1M129 284.5h2M135 284.5h1M90 285.5h1M93 285.5h1M95 285.5h1M98 285.5h1M102 285.5h1M112 285.5h1M123 285.5h2M129 285.5h1M133 285.5h1M137 285.5h1M72 286.5h1M93 286.5h1M96 286.5h2M117 286.5h1M123 286.5h1M72 287.5h1M75 287.5h1M84 287.5h1M86 287.5h1M97 287.5h1M99 287.5h2M103 287.5h2M113 287.5h1M115 287.5h1M118 287.5h1M120 287.5h1M135 287.5h1M72 288.5h1M77 288.5h1M81 288.5h1M84 288.5h1M88 288.5h1M97 288.5h1M105 288.5h1M109 288.5h1M124 288.5h1M127 288.5h2M70 289.5h1M77 289.5h1M90 289.5h1M95 289.5h1M98 289.5h1M102 289.5h1M110 289.5h1M124 289.5h1M129 289.5h1M132 289.5h1M68 290.5h1M89 290.5h1M94 290.5h1M108 290.5h1M115 290.5h1M117 290.5h1M119 290.5h2M99 291.5h1M108 291.5h1M117 291.5h1M122 291.5h3M126 291.5h1M128 291.5h1M78 292.5h1M83 292.5h2M102 292.5h1M108 292.5h1M115 292.5h1M68 293.5h1M72 293.5h1M75 293.5h2M89 293.5h1M99 293.5h1M123 293.5h1M125 293.5h1M75 294.5h1M77 294.5h1M82 294.5h1M85 294.5h1M90 294.5h1M99 294.5h1M106 294.5h2M80 295.5h1M96 295.5h1M108 295.5h1M115 295.5h1M69 296.5h1M75 296.5h1M77 296.5h1M85 296.5h1M93 296.5h1M95 296.5h1M101 296.5h1M103 296.5h1M109 296.5h1M85 297.5h1M102 297.5h1M121 297.5h1M66 298.5h1M76 298.5h1M86 298.5h1M102 298.5h1M65 299.5h1M80 299.5h1M85 299.5h1M113 299.5h1M90 300.5h1M96 300.5h1M100 300.5h1M102 300.5h1M116 300.5h1M71 301.5h1M91 301.5h1M99 301.5h1M106 301.5h1M108 301.5h2M87 302.5h1M95 302.5h1M107 302.5h1M81 303.5h1M85 303.5h1M94 304.5h1M103 304.5h1M108 304.5h1M83 305.5h1M100 305.5h1M103 305.5h1M80 306.5h1M100 306.5h1M77 307.5h1M92 307.5h1M80 308.5h1M74 309.5h1M78 309.5h1M72 310.5h1M77 311.5h1M79 312.5h1" stroke="#00c8ff" stroke-width="1" fill="none" shape-rendering="crispEdges"/><path d="M287 59.5h1M279 60.5h1M282 60.5h1M285 60.5h1M289 60.5h1M291 60.5h2M292 61.5h1M280 62.5h1M282 62.5h1M296 62.5h1M288 63.5h2M270 64.5h1M274 64.5h1M288 64.5h1M292 64.5h1M276 65.5h1M279 65.5h1M285 65.5h1M292 65.5h1M265 66.5h1M273 66.5h1M286 66.5h1M288 66.5h1M296 66.5h1M269 67.5h1M271 67.5h1M278 67.5h1M259 68.5h1M268 68.5h1M292 68.5h1M294 68.5h1M299 68.5h1M265 69.5h1M269 69.5h1M271 69.5h1M281 69.5h1M293 69.5h1M260 70.5h1M264 70.5h1M267 70.5h1M277 70.5h1M279 70.5h1M282 70.5h1M285 70.5h1M289 70.5h2M257 71.5h1M266 71.5h2M271 71.5h1M281 71.5h3M285 71.5h1M298 71.5h1M257 72.5h1M264 72.5h3M281 72.5h1M284 72.5h2M288 72.5h2M293 72.5h1M300 72.5h1M262 73.5h1M265 73.5h1M268 73.5h1M283 73.5h2M293 73.5h1M295 73.5h1M299 73.5h1M253 74.5h1M267 74.5h1M273 74.5h2M278 74.5h1M285 74.5h1M288 74.5h1M247 75.5h1M256 75.5h1M273 75.5h2M277 75.5h1M279 75.5h3M288 75.5h1M290 75.5h1M295 75.5h2M246 76.5h1M251 76.5h1M257 76.5h1M264 76.5h2M271 76.5h1M279 76.5h1M290 76.5h1M294 76.5h1M244 77.5h1M250 77.5h1M255 77.5h1M264 77.5h1M271 77.5h2M274 77.5h1M284 77.5h1M293 77.5h1M242 78.5h1M250 78.5h1M259 78.5h1M263 78.5h2M275 78.5h2M278 78.5h1M285 78.5h1M291 78.5h1M294 78.5h1M297 78.5h2M300 78.5h1M242 79.5h1M245 79.5h2M249 79.5h1M254 79.5h3M264 79.5h1M267 79.5h1M272 79.5h1M280 79.5h2M266 80.5h1M278 80.5h1M286 80.5h1M289 80.5h3M293 80.5h1M297 80.5h1M239 81.5h1M249 81.5h2M255 81.5h1M258 81.5h1M270 81.5h1M278 81.5h1M283 81.5h1M290 81.5h1M292 81.5h1M237 82.5h1M241 82.5h1M247 82.5h1M251 82.5h1M254 82.5h2M260 82.5h1M266 82.5h1M271 82.5h3M284 82.5h2M290 82.5h1M294 82.5h1M238 83.5h1M242 83.5h1M249 83.5h1M256 83.5h1M259 83.5h1M265 83.5h1M273 83.5h1M275 83.5h1M277 83.5h3M281 83.5h1M285 83.5h1M287 83.5h1M292 83.5h1M295 83.5h1M237 84.5h2M248 84.5h1M255 84.5h1M269 84.5h1M276 84.5h1M288 84.5h3M236 85.5h1M242 85.5h1M247 85.5h1M256 85.5h1M258 85.5h1M262 85.5h2M265 85.5h1M273 85.5h1M275 85.5h1M281 85.5h1M291 85.5h1M294 85.5h1M233 86.5h1M238 86.5h1M243 86.5h1M247 86.5h1M259 86.5h1M277 86.5h1M279 86.5h2M289 86.5h1M296 86.5h1M234 87.5h2M237 87.5h2M274 87.5h1M283 87.5h1M287 87.5h1M289 87.5h2M297 87.5h1M229 88.5h1M234 88.5h1M238 88.5h1M247 88.5h1M251 88.5h1M273 88.5h1M276 88.5h1M278 88.5h2M283 88.5h1M288 88.5h1M292 88.5h1M296 88.5h1M229 89.5h1M232 89.5h1M237 89.5h1M241 89.5h1M274 89.5h1M276 89.5h1M283 89.5h1M285 89.5h2M227 90.5h1M239 90.5h1M242 90.5h1M247 90.5h1M280 90.5h3M285 90.5h2M288 90.5h1M225 91.5h1M231 91.5h2M245 91.5h2M275 91.5h1M278 91.5h4M285 91.5h1M287 91.5h1M292 91.5h1M294 91.5h1M232 92.5h1M283 92.5h1M294 92.5h1M226 93.5h1M235 93.5h1M241 93.5h1M284 93.5h1M291 93.5h1M228 94.5h2M234 94.5h1M240 94.5h1M282 94.5h1M286 94.5h1M294 94.5h1M223 95.5h1M229 95.5h1M231 95.5h2M238 95.5h1M277 95.5h1M280 95.5h1M283 95.5h1M296 95.5h1M224 96.5h1M226 96.5h1M228 96.5h1M278 96.5h1M281 96.5h1M286 96.5h1M290 96.5h1M295 96.5h1M216 97.5h1M221 97.5h1M224 97.5h2M229 97.5h1M234 97.5h2M278 97.5h2M285 97.5h2M292 97.5h2M216 98.5h1M220 98.5h2M228 98.5h1M290 98.5h1M225 99.5h1M230 99.5h1M277 99.5h1M286 99.5h1M223 100.5h1M276 100.5h1M278 100.5h1M287 100.5h1M215 101.5h1M223 101.5h1M228 101.5h1M278 101.5h1M284 101.5h1M290 101.5h1M293 101.5h1M217 102.5h1M226 102.5h1M278 102.5h1M280 102.5h1M287 102.5h1M289 102.5h1M210 103.5h1M218 103.5h1M223 103.5h1M226 103.5h1M278 103.5h1M280 103.5h2M284 103.5h1M290 103.5h2M293 103.5h1M208 104.5h1M210 104.5h1M221 104.5h2M276 104.5h1M281 104.5h1M292 104.5h1M208 105.5h1M213 105.5h1M215 105.5h1M218 105.5h1M220 105.5h1M278 105.5h1M208 106.5h1M210 106.5h1M212 106.5h1M220 106.5h1M288 106.5h1M205 107.5h1M210 107.5h1M212 107.5h1M218 107.5h1M281 107.5h2M289 107.5h2M208 108.5h1M210 108.5h1M279 108.5h1M282 108.5h1M285 108.5h1M202 109.5h1M216 109.5h1M276 109.5h1M206 110.5h1M209 110.5h1M213 110.5h1M215 110.5h1M275 110.5h1M277 110.5h3M283 110.5h1M289 110.5h1M204 111.5h1M208 111.5h1M276 111.5h3M283 111.5h1M286 111.5h1M204 112.5h2M208 112.5h2M276 112.5h1M280 112.5h1M282 112.5h1M200 113.5h2M209 113.5h1M276 113.5h1M280 113.5h1M282 113.5h1M197 114.5h1M278 114.5h2M284 114.5h1M287 114.5h1M196 115.5h1M199 115.5h1M206 115.5h2M210 115.5h1M275 115.5h3M287 115.5h1M204 116.5h1M208 116.5h1M272 116.5h1M275 116.5h1M282 116.5h1M284 116.5h3M196 117.5h2M203 117.5h1M205 117.5h1M273 117.5h1M283 117.5h1M285 117.5h1M203 118.5h1M205 118.5h1M272 118.5h1M202 119.5h1M271 119.5h2M276 119.5h2M280 119.5h1M283 119.5h1M192 120.5h1M196 120.5h1M270 120.5h1M273 120.5h1M283 120.5h1M193 121.5h1M195 121.5h1M275 121.5h2M278 121.5h1M280 121.5h1M282 121.5h1M194 122.5h4M200 122.5h2M271 122.5h3M282 122.5h2M195 123.5h1M200 123.5h1M271 123.5h1M280 123.5h1M187 124.5h1M191 124.5h1M194 124.5h2M269 124.5h1M186 125.5h1M190 125.5h1M193 125.5h2M195 126.5h2M268 126.5h2M271 126.5h1M273 126.5h1M280 126.5h1M191 127.5h1M193 127.5h1M273 127.5h1M190 128.5h2M193 128.5h1M267 128.5h2M271 128.5h1M273 128.5h1M187 129.5h1M192 129.5h1M268 129.5h1M273 129.5h1M189 130.5h1M185 131.5h5M265 131.5h1M267 131.5h1M270 131.5h1M276 131.5h1M185 132.5h1M187 132.5h1M189 132.5h1M271 132.5h2M274 132.5h1M178 133.5h2M181 133.5h1M183 133.5h1M265 133.5h1M175 134.5h1M179 134.5h1M182 134.5h2M188 134.5h1M263 134.5h1M265 134.5h1M183 135.5h2M187 135.5h1M264 135.5h1M267 135.5h1M275 135.5h1M181 136.5h1M183 136.5h2M186 136.5h1M262 136.5h1M268 136.5h1M271 136.5h1M182 137.5h1M270 137.5h1M273 137.5h1M176 138.5h1M261 138.5h1M273 138.5h1M171 139.5h1M173 139.5h1M183 139.5h1M262 139.5h2M265 139.5h1M175 140.5h4M261 140.5h1M178 141.5h1M264 141.5h1M271 141.5h1M170 142.5h1M173 142.5h1M176 142.5h1M266 142.5h2M269 142.5h1M170 143.5h1M175 143.5h1M262 143.5h2M171 144.5h1M173 144.5h1M175 144.5h1M265 144.5h1M165 145.5h1M173 145.5h1M176 145.5h1M258 145.5h2M265 145.5h1M174 146.5h2M256 146.5h1M264 146.5h1M268 146.5h1M164 147.5h1M261 147.5h1M264 147.5h1M165 148.5h1M172 148.5h1M255 148.5h1M257 148.5h2M265 148.5h2M163 149.5h1M166 149.5h1M170 149.5h2M173 149.5h1M255 149.5h1M165 150.5h1M255 150.5h1M262 150.5h1M163 151.5h1M161 152.5h1M165 152.5h1M169 152.5h1M257 152.5h1M161 153.5h1M168 153.5h1M254 153.5h1M260 153.5h1M157 154.5h1M164 154.5h2M168 154.5h1M251 154.5h1M260 154.5h1M160 155.5h1M164 155.5h2M167 155.5h1M253 155.5h1M155 156.5h1M163 156.5h1M166 156.5h1M249 156.5h1M253 156.5h1M256 156.5h1M259 156.5h2M165 157.5h1M253 157.5h1M255 157.5h1M155 158.5h1M158 158.5h2M248 158.5h1M251 158.5h1M155 159.5h1M159 159.5h1M162 159.5h1M250 159.5h1M259 159.5h1M152 160.5h1M161 160.5h1M250 160.5h1M158 161.5h1M257 161.5h1M149 162.5h2M155 162.5h1M158 162.5h1M160 162.5h1M251 162.5h1M254 162.5h2M245 163.5h1M249 163.5h1M154 164.5h1M247 164.5h1M152 165.5h1M253 165.5h1M242 166.5h1M246 166.5h1M150 167.5h2M156 167.5h1M149 168.5h1M151 168.5h1M146 169.5h1M248 169.5h2M143 170.5h1M239 170.5h1M241 170.5h1M243 170.5h1M149 171.5h1M151 171.5h1M142 172.5h1M148 172.5h1M150 172.5h1M142 173.5h1M237 173.5h1M240 173.5h1M248 173.5h1M139 174.5h1M141 174.5h3M237 174.5h1M242 174.5h1M143 175.5h2M241 175.5h1M234 176.5h1M244 176.5h1M138 177.5h2M234 177.5h1M237 177.5h2M140 178.5h1M142 178.5h1M233 178.5h1M141 179.5h1M143 179.5h2M232 179.5h1M235 179.5h2M134 180.5h1M236 180.5h1M238 180.5h1M134 181.5h1M231 181.5h1M234 181.5h1M232 182.5h1M237 182.5h1M134 183.5h2M142 183.5h1M231 183.5h1M235 183.5h1M231 184.5h1M132 185.5h1M136 185.5h1M141 185.5h1M228 185.5h3M235 185.5h1M129 186.5h1M132 186.5h2M136 186.5h1M138 186.5h2M131 187.5h1M232 187.5h1M129 188.5h1M136 188.5h1M230 188.5h2M128 189.5h1M131 189.5h2M127 190.5h1M130 190.5h1M133 190.5h1M223 190.5h2M230 190.5h1M232 190.5h1M128 191.5h1M223 191.5h1M225 191.5h2M231 191.5h1M124 192.5h1M224 192.5h1M230 192.5h1M127 193.5h1M130 193.5h1M223 193.5h1M229 193.5h1M126 194.5h1M222 194.5h3M229 194.5h1M219 195.5h2M222 195.5h1M126 196.5h1M220 196.5h1M132 197.5h1M222 197.5h1M226 197.5h1M130 198.5h2M216 198.5h1M224 198.5h1M122 199.5h1M128 199.5h2M221 199.5h1M224 199.5h1M226 199.5h1M120 200.5h1M127 200.5h1M215 200.5h1M217 200.5h1M221 200.5h1M223 200.5h2M215 201.5h1M117 202.5h1M122 202.5h1M214 202.5h1M119 203.5h1M123 203.5h1M128 203.5h1M212 203.5h2M219 203.5h1M125 204.5h2M213 204.5h1M219 204.5h1M117 205.5h1M121 205.5h1M123 205.5h1M212 205.5h1M121 206.5h1M124 206.5h1M208 206.5h2M115 207.5h1M210 207.5h1M217 207.5h1M116 208.5h2M124 208.5h1M208 208.5h2M117 209.5h2M121 209.5h1M124 209.5h1M210 209.5h1M217 209.5h1M121 210.5h1M205 210.5h2M212 210.5h1M113 211.5h1M116 211.5h1M204 211.5h2M208 211.5h1M213 211.5h2M120 212.5h1M207 212.5h1M118 213.5h1M204 213.5h1M206 213.5h1M209 213.5h1M213 213.5h1M111 214.5h1M118 214.5h1M204 214.5h1M206 214.5h1M205 215.5h1M109 216.5h1M115 216.5h1M108 217.5h1M116 217.5h1M201 217.5h1M206 218.5h1M107 219.5h1M115 219.5h2M197 219.5h1M107 220.5h1M109 220.5h1M113 220.5h1M110 221.5h1M115 221.5h1M193 221.5h1M200 221.5h1M103 222.5h1M107 222.5h2M111 222.5h1M198 222.5h1M107 223.5h1M196 223.5h1M201 223.5h1M102 224.5h1M107 224.5h1M109 224.5h2M199 224.5h1M201 224.5h1M103 225.5h1M106 225.5h1M111 225.5h1M190 225.5h1M196 225.5h1M198 225.5h1M188 226.5h1M102 227.5h1M104 227.5h1M110 227.5h1M194 227.5h1M99 228.5h1M106 228.5h2M109 228.5h1M192 228.5h1M188 229.5h1M192 229.5h1M196 229.5h1M184 230.5h1M186 230.5h2M196 230.5h1M189 231.5h1M195 231.5h2M98 232.5h2M106 232.5h1M109 232.5h2M183 232.5h1M96 233.5h1M100 233.5h1M102 233.5h1M108 233.5h1M186 233.5h1M102 234.5h1M105 234.5h2M109 234.5h1M179 234.5h1M104 235.5h1M106 235.5h2M179 235.5h1M181 235.5h1M184 235.5h1M187 235.5h2M186 236.5h1M188 236.5h1M96 237.5h1M98 237.5h1M96 238.5h1M104 238.5h1M107 238.5h1M175 238.5h1M183 238.5h1M95 239.5h1M101 239.5h2M104 239.5h1M177 239.5h1M101 240.5h1M103 240.5h1M106 240.5h1M174 240.5h1M178 240.5h1M181 240.5h2M94 241.5h1M106 241.5h1M174 241.5h1M177 241.5h1M179 241.5h1M182 241.5h1M184 241.5h1M93 242.5h1M95 242.5h1M101 242.5h1M104 242.5h2M177 242.5h1M183 242.5h1M94 243.5h1M97 243.5h1M101 243.5h1M103 243.5h2M170 243.5h1M173 243.5h2M179 243.5h1M103 244.5h1M171 244.5h1M179 244.5h1M182 244.5h1M92 245.5h1M95 245.5h2M99 245.5h1M172 245.5h1M174 245.5h2M167 246.5h1M172 246.5h1M174 246.5h1M101 247.5h1M167 247.5h1M173 247.5h1M89 248.5h2M95 248.5h1M100 248.5h1M164 248.5h1M168 248.5h1M171 248.5h1M174 248.5h1M176 248.5h1M89 249.5h1M93 249.5h2M99 249.5h1M101 249.5h1M103 249.5h1M162 249.5h2M172 249.5h1M88 250.5h1M97 250.5h2M100 250.5h1M165 250.5h1M168 250.5h1M89 251.5h1M167 251.5h1M86 252.5h1M93 252.5h1M95 252.5h1M98 252.5h1M158 252.5h1M92 253.5h1M93 254.5h1M156 254.5h1M164 254.5h1M158 255.5h1M160 255.5h1M165 255.5h1M94 256.5h1M156 256.5h2M162 256.5h1M168 256.5h1M91 257.5h1M151 257.5h2M154 257.5h1M158 257.5h1M150 258.5h1M152 258.5h1M87 259.5h1M147 259.5h3M157 259.5h1M159 259.5h1M93 260.5h2M99 260.5h1M147 260.5h1M149 260.5h1M159 260.5h1M85 261.5h1M95 261.5h1M98 261.5h1M146 261.5h1M149 261.5h2M95 262.5h1M100 262.5h1M145 262.5h2M160 262.5h1M99 263.5h1M148 263.5h3M158 263.5h1M94 264.5h2M99 264.5h1M139 264.5h1M151 264.5h1M84 265.5h1M86 265.5h1M93 265.5h1M98 265.5h3M138 265.5h1M143 265.5h1M148 265.5h1M156 265.5h1M84 266.5h1M91 266.5h2M96 266.5h2M153 266.5h1M83 267.5h1M89 267.5h1M95 267.5h2M133 267.5h1M139 267.5h1M141 267.5h1M143 267.5h1M145 267.5h1M86 268.5h1M91 268.5h1M97 268.5h1M99 268.5h1M137 268.5h1M139 268.5h1M147 268.5h1M93 269.5h1M95 269.5h2M98 269.5h1M129 269.5h1M134 269.5h1M136 269.5h1M140 269.5h1M152 269.5h1M82 270.5h2M92 270.5h1M96 270.5h1M132 270.5h2M137 270.5h1M143 270.5h2M79 271.5h1M92 271.5h1M94 271.5h1M99 271.5h1M125 271.5h2M138 271.5h1M145 271.5h1M147 271.5h1M82 272.5h1M86 272.5h1M88 272.5h1M92 272.5h1M101 272.5h1M121 272.5h1M131 272.5h2M90 273.5h1M92 273.5h1M96 273.5h2M121 273.5h1M126 273.5h1M146 273.5h1M86 274.5h1M94 274.5h1M98 274.5h1M107 274.5h1M112 274.5h1M114 274.5h1M132 274.5h1M134 274.5h1M78 275.5h1M86 275.5h1M93 275.5h1M95 275.5h1M100 275.5h2M105 275.5h1M107 275.5h1M111 275.5h1M114 275.5h1M121 275.5h1M124 275.5h1M136 275.5h2M141 275.5h1M88 276.5h2M94 276.5h1M96 276.5h1M99 276.5h1M106 276.5h1M108 276.5h1M115 276.5h1M125 276.5h2M77 277.5h1M88 277.5h1M93 277.5h2M98 277.5h1M103 277.5h2M107 277.5h2M114 277.5h1M119 277.5h1M128 277.5h2M132 277.5h1M134 277.5h6M78 278.5h1M85 278.5h1M97 278.5h2M108 278.5h1M113 278.5h1M115 278.5h1M117 278.5h1M124 278.5h2M131 278.5h1M133 278.5h1M84 279.5h1M89 279.5h1M93 279.5h1M100 279.5h1M123 279.5h1M131 279.5h1M133 279.5h1M137 279.5h1M90 280.5h2M93 280.5h2M96 280.5h1M99 280.5h1M105 280.5h1M107 280.5h1M111 280.5h1M121 280.5h1M125 280.5h2M128 280.5h1M131 280.5h1M133 280.5h1M88 281.5h2M93 281.5h1M104 281.5h1M108 281.5h1M119 281.5h1M125 281.5h1M128 281.5h1M134 281.5h1M86 282.5h2M91 282.5h1M95 282.5h1M99 282.5h1M105 282.5h1M108 282.5h1M110 282.5h1M116 282.5h1M119 282.5h1M125 282.5h2M130 282.5h3M83 283.5h1M86 283.5h1M102 283.5h1M110 283.5h1M113 283.5h1M117 283.5h1M79 284.5h1M92 284.5h1M97 284.5h1M119 284.5h1M122 284.5h1M124 284.5h1M126 284.5h1M77 285.5h1M81 285.5h1M83 285.5h2M87 285.5h1M96 285.5h1M101 285.5h1M111 285.5h1M113 285.5h1M118 285.5h1M120 285.5h1M125 285.5h1M79 286.5h1M90 286.5h1M95 286.5h1M105 286.5h1M107 286.5h1M111 286.5h1M118 286.5h1M127 286.5h1M87 287.5h2M95 287.5h1M98 287.5h1M101 287.5h2M111 287.5h1M114 287.5h1M124 287.5h1M93 288.5h1M103 288.5h2M110 288.5h1M113 288.5h1M115 288.5h1M120 288.5h1M89 289.5h1M100 289.5h1M113 289.5h1M116 289.5h1M121 289.5h1M82 290.5h1M90 290.5h1M105 290.5h1M77 291.5h1M80 291.5h1M88 291.5h2M97 291.5h1M101 291.5h1M107 291.5h1M81 292.5h1M89 292.5h1M95 292.5h1M97 292.5h2M100 292.5h1M79 293.5h4M98 293.5h1M101 293.5h1M114 293.5h1M93 294.5h1M104 294.5h1M111 294.5h1M91 295.5h1M93 295.5h1M99 295.5h2M102 295.5h1M84 296.5h1M86 296.5h1M89 296.5h1M94 296.5h1M105 296.5h1M89 297.5h1M93 297.5h1M98 297.5h1M105 297.5h1M88 298.5h1M90 298.5h1M100 298.5h1M87 299.5h1" stroke="#00f0ff" stroke-width="1" fill="none" shape-rendering="crispEdges"/><path d="M290 60.5h1M276 61.5h1M282 61.5h1M275 62.5h1M286 62.5h1M292 62.5h1M277 63.5h1M279 63.5h1M284 63.5h2M293 63.5h1M271 64.5h1M290 64.5h1M265 65.5h1M274 65.5h1M264 66.5h1M266 66.5h1M270 66.5h1M282 66.5h1M290 66.5h1M292 66.5h1M294 66.5h1M297 66.5h1M270 67.5h1M276 67.5h2M281 67.5h1M289 67.5h1M271 68.5h2M288 68.5h1M293 68.5h1M257 69.5h2M262 69.5h1M276 69.5h1M278 69.5h1M282 69.5h1M285 69.5h2M296 69.5h1M255 70.5h1M261 70.5h1M270 70.5h1M286 70.5h1M293 70.5h2M253 71.5h1M261 71.5h2M268 71.5h1M272 71.5h1M280 71.5h1M290 71.5h1M300 71.5h1M258 72.5h1M260 72.5h1M290 72.5h1M260 73.5h2M277 73.5h1M282 73.5h1M287 73.5h1M294 73.5h1M249 74.5h1M251 74.5h1M258 74.5h1M266 74.5h1M280 74.5h1M248 75.5h2M254 75.5h2M263 75.5h1M268 75.5h1M275 75.5h1M292 75.5h1M298 75.5h1M250 76.5h1M255 76.5h1M263 76.5h1M280 76.5h1M286 76.5h1M248 77.5h1M252 77.5h1M258 77.5h1M260 77.5h1M263 77.5h1M283 77.5h1M286 77.5h1M295 77.5h1M245 78.5h1M249 78.5h1M255 78.5h1M258 78.5h1M283 78.5h1M286 78.5h1M290 78.5h1M250 79.5h1M257 79.5h1M284 79.5h1M243 80.5h1M252 80.5h2M295 80.5h1M300 80.5h1M247 81.5h1M285 81.5h2M288 81.5h1M250 82.5h1M240 83.5h1M248 83.5h1M288 83.5h1M239 84.5h1M247 84.5h1M291 84.5h1M295 84.5h1M239 85.5h2M287 85.5h1M292 85.5h1M299 85.5h1M292 87.5h1M294 87.5h1M231 88.5h1M233 88.5h1M237 88.5h1M239 88.5h2M286 88.5h1M234 89.5h1M238 89.5h1M290 89.5h1M296 89.5h1M228 90.5h1M287 90.5h1M224 91.5h1M225 92.5h1M288 92.5h1M292 92.5h1M287 93.5h1M289 93.5h1M292 93.5h1M297 93.5h1M224 94.5h1M227 94.5h1M287 94.5h2M292 94.5h1M221 95.5h1M224 95.5h1M227 95.5h1M290 95.5h1M292 95.5h1M227 96.5h1M285 96.5h1M287 96.5h1M219 97.5h1M288 97.5h1M285 98.5h1M288 98.5h1M294 98.5h1M217 99.5h1M219 99.5h1M221 99.5h2M224 99.5h1M284 99.5h1M294 99.5h1M290 100.5h1M293 100.5h1M217 101.5h2M220 101.5h2M213 102.5h1M220 102.5h1M290 102.5h1M212 103.5h1M216 103.5h1M287 103.5h1M214 104.5h2M214 105.5h1M216 105.5h1M290 105.5h2M206 106.5h1M209 106.5h1M211 106.5h1M285 106.5h2M204 107.5h1M283 107.5h1M287 107.5h1M205 108.5h1M204 109.5h1M209 109.5h1M204 110.5h1M208 110.5h1M288 110.5h1M203 111.5h1M206 111.5h2M282 111.5h1M284 111.5h1M206 112.5h1M284 112.5h1M199 113.5h1M288 113.5h1M196 114.5h1M202 114.5h1M280 114.5h2M197 115.5h1M279 115.5h1M199 116.5h1M280 116.5h1M198 117.5h3M282 117.5h1M286 117.5h1M192 118.5h1M197 118.5h3M278 118.5h1M197 119.5h1M197 120.5h1M277 121.5h1M191 122.5h1M275 122.5h1M192 123.5h1M194 123.5h1M188 124.5h1M190 124.5h1M276 124.5h4M282 124.5h1M185 125.5h1M188 125.5h1M188 126.5h1M191 126.5h1M275 126.5h1M185 127.5h1M272 128.5h1M274 128.5h1M278 128.5h1M182 129.5h1M275 129.5h1M183 130.5h1M184 131.5h1M271 131.5h2M177 132.5h2M273 132.5h1M275 132.5h1M177 133.5h1M180 133.5h1M184 133.5h1M269 133.5h1M180 134.5h1M269 134.5h1M177 135.5h1M179 135.5h1M181 135.5h1M272 135.5h1M174 136.5h1M267 136.5h1M274 136.5h1M180 137.5h1M175 138.5h1M271 138.5h1M175 139.5h1M177 139.5h1M270 139.5h1M171 140.5h1M173 140.5h1M265 140.5h1M268 140.5h1M174 141.5h1M266 143.5h1M166 144.5h1M170 144.5h1M267 144.5h1M170 145.5h1M172 145.5h1M171 146.5h1M168 147.5h3M262 147.5h1M265 147.5h2M163 148.5h1M166 148.5h1M169 148.5h1M162 149.5h1M167 149.5h2M259 149.5h1M262 149.5h1M167 150.5h1M259 150.5h1M261 150.5h1M263 150.5h1M159 151.5h1M166 151.5h1M164 152.5h1M259 152.5h3M263 152.5h1M158 153.5h1M164 153.5h1M159 154.5h3M261 154.5h1M255 155.5h1M255 156.5h1M155 157.5h1M159 157.5h2M259 157.5h1M253 158.5h1M256 158.5h1M258 158.5h1M254 159.5h1M151 160.5h1M156 160.5h1M253 160.5h1M252 161.5h1M256 161.5h1M151 163.5h1M153 163.5h1M250 163.5h1M254 163.5h1M147 164.5h1M251 164.5h2M254 164.5h1M153 165.5h1M251 165.5h2M148 166.5h2M152 166.5h1M250 166.5h2M145 167.5h1M248 167.5h1M252 167.5h1M245 168.5h1M248 168.5h2M251 168.5h2M145 169.5h1M147 169.5h1M150 169.5h1M250 169.5h1M147 170.5h1M244 170.5h1M246 170.5h2M243 171.5h1M248 171.5h1M143 172.5h2M242 172.5h1M141 173.5h1M241 174.5h1M245 174.5h1M247 174.5h1M141 175.5h1M137 176.5h1M142 176.5h1M141 177.5h1M141 178.5h1M137 179.5h1M140 179.5h1M237 179.5h1M243 179.5h1M135 180.5h1M138 181.5h1M236 181.5h1M136 182.5h1M138 182.5h1M236 182.5h1M138 183.5h1M233 183.5h1M232 184.5h1M133 185.5h1M135 185.5h1M232 186.5h1M130 187.5h1M134 187.5h1M233 187.5h3M128 188.5h1M235 188.5h1M129 189.5h1M133 189.5h1M129 190.5h1M234 190.5h1M130 191.5h2M127 194.5h1M227 194.5h1M224 195.5h1M226 195.5h2M127 196.5h2M223 196.5h1M121 197.5h1M122 198.5h1M125 198.5h2M220 198.5h2M125 199.5h1M219 199.5h2M225 199.5h1M118 200.5h1M122 200.5h1M219 200.5h2M119 201.5h1M121 201.5h1M223 201.5h1M121 202.5h1M124 202.5h1M217 202.5h2M120 203.5h1M118 204.5h1M221 205.5h1M115 206.5h1M213 206.5h1M114 207.5h1M120 207.5h1M218 207.5h1M113 208.5h1M211 209.5h1M214 209.5h1M115 210.5h1M216 210.5h1M112 212.5h2M209 212.5h1M110 213.5h3M207 213.5h2M112 214.5h3M211 214.5h1M208 215.5h1M210 216.5h1M113 217.5h1M111 218.5h1M204 218.5h1M207 218.5h1M110 219.5h1M202 219.5h2M207 219.5h1M105 220.5h1M108 220.5h1M205 220.5h1M203 221.5h1M205 221.5h1M105 222.5h1M204 222.5h1M105 223.5h2M110 223.5h1M197 223.5h1M200 223.5h1M203 223.5h1M104 224.5h2M196 224.5h1M202 224.5h1M101 225.5h1M105 225.5h1M199 225.5h1M194 226.5h1M100 227.5h1M106 227.5h1M192 227.5h2M200 227.5h1M102 228.5h1M99 229.5h1M102 229.5h1M98 230.5h1M102 230.5h1M103 231.5h1M105 231.5h1M194 231.5h1M97 232.5h1M193 232.5h1M99 233.5h1M101 234.5h1M103 234.5h1M190 234.5h1M97 235.5h1M186 235.5h1M99 236.5h1M101 236.5h1M185 237.5h1M100 238.5h1M187 238.5h1M99 240.5h1M180 240.5h1M185 240.5h1M93 241.5h1M95 241.5h1M178 241.5h1M91 242.5h2M98 242.5h1M176 242.5h1M184 242.5h1M177 243.5h1M94 244.5h2M98 244.5h1M174 244.5h2M93 245.5h1M91 246.5h2M95 247.5h1M97 247.5h1M170 247.5h3M174 247.5h1M97 248.5h1M175 248.5h1M90 249.5h1M95 249.5h1M168 249.5h1M170 249.5h1M89 250.5h1M91 250.5h1M95 250.5h2M92 251.5h1M170 251.5h1M90 252.5h1M166 252.5h2M86 253.5h1M164 253.5h1M167 253.5h2M92 254.5h1M163 254.5h1M170 254.5h1M85 255.5h1M90 255.5h1M92 255.5h3M166 255.5h1M84 256.5h1M159 256.5h1M85 257.5h1M89 257.5h1M163 257.5h1M84 258.5h2M157 258.5h1M160 258.5h3M164 258.5h1M166 258.5h1M83 259.5h2M90 259.5h2M162 259.5h1M157 260.5h2M161 260.5h1M90 261.5h1M158 261.5h1M89 262.5h1M151 262.5h1M153 262.5h5M159 262.5h1M86 263.5h1M92 263.5h1M155 263.5h1M157 263.5h1M150 264.5h1M153 264.5h3M158 264.5h1M83 265.5h1M85 265.5h1M91 265.5h1M154 265.5h1M85 266.5h1M89 266.5h1M146 266.5h2M81 267.5h1M86 267.5h1M144 267.5h1M150 267.5h2M83 268.5h1M89 268.5h1M144 268.5h1M146 268.5h1M149 268.5h1M82 269.5h1M88 269.5h1M90 269.5h1M143 269.5h1M91 270.5h1M146 270.5h1M149 270.5h2M83 271.5h1M89 271.5h1M91 271.5h1M140 271.5h1M142 271.5h1M137 272.5h1M139 272.5h1M80 273.5h1M83 273.5h1M86 273.5h1M88 273.5h2M82 274.5h1M85 274.5h1M90 274.5h2M133 274.5h1M135 274.5h2M145 274.5h1M79 275.5h1M88 275.5h1M90 275.5h1M85 276.5h1M91 276.5h1M135 276.5h1M137 276.5h1M139 276.5h1M78 277.5h1M86 277.5h2M127 277.5h1M131 277.5h1M77 278.5h1M79 278.5h1M81 278.5h1M89 278.5h1M91 278.5h1M127 278.5h1M130 278.5h1M137 278.5h1M81 279.5h1M90 279.5h2M125 279.5h1M82 280.5h1M119 280.5h1M87 281.5h1M95 281.5h1M118 281.5h1M120 281.5h2M80 282.5h1M83 282.5h1M90 282.5h1M92 282.5h1M96 282.5h1M123 282.5h1M77 283.5h1M85 283.5h1M96 283.5h1M99 283.5h1M111 283.5h1M119 283.5h2M123 283.5h1M126 283.5h1M81 284.5h1M86 284.5h1M90 284.5h1M93 284.5h1M95 284.5h1M100 284.5h1M102 284.5h2M112 284.5h1M116 284.5h1M120 284.5h2M86 285.5h1M88 285.5h1M99 285.5h1M103 285.5h1M107 285.5h1M83 286.5h2M113 286.5h1M115 286.5h1M120 286.5h1M125 286.5h1M79 287.5h1M81 287.5h2M96 287.5h1M106 287.5h1M112 287.5h1M122 287.5h1M87 288.5h1M90 288.5h1M99 288.5h4M107 288.5h1M111 288.5h1M116 288.5h1M79 289.5h1M86 289.5h1M99 289.5h1M104 289.5h4M109 289.5h1M118 289.5h1M77 290.5h1M81 290.5h1M84 290.5h1M92 290.5h2M95 290.5h1M97 290.5h1M99 290.5h1M101 290.5h2M107 290.5h1M114 290.5h1M93 291.5h1M102 291.5h1M111 291.5h1M80 292.5h1M91 292.5h1M93 292.5h1M104 292.5h1M106 292.5h2M112 292.5h1M114 292.5h1M91 293.5h1M93 293.5h1M106 293.5h1M80 294.5h1M92 294.5h1M94 294.5h1M108 294.5h1M94 295.5h1M103 295.5h1M106 295.5h1M110 295.5h1M81 296.5h2M100 296.5h1M86 297.5h1M88 297.5h1M103 297.5h1M85 298.5h1M91 298.5h1M94 298.5h1M91 299.5h3" stroke="#00e0ff" stroke-width="1" fill="none" shape-rendering="crispEdges"/><path d="M268 76.5h1M270 76.5h1M272 76.5h1M277 76.5h1M266 77.5h2M270 77.5h1M280 77.5h1M268 78.5h1M270 78.5h1M279 78.5h1M260 79.5h1M262 79.5h1M269 79.5h3M273 79.5h2M259 80.5h1M267 80.5h1M270 80.5h3M274 80.5h1M277 80.5h1M279 80.5h1M281 80.5h1M261 81.5h1M271 81.5h1M274 81.5h1M277 81.5h1M279 81.5h3M253 82.5h1M268 82.5h1M278 82.5h1M281 82.5h1M253 83.5h2M268 83.5h1M280 83.5h1M283 83.5h1M252 84.5h1M256 84.5h2M264 84.5h3M273 84.5h1M275 84.5h1M279 84.5h1M284 84.5h2M248 85.5h1M250 85.5h2M267 85.5h2M279 85.5h1M284 85.5h1M245 86.5h1M250 86.5h1M252 86.5h1M255 86.5h2M271 86.5h1M278 86.5h1M281 86.5h1M284 86.5h2M247 87.5h2M250 87.5h1M252 87.5h1M273 87.5h1M277 87.5h1M280 87.5h2M285 87.5h1M242 88.5h1M244 88.5h1M277 88.5h1M284 88.5h1M242 89.5h2M246 89.5h1M248 89.5h1M250 89.5h1M280 89.5h1M282 89.5h1M275 90.5h2M279 90.5h1M283 90.5h1M239 91.5h2M277 91.5h1M236 92.5h1M276 92.5h1M278 92.5h1M285 92.5h1M237 93.5h2M276 93.5h1M239 94.5h1M285 94.5h1M276 95.5h1M229 96.5h1M279 96.5h1M282 96.5h1M227 97.5h1M231 97.5h1M229 98.5h1M227 99.5h1M231 99.5h1M279 99.5h1M283 99.5h1M226 100.5h1M280 101.5h1M283 101.5h1M223 102.5h1M225 102.5h1M281 102.5h1M277 103.5h1M220 104.5h1M223 104.5h2M277 104.5h2M219 105.5h1M279 105.5h1M281 105.5h1M277 106.5h2M280 106.5h1M214 107.5h1M217 107.5h1M220 107.5h1M216 108.5h1M276 108.5h1M213 109.5h1M278 109.5h3M210 110.5h1M212 110.5h1M210 111.5h1M210 112.5h1M275 112.5h1M278 112.5h2M208 113.5h1M210 113.5h1M277 113.5h1M206 114.5h1M273 115.5h2M207 116.5h1M273 116.5h1M206 117.5h2M204 118.5h1M271 118.5h1M275 118.5h1M200 119.5h1M204 119.5h1M200 120.5h1M202 120.5h2M272 120.5h1M198 121.5h1M200 121.5h1M270 121.5h1M197 123.5h1M197 125.5h2M269 125.5h1M271 125.5h1M195 127.5h1M271 127.5h1M189 129.5h1M266 129.5h1M269 129.5h1M269 130.5h1M266 131.5h1M186 132.5h1M190 132.5h1M267 132.5h1M189 133.5h1M264 133.5h1M267 133.5h2M185 134.5h2M264 134.5h1M185 135.5h1M263 136.5h1M262 137.5h1M266 137.5h1M184 138.5h1M262 138.5h2M181 139.5h2M264 139.5h1M179 141.5h2M177 142.5h3M260 142.5h2M263 142.5h1M176 144.5h1M258 144.5h1M260 144.5h1M260 145.5h1M172 146.5h1M259 146.5h1M173 147.5h1M257 147.5h2M174 148.5h1M259 148.5h1M254 149.5h1M170 150.5h2M253 150.5h1M257 150.5h1M169 151.5h1M253 151.5h3M253 152.5h1M255 152.5h2M165 153.5h1M169 153.5h1M252 153.5h1M167 154.5h1M252 154.5h1M163 155.5h1M250 155.5h1M254 155.5h1M252 156.5h1M163 157.5h2M249 157.5h1M163 158.5h2M247 159.5h1M159 160.5h1M249 160.5h1M161 161.5h1M247 161.5h1M245 162.5h3M249 162.5h1M159 164.5h1M244 164.5h1M155 165.5h1M243 165.5h1M245 165.5h2M153 166.5h1M155 167.5h1M241 167.5h3M245 167.5h1M241 169.5h1M150 170.5h1M242 170.5h1M150 171.5h1M239 172.5h1M149 173.5h3M239 173.5h1M149 174.5h1M146 175.5h1M236 175.5h1M148 176.5h1M236 176.5h1M145 178.5h1M234 178.5h3M146 179.5h1M233 179.5h1M141 180.5h1M145 180.5h1M231 180.5h1M233 180.5h1M235 180.5h1M141 182.5h1M140 183.5h1M143 183.5h1M229 183.5h1M139 184.5h1M230 184.5h1M140 185.5h1M231 185.5h1M227 186.5h1M226 187.5h1M228 187.5h1M138 188.5h2M227 188.5h2M226 190.5h1M222 191.5h1M135 192.5h2M222 192.5h1M225 192.5h1M130 194.5h1M131 195.5h2M129 196.5h1M219 196.5h1M215 199.5h1M126 200.5h1M216 200.5h1M218 200.5h1M214 201.5h1M126 203.5h1M124 204.5h1M212 204.5h1M122 205.5h1M210 205.5h1M211 206.5h1M125 207.5h1M207 207.5h1M121 208.5h1M207 208.5h1M122 209.5h1M207 210.5h2M122 211.5h1M119 212.5h1M117 213.5h1M202 213.5h2M201 214.5h2M116 215.5h1M201 216.5h1M115 217.5h1M200 217.5h1M117 218.5h1M199 218.5h2M117 219.5h1M114 220.5h3M195 220.5h1M198 220.5h2M113 221.5h2M113 222.5h1M192 222.5h3M115 223.5h1M195 223.5h1M113 224.5h1M191 224.5h1M194 224.5h1M109 225.5h1M189 225.5h1M110 226.5h1M109 227.5h1M112 227.5h1M187 227.5h1M108 228.5h1M187 228.5h3M108 229.5h1M109 230.5h1M188 230.5h1M184 231.5h1M184 232.5h1M105 233.5h1M109 233.5h1M180 234.5h1M182 234.5h2M178 235.5h1M182 235.5h1M178 236.5h3M176 237.5h1M180 237.5h1M106 238.5h1M176 238.5h4M174 239.5h1M175 240.5h1M173 241.5h1M100 242.5h1M170 242.5h1M173 242.5h1M175 242.5h1M172 243.5h1M100 244.5h1M167 244.5h1M169 244.5h1M172 244.5h1M101 245.5h1M104 245.5h1M167 245.5h1M99 246.5h1M104 246.5h1M165 246.5h1M169 246.5h2M98 247.5h1M166 247.5h1M168 247.5h1M102 248.5h2M162 248.5h1M167 248.5h1M100 249.5h1M102 249.5h1M161 249.5h1M164 249.5h2M102 250.5h1M160 250.5h2M97 251.5h1M101 252.5h1M161 252.5h2M98 253.5h1M101 253.5h1M162 253.5h1M95 254.5h1M101 254.5h1M159 254.5h1M100 256.5h1M152 256.5h1M158 256.5h1M94 257.5h1M97 257.5h1M150 257.5h1M98 258.5h1M148 258.5h1M97 259.5h2M100 259.5h1M150 259.5h1M154 259.5h1M95 260.5h2M100 260.5h1M94 261.5h1M100 261.5h1M147 261.5h1M143 262.5h1M148 262.5h1M93 263.5h1M96 263.5h1M100 263.5h1M141 263.5h3M145 263.5h1M97 264.5h2M92 265.5h1M95 265.5h1M142 265.5h1M144 265.5h1M98 266.5h2M142 266.5h1M142 267.5h1M92 268.5h5M100 268.5h1M134 268.5h2M99 269.5h1M130 269.5h2M133 269.5h1M135 269.5h1M97 270.5h1M100 270.5h1M130 270.5h1M134 270.5h1M96 271.5h1M100 271.5h1M102 271.5h1M132 271.5h1M135 271.5h1M94 272.5h1M97 272.5h1M100 272.5h1M103 272.5h2M100 273.5h1M103 273.5h1M105 273.5h1M132 273.5h1M96 274.5h2M103 274.5h1M105 274.5h1M115 274.5h1M117 274.5h1M120 274.5h1M129 274.5h1M94 275.5h1M96 275.5h2M102 275.5h2M106 275.5h1M108 275.5h1M110 275.5h1M113 275.5h1M115 275.5h1M117 275.5h2M122 275.5h2M129 275.5h1M104 276.5h1M111 276.5h2M114 276.5h1M116 276.5h1M118 276.5h2M121 276.5h2M96 277.5h1M100 277.5h1M120 277.5h2M123 277.5h3M95 278.5h2M101 278.5h1M103 278.5h1M109 278.5h4M121 278.5h1M94 279.5h3M99 279.5h1M101 279.5h2M110 279.5h3M115 279.5h1M118 279.5h2M95 280.5h1M97 280.5h2M101 280.5h1M106 280.5h1M108 280.5h2M114 280.5h2M99 281.5h1M101 281.5h1M103 281.5h1M113 281.5h1M100 282.5h1M100 283.5h2M104 283.5h2" stroke="#00f8ff" stroke-width="1" fill="none" shape-rendering="crispEdges"/><path d="M269 76.5h1M275 76.5h1M265 77.5h1M277 77.5h2M262 78.5h1M265 78.5h1M267 78.5h1M272 78.5h3M277 78.5h1M280 78.5h2M265 79.5h2M278 79.5h2M263 80.5h1M265 80.5h1M268 80.5h2M275 80.5h1M283 80.5h1M260 81.5h1M265 81.5h1M273 81.5h1M265 82.5h1M269 82.5h1M275 82.5h1M279 82.5h1M251 83.5h2M263 83.5h1M270 83.5h1M251 84.5h1M254 84.5h1M258 84.5h1M261 84.5h1M267 84.5h1M270 84.5h1M272 84.5h1M274 84.5h1M278 84.5h1M282 84.5h1M246 85.5h1M252 85.5h1M257 85.5h1M261 85.5h1M264 85.5h1M266 85.5h1M270 85.5h1M272 85.5h1M278 85.5h1M280 85.5h1M283 85.5h1M248 86.5h2M251 86.5h1M253 86.5h1M260 86.5h1M269 86.5h1M272 86.5h1M282 86.5h1M249 87.5h1M253 87.5h1M272 87.5h1M282 87.5h1M284 87.5h1M243 88.5h1M250 88.5h1M274 88.5h1M280 88.5h2M244 89.5h1M247 89.5h1M249 89.5h1M278 89.5h1M244 90.5h2M277 90.5h1M237 91.5h1M241 91.5h1M243 91.5h1M276 91.5h1M284 91.5h1M235 92.5h1M238 92.5h1M243 92.5h2M233 93.5h1M240 93.5h1M277 93.5h6M233 94.5h1M237 94.5h1M276 94.5h1M281 94.5h1M230 95.5h1M236 95.5h1M279 95.5h1M282 95.5h1M284 95.5h1M235 96.5h2M228 97.5h1M233 97.5h1M277 97.5h1M281 97.5h3M232 98.5h1M277 98.5h1M281 98.5h2M226 99.5h1M232 99.5h1M225 100.5h1M283 100.5h1M225 101.5h3M276 102.5h2M221 103.5h1M225 103.5h1M276 103.5h1M282 103.5h1M218 104.5h2M279 104.5h1M221 105.5h2M277 105.5h1M280 105.5h1M217 106.5h1M275 106.5h1M279 106.5h1M281 106.5h1M275 107.5h1M277 107.5h1M213 108.5h1M215 108.5h1M280 108.5h1M212 109.5h1M214 109.5h1M275 109.5h1M277 109.5h1M214 110.5h1M216 110.5h1M276 110.5h1M280 110.5h1M274 111.5h1M211 112.5h2M277 112.5h1M208 114.5h1M276 114.5h1M204 115.5h2M208 115.5h2M205 116.5h1M274 116.5h1M272 117.5h1M274 117.5h1M276 117.5h1M202 118.5h1M274 118.5h1M201 119.5h1M274 120.5h1M199 121.5h1M202 121.5h1M272 121.5h1M198 122.5h2M274 122.5h1M272 123.5h2M199 124.5h1M196 125.5h1M272 125.5h1M197 126.5h1M272 126.5h1M192 127.5h1M194 127.5h1M269 127.5h2M272 127.5h1M194 128.5h1M269 128.5h2M191 129.5h1M193 129.5h1M188 130.5h1M266 130.5h2M191 131.5h1M264 132.5h2M269 132.5h1M185 133.5h2M188 133.5h1M184 134.5h1M266 134.5h2M181 137.5h1M184 137.5h1M263 137.5h1M265 137.5h1M183 138.5h1M264 138.5h1M179 140.5h1M181 140.5h1M260 140.5h1M263 140.5h2M260 141.5h1M262 141.5h2M259 142.5h1M262 142.5h1M258 143.5h1M260 143.5h1M261 144.5h1M173 146.5h1M260 146.5h1M174 147.5h1M259 147.5h1M169 149.5h1M254 150.5h1M256 150.5h1M167 153.5h1M253 153.5h1M162 156.5h1M165 156.5h1M161 157.5h1M251 157.5h2M161 158.5h1M249 158.5h2M160 159.5h2M163 159.5h1M160 160.5h1M162 160.5h1M248 160.5h1M246 161.5h1M155 164.5h1M245 164.5h1M157 165.5h1M154 166.5h1M156 166.5h2M243 166.5h1M245 166.5h1M154 167.5h1M244 167.5h1M152 168.5h1M155 168.5h1M241 168.5h1M243 168.5h2M152 169.5h1M154 169.5h1M240 169.5h1M243 169.5h1M151 170.5h1M238 171.5h1M241 171.5h1M149 172.5h1M151 172.5h2M240 172.5h1M239 174.5h1M235 175.5h1M237 175.5h1M239 175.5h1M147 176.5h1M235 176.5h1M144 177.5h1M147 177.5h1M235 177.5h1M146 178.5h1M142 179.5h1M142 180.5h2M142 181.5h1M144 181.5h1M230 181.5h1M143 182.5h1M231 182.5h1M233 182.5h1M232 183.5h1M228 184.5h1M229 186.5h1M138 187.5h1M225 187.5h1M227 187.5h1M229 187.5h1M135 188.5h1M137 188.5h1M225 188.5h1M134 189.5h1M137 189.5h1M225 189.5h1M227 189.5h1M135 190.5h1M225 190.5h1M134 191.5h2M133 192.5h2M223 192.5h1M132 193.5h1M132 194.5h1M219 194.5h1M221 194.5h1M133 195.5h1M218 195.5h1M218 196.5h1M221 196.5h1M217 197.5h2M127 198.5h1M129 198.5h1M128 200.5h1M130 200.5h1M129 201.5h1M126 202.5h1M212 202.5h2M216 202.5h1M125 203.5h1M127 203.5h1M214 203.5h2M127 204.5h1M214 204.5h1M125 205.5h1M213 205.5h1M126 206.5h1M210 206.5h1M123 207.5h2M208 207.5h1M120 208.5h1M123 208.5h1M206 208.5h1M210 208.5h1M205 209.5h1M209 209.5h1M122 210.5h2M203 211.5h1M206 212.5h1M121 213.5h1M119 214.5h1M118 215.5h1M200 215.5h1M202 215.5h2M118 216.5h1M200 216.5h1M198 217.5h1M114 218.5h1M198 218.5h1M195 219.5h2M198 219.5h1M117 220.5h1M196 221.5h1M112 222.5h1M114 222.5h1M195 222.5h2M191 223.5h1M193 223.5h1M111 224.5h1M112 225.5h2M191 225.5h1M111 226.5h1M192 226.5h1M111 227.5h1M188 227.5h4M111 228.5h1M186 228.5h1M190 228.5h1M187 229.5h1M185 230.5h1M108 231.5h1M183 231.5h1M105 232.5h1M107 233.5h1M184 233.5h1M108 234.5h1M103 236.5h1M105 236.5h1M108 236.5h1M182 236.5h1M103 237.5h4M105 239.5h1M178 239.5h1M177 240.5h1M103 241.5h1M105 241.5h1M172 241.5h1M103 242.5h1M172 242.5h1M102 245.5h1M166 245.5h1M169 245.5h1M101 246.5h1M103 246.5h1M168 246.5h1M99 247.5h1M102 247.5h2M164 247.5h1M101 248.5h1M163 248.5h1M166 248.5h1M166 249.5h1M101 250.5h1M163 250.5h1M99 251.5h1M101 251.5h2M164 251.5h1M96 252.5h1M100 252.5h1M102 252.5h1M160 252.5h1M102 253.5h1M158 253.5h2M97 254.5h1M99 254.5h2M160 254.5h1M99 255.5h2M155 255.5h1M159 255.5h1M95 256.5h1M151 256.5h1M153 256.5h3M99 257.5h1M101 257.5h1M153 257.5h1M94 258.5h1M96 258.5h1M99 258.5h1M151 258.5h1M155 258.5h1M152 259.5h2M146 260.5h1M151 260.5h1M96 261.5h1M96 262.5h1M147 262.5h1M150 262.5h1M97 263.5h1M96 264.5h1M101 264.5h1M140 264.5h1M142 264.5h1M147 264.5h1M97 265.5h1M101 265.5h1M140 265.5h2M145 265.5h1M93 266.5h1M139 266.5h2M143 266.5h1M97 267.5h1M99 267.5h1M135 267.5h3M101 268.5h1M132 268.5h1M94 269.5h1M100 269.5h1M102 269.5h1M132 269.5h1M94 270.5h1M98 270.5h2M127 270.5h2M135 270.5h1M93 271.5h1M97 271.5h2M103 271.5h2M124 271.5h1M127 271.5h2M133 271.5h1M93 272.5h1M96 272.5h1M99 272.5h1M105 272.5h1M122 272.5h1M125 272.5h2M128 272.5h2M133 272.5h1M94 273.5h2M107 273.5h1M118 273.5h2M125 273.5h1M129 273.5h1M99 274.5h1M104 274.5h1M127 274.5h2M130 274.5h1M92 275.5h1M98 275.5h1M104 275.5h1M120 275.5h1M97 276.5h1M103 276.5h1M110 276.5h1M117 276.5h1M120 276.5h1M123 276.5h1M102 277.5h1M105 277.5h2M110 277.5h1M115 277.5h4M122 277.5h1M99 278.5h2M104 278.5h1M107 278.5h1M114 278.5h1M119 278.5h1M105 279.5h1M107 279.5h1M117 279.5h1M110 280.5h1M112 280.5h1M117 280.5h1M105 281.5h1M111 281.5h1M98 282.5h1M102 282.5h1M104 282.5h1M106 283.5h1" stroke="#00ffd0" stroke-width="1" fill="none" shape-rendering="crispEdges"/><path d="M261 86.5h1M265 86.5h1M268 86.5h1M260 87.5h2M263 87.5h1M265 87.5h1M269 87.5h1M259 88.5h2M264 88.5h2M269 88.5h3M262 90.5h1M266 90.5h1M271 90.5h1M247 91.5h2M260 91.5h1M271 91.5h1M274 91.5h1M247 92.5h1M249 92.5h1M255 92.5h1M260 92.5h1M263 92.5h1M267 92.5h1M271 92.5h1M245 93.5h2M248 93.5h1M253 93.5h1M259 93.5h1M270 93.5h2M241 94.5h1M248 94.5h1M257 94.5h1M260 94.5h1M269 94.5h1M271 94.5h1M273 94.5h1M240 95.5h2M247 95.5h1M255 95.5h2M260 95.5h1M263 95.5h1M271 95.5h1M275 95.5h1M239 96.5h1M241 96.5h1M243 96.5h1M256 96.5h1M260 96.5h1M262 96.5h1M265 96.5h1M236 97.5h2M240 97.5h2M244 97.5h2M258 97.5h1M262 97.5h1M266 97.5h3M234 98.5h3M238 98.5h1M247 98.5h1M253 98.5h1M256 98.5h1M271 98.5h1M273 98.5h1M275 98.5h1M235 99.5h2M239 99.5h1M250 99.5h1M257 99.5h1M262 99.5h1M268 99.5h2M271 99.5h2M232 100.5h1M238 100.5h1M248 100.5h1M269 100.5h1M272 100.5h2M259 101.5h1M229 102.5h1M231 102.5h1M236 102.5h1M245 102.5h1M254 102.5h1M258 102.5h1M264 102.5h1M268 102.5h1M275 102.5h1M235 103.5h1M267 103.5h1M269 103.5h1M272 103.5h2M226 104.5h1M266 104.5h1M273 104.5h1M232 105.5h1M235 105.5h1M268 105.5h2M272 105.5h2M224 106.5h1M227 106.5h2M233 106.5h1M259 106.5h1M266 106.5h3M273 106.5h2M221 107.5h1M224 107.5h1M227 107.5h1M229 107.5h2M223 108.5h1M266 108.5h1M273 108.5h1M225 109.5h1M231 109.5h1M267 109.5h2M274 109.5h1M222 110.5h1M224 111.5h1M261 111.5h1M267 111.5h1M270 111.5h1M272 111.5h2M221 112.5h1M223 112.5h1M218 113.5h1M262 113.5h1M272 113.5h1M212 114.5h1M217 114.5h1M272 114.5h1M211 115.5h3M216 115.5h1M262 115.5h1M266 115.5h1M210 116.5h3M214 116.5h1M217 116.5h1M266 116.5h1M268 116.5h1M211 117.5h1M261 117.5h1M265 117.5h1M267 117.5h1M271 117.5h1M211 118.5h1M214 118.5h1M267 118.5h1M270 118.5h1M208 119.5h1M265 119.5h1M267 119.5h1M269 119.5h1M206 120.5h1M211 120.5h1M203 121.5h1M210 122.5h1M265 122.5h3M202 123.5h1M263 123.5h1M267 123.5h2M200 124.5h1M206 124.5h1M209 124.5h1M264 124.5h1M268 124.5h1M199 125.5h2M204 125.5h1M259 126.5h1M261 126.5h1M263 126.5h1M265 126.5h1M267 126.5h1M196 127.5h1M262 127.5h1M197 128.5h1M258 128.5h1M264 128.5h1M196 129.5h1M262 129.5h1M193 130.5h1M195 130.5h1M263 130.5h1M192 131.5h1M196 131.5h1M262 131.5h1M191 132.5h1M193 132.5h1M195 132.5h1M258 132.5h1M261 133.5h1M189 134.5h1M193 134.5h1M257 134.5h1M259 134.5h1M188 135.5h1M191 135.5h1M258 135.5h1M190 136.5h2M193 136.5h1M254 136.5h1M186 137.5h1M191 137.5h1M185 138.5h1M185 139.5h2M188 139.5h1M183 140.5h1M187 140.5h1M189 140.5h1M181 141.5h2M187 141.5h2M256 141.5h1M252 142.5h1M256 142.5h2M179 143.5h1M182 143.5h1M187 143.5h1M256 143.5h2M179 144.5h1M253 144.5h1M256 144.5h1M254 145.5h1M176 146.5h1M180 146.5h1M176 147.5h3M180 147.5h1M253 147.5h1M180 148.5h1M248 148.5h1M253 148.5h1M174 149.5h1M176 149.5h1M178 149.5h1M249 149.5h1M252 149.5h2M175 150.5h2M249 150.5h1M172 151.5h1M175 151.5h1M247 151.5h1M248 152.5h1M172 154.5h1M245 154.5h2M249 154.5h1M168 155.5h2M246 155.5h1M169 156.5h1M246 156.5h2M167 157.5h1M170 157.5h1M179 157.5h1M237 157.5h1M243 157.5h1M248 157.5h1M168 158.5h1M247 158.5h1M164 159.5h1M166 159.5h1M243 159.5h2M163 160.5h1M242 160.5h1M163 161.5h2M241 161.5h1M161 162.5h1M242 162.5h1M162 163.5h1M241 163.5h1M160 164.5h1M239 164.5h1M243 164.5h1M159 165.5h2M242 165.5h1M161 166.5h1M164 166.5h1M240 166.5h1M157 167.5h1M163 167.5h1M235 167.5h1M158 168.5h5M236 168.5h2M240 168.5h1M155 169.5h3M160 169.5h1M238 169.5h1M156 170.5h1M153 171.5h2M237 171.5h1M155 172.5h1M234 172.5h3M155 173.5h1M232 173.5h3M155 174.5h1M230 174.5h1M155 175.5h1M231 175.5h1M233 175.5h1M151 176.5h1M229 176.5h1M149 177.5h1M231 178.5h1M147 179.5h1M149 179.5h1M152 180.5h1M230 180.5h1M146 181.5h1M148 181.5h2M145 182.5h3M149 182.5h1M228 182.5h2M145 183.5h1M147 183.5h1M222 184.5h1M146 185.5h1M220 185.5h2M141 186.5h5M221 186.5h1M221 187.5h1M223 187.5h1M140 188.5h1M143 188.5h1M140 189.5h1M142 189.5h1M220 189.5h2M138 190.5h2M141 190.5h1M220 190.5h1M137 191.5h1M137 192.5h2M216 192.5h1M135 194.5h2M138 194.5h1M140 194.5h1M136 195.5h1M215 195.5h1M136 196.5h1M209 197.5h1M212 197.5h3M216 197.5h1M132 198.5h1M138 199.5h1M212 199.5h1M209 200.5h1M131 201.5h1M209 201.5h2M212 201.5h1M129 202.5h1M209 202.5h2M129 203.5h1M128 204.5h2M203 204.5h2M132 206.5h1M202 206.5h1M206 206.5h1M126 207.5h1M129 207.5h1M201 207.5h1M203 207.5h1M125 208.5h2M128 210.5h1M202 210.5h2M124 211.5h1M196 211.5h2M200 211.5h1M199 212.5h1M122 213.5h1M125 213.5h1M198 213.5h1M200 213.5h1M192 214.5h1M121 215.5h1M126 215.5h1M192 215.5h1M120 216.5h2M123 216.5h3M127 216.5h1M131 216.5h1M195 216.5h1M120 217.5h1M131 217.5h1M196 217.5h1M119 218.5h1M193 218.5h1M123 219.5h1M125 220.5h1M192 220.5h2M117 221.5h1M121 221.5h1M189 221.5h2M118 222.5h1M187 222.5h2M191 222.5h1M116 223.5h1M118 223.5h2M121 223.5h1M175 223.5h1M190 223.5h1M186 224.5h1M116 225.5h1M118 225.5h1M183 225.5h2M115 226.5h2M179 226.5h1M184 226.5h1M118 227.5h1M184 227.5h2M116 228.5h1M118 228.5h1M115 229.5h2M177 229.5h1M114 230.5h1M116 230.5h1M178 230.5h1M180 230.5h1M116 231.5h1M174 231.5h1M177 231.5h2M172 232.5h1M178 232.5h1M113 233.5h1M119 233.5h1M173 233.5h1M179 233.5h1M112 234.5h1M110 235.5h2M172 235.5h1M175 235.5h1M177 235.5h1M110 236.5h1M113 236.5h1M174 236.5h3M112 237.5h1M166 237.5h1M169 238.5h2M174 238.5h1M110 239.5h1M113 239.5h1M115 239.5h1M168 239.5h1M170 239.5h1M173 239.5h1M109 240.5h1M167 240.5h2M170 240.5h1M110 241.5h1M162 241.5h1M168 241.5h1M106 242.5h1M109 242.5h1M117 242.5h1M130 242.5h1M162 242.5h1M167 242.5h2M106 243.5h3M116 243.5h1M166 243.5h1M106 244.5h2M163 244.5h1M165 244.5h1M105 245.5h2M109 245.5h2M158 245.5h3M153 246.5h1M113 247.5h1M115 247.5h2M154 247.5h3M104 248.5h1M116 248.5h1M158 248.5h3M105 249.5h1M109 249.5h1M151 249.5h1M157 250.5h1M108 251.5h1M152 251.5h1M155 251.5h1M103 252.5h1M108 252.5h1M111 252.5h1M115 252.5h1M118 252.5h1M154 252.5h1M103 253.5h1M106 253.5h2M149 253.5h1M151 253.5h2M155 253.5h1M103 254.5h3M107 254.5h1M109 254.5h2M145 254.5h1M147 254.5h1M151 254.5h3M102 255.5h1M115 255.5h1M142 255.5h2M148 255.5h1M151 255.5h2M125 256.5h1M136 256.5h1M141 256.5h3M103 257.5h1M105 257.5h1M108 257.5h2M133 257.5h1M140 257.5h1M145 257.5h1M106 258.5h2M109 258.5h1M114 258.5h1M137 258.5h2M142 258.5h1M111 259.5h1M141 259.5h1M144 259.5h2M101 260.5h1M106 260.5h1M108 260.5h1M112 260.5h2M135 260.5h1M140 260.5h1M107 261.5h1M109 261.5h1M114 261.5h1M126 261.5h1M137 261.5h1M139 261.5h1M143 261.5h1M103 262.5h2M110 262.5h1M117 262.5h1M137 262.5h1M101 263.5h1M103 263.5h1M106 263.5h1M108 263.5h1M130 263.5h1M132 263.5h2M135 263.5h5M112 264.5h1M124 264.5h1M127 264.5h1M131 264.5h1M102 265.5h1M106 265.5h1M108 265.5h1M110 265.5h1M121 265.5h1M129 265.5h1M132 265.5h1M134 265.5h1M136 265.5h1M102 266.5h1M108 266.5h1M112 266.5h2M117 266.5h2M123 266.5h1M129 266.5h1M133 266.5h1M104 267.5h2M107 267.5h1M110 267.5h4M122 267.5h1M128 267.5h1M131 267.5h1M107 268.5h1M113 268.5h1M115 268.5h1M120 268.5h1M125 268.5h1M103 269.5h1M107 269.5h3M115 269.5h1M118 269.5h1M123 269.5h2M105 270.5h1M116 270.5h1M118 270.5h1M125 270.5h2M105 271.5h1M112 271.5h1M116 271.5h1M121 271.5h2M110 272.5h1M115 272.5h1M117 272.5h2M110 273.5h1M113 273.5h1M115 273.5h1" stroke="#000" stroke-width="1" fill="none" shape-rendering="crispEdges"/><path d="M0 356.500L347 31.500" stroke="#f00000" stroke-width="1.200"/></g><text x="19" y="32" font-family="Liberation Serif,serif" font-size="20" letter-spacing=".35" fill="#d8d8d8">y = 2x - 0.0015</text><text x="19" y="57" font-family="Liberation Serif,serif" font-size="20" letter-spacing=".35" fill="#d8d8d8">R^2 = 0.799</text></svg>
<svg style="left:884px;top:410px;" width="15" height="371" viewBox="0 0 15 371"><rect x="8" y="27" width="7" height="1" fill="#000"/><rect x="11" y="46" width="4" height="1" fill="#000"/><rect x="8" y="65" width="7" height="1" fill="#000"/><rect x="11" y="84" width="4" height="1" fill="#000"/><rect x="8" y="103" width="7" height="1" fill="#000"/><rect x="11" y="122" width="4" height="1" fill="#000"/><rect x="8" y="141" width="7" height="1" fill="#000"/><rect x="11" y="160" width="4" height="1" fill="#000"/><rect x="8" y="179" width="7" height="1" fill="#000"/><rect x="11" y="198" width="4" height="1" fill="#000"/><rect x="8" y="217" width="7" height="1" fill="#000"/><rect x="11" y="236" width="4" height="1" fill="#000"/><rect x="8" y="255" width="7" height="1" fill="#000"/><rect x="11" y="274" width="4" height="1" fill="#000"/><rect x="8" y="293" width="7" height="1" fill="#000"/><rect x="11" y="312" width="4" height="1" fill="#000"/><rect x="8" y="331" width="7" height="1" fill="#000"/><rect x="11" y="350" width="4" height="1" fill="#000"/><rect x="8" y="369" width="7" height="1" fill="#000"/><rect x="11" y="8" width="4" height="1" fill="#000"/></svg>
<div style="right:687px;top:429.1px;font:16px/17.71px 'Liberation Serif',serif;color:#000;white-space:pre;">8</div>
<div style="right:687px;top:467.1px;font:16px/17.71px 'Liberation Serif',serif;color:#000;white-space:pre;">6</div>
<div style="right:687px;top:505.1px;font:16px/17.71px 'Liberation Serif',serif;color:#000;white-space:pre;">4</div>
<div style="right:687px;top:543.1px;font:16px/17.71px 'Liberation Serif',serif;color:#000;white-space:pre;">2</div>
<div style="right:687px;top:581.1px;font:16px/17.71px 'Liberation Serif',serif;color:#000;white-space:pre;">0</div>
<div style="right:687px;top:619.1px;font:16px/17.71px 'Liberation Serif',serif;color:#000;white-space:pre;">-2</div>
<div style="right:687px;top:657.1px;font:16px/17.71px 'Liberation Serif',serif;color:#000;white-space:pre;">-4</div>
<div style="right:687px;top:695.1px;font:16px/17.71px 'Liberation Serif',serif;color:#000;white-space:pre;">-6</div>
<div style="right:687px;top:733.1px;font:16px/17.71px 'Liberation Serif',serif;color:#000;white-space:pre;">-8</div>
<div style="right:687px;top:771.1px;font:16px/17.71px 'Liberation Serif',serif;color:#000;white-space:pre;">-10</div>
<svg style="left:899px;top:780px;" width="347" height="8" viewBox="0 0 347 8"><rect x="27" y="0" width="1" height="7" fill="#000"/><rect x="47" y="0" width="1" height="4" fill="#000"/><rect x="67" y="0" width="1" height="7" fill="#000"/><rect x="87" y="0" width="1" height="4" fill="#000"/><rect x="108" y="0" width="1" height="7" fill="#000"/><rect x="128" y="0" width="1" height="4" fill="#000"/><rect x="148" y="0" width="1" height="7" fill="#000"/><rect x="168" y="0" width="1" height="4" fill="#000"/><rect x="189" y="0" width="1" height="7" fill="#000"/><rect x="209" y="0" width="1" height="4" fill="#000"/><rect x="229" y="0" width="1" height="7" fill="#000"/><rect x="249" y="0" width="1" height="4" fill="#000"/><rect x="270" y="0" width="1" height="7" fill="#000"/><rect x="290" y="0" width="1" height="4" fill="#000"/><rect x="310" y="0" width="1" height="7" fill="#000"/><rect x="330" y="0" width="1" height="4" fill="#000"/><rect x="7" y="0" width="1" height="4" fill="#000"/></svg>
<div style="left:919.3px;top:789.6px;font:16px/17.71px 'Liberation Serif',serif;color:#000;white-space:pre;">-4</div>
<div style="left:959.3px;top:789.6px;font:16px/17.71px 'Liberation Serif',serif;color:#000;white-space:pre;">-3</div>
<div style="left:1000.3px;top:789.6px;font:16px/17.71px 'Liberation Serif',serif;color:#000;white-space:pre;">-2</div>
<div style="left:1040.3px;top:789.6px;font:16px/17.71px 'Liberation Serif',serif;color:#000;white-space:pre;">-1</div>
<div style="left:1084.0px;top:789.6px;font:16px/17.71px 'Liberation Serif',serif;color:#000;white-space:pre;">0</div>
<div style="left:1124.0px;top:789.6px;font:16px/17.71px 'Liberation Serif',serif;color:#000;white-space:pre;">1</div>
<div style="left:1165.0px;top:789.6px;font:16px/17.71px 'Liberation Serif',serif;color:#000;white-space:pre;">2</div>
<div style="left:1205.0px;top:789.6px;font:16px/17.71px 'Liberation Serif',serif;color:#000;white-space:pre;">3</div>
<div style="left:842.5px;top:630.5px;transform-origin:0 0;transform:rotate(-90deg);font:18px/18px 'Liberation Serif',serif;white-space:pre;color:#000">Estimated</div>
<div style="left:810px;top:382px;width:539px;height:444px;overflow:hidden"><div style="left:239.8px;top:431px;font:18px/18px 'Liberation Serif',serif;color:#000">POP3</div></div>
<svg style="left:1249px;top:411px;" width="38" height="368" viewBox="0 0 38 368"><defs><linearGradient id="rb" x1="0" y1="0" x2="0" y2="1"><stop offset="0" stop-color="#ff0000"/><stop offset="0.077" stop-color="#ff2a00"/><stop offset="0.154" stop-color="#ff6400"/><stop offset="0.231" stop-color="#ffa400"/><stop offset="0.285" stop-color="#ffe000"/><stop offset="0.32" stop-color="#e4f000"/><stop offset="0.36" stop-color="#98ee00"/><stop offset="0.4" stop-color="#3ce600"/><stop offset="0.44" stop-color="#00de18"/><stop offset="0.5" stop-color="#00f070"/><stop offset="0.54" stop-color="#00ffb8"/><stop offset="0.59" stop-color="#00ffff"/><stop offset="0.66" stop-color="#00a8ff"/><stop offset="0.74" stop-color="#0058ff"/><stop offset="0.82" stop-color="#2222ff"/><stop offset="0.9" stop-color="#5800ff"/><stop offset="1" stop-color="#a400ff"/></linearGradient></defs><rect x=".5" y=".5" width="37" height="366" fill="url(#rb)" stroke="#000"/></svg>
<div style="left:1287px;top:413px;width:5px;height:1px;background:#000;"></div>
<div style="left:1296.5px;top:406.2px;font:14px/15.50px 'Liberation Serif',serif;color:#000;white-space:pre;letter-spacing:-0.2px;">0.65</div>
<div style="left:1287px;top:441px;width:5px;height:1px;background:#000;"></div>
<div style="left:1296.5px;top:434.2px;font:14px/15.50px 'Liberation Serif',serif;color:#000;white-space:pre;letter-spacing:-0.2px;">0.60</div>
<div style="left:1287px;top:469px;width:5px;height:1px;background:#000;"></div>
<div style="left:1296.5px;top:462.2px;font:14px/15.50px 'Liberation Serif',serif;color:#000;white-space:pre;letter-spacing:-0.2px;">0.55</div>
<div style="left:1287px;top:497px;width:5px;height:1px;background:#000;"></div>
<div style="left:1296.5px;top:490.2px;font:14px/15.50px 'Liberation Serif',serif;color:#000;white-space:pre;letter-spacing:-0.2px;">0.50</div>
<div style="left:1287px;top:525px;width:5px;height:1px;background:#000;"></div>
<div style="left:1296.5px;top:518.2px;font:14px/15.50px 'Liberation Serif',serif;color:#000;white-space:pre;letter-spacing:-0.2px;">0.45</div>
<div style="left:1287px;top:553px;width:5px;height:1px;background:#000;"></div>
<div style="left:1296.5px;top:546.2px;font:14px/15.50px 'Liberation Serif',serif;color:#000;white-space:pre;letter-spacing:-0.2px;">0.40</div>
<div style="left:1287px;top:581px;width:5px;height:1px;background:#000;"></div>
<div style="left:1296.5px;top:574.2px;font:14px/15.50px 'Liberation Serif',serif;color:#000;white-space:pre;letter-spacing:-0.2px;">0.35</div>
<div style="left:1287px;top:609px;width:5px;height:1px;background:#000;"></div>
<div style="left:1296.5px;top:602.2px;font:14px/15.50px 'Liberation Serif',serif;color:#000;white-space:pre;letter-spacing:-0.2px;">0.30</div>
<div style="left:1287px;top:637px;width:5px;height:1px;background:#000;"></div>
<div style="left:1296.5px;top:630.2px;font:14px/15.50px 'Liberation Serif',serif;color:#000;white-space:pre;letter-spacing:-0.2px;">0.25</div>
<div style="left:1287px;top:665px;width:5px;height:1px;background:#000;"></div>
<div style="left:1296.5px;top:658.2px;font:14px/15.50px 'Liberation Serif',serif;color:#000;white-space:pre;letter-spacing:-0.2px;">0.20</div>
<div style="left:1287px;top:693px;width:5px;height:1px;background:#000;"></div>
<div style="left:1296.5px;top:686.2px;font:14px/15.50px 'Liberation Serif',serif;color:#000;white-space:pre;letter-spacing:-0.2px;">0.15</div>
<div style="left:1287px;top:721px;width:5px;height:1px;background:#000;"></div>
<div style="left:1296.5px;top:714.2px;font:14px/15.50px 'Liberation Serif',serif;color:#000;white-space:pre;letter-spacing:-0.2px;">0.10</div>
<div style="left:1287px;top:749px;width:5px;height:1px;background:#000;"></div>
<div style="left:1296.5px;top:742.2px;font:14px/15.50px 'Liberation Serif',serif;color:#000;white-space:pre;letter-spacing:-0.2px;">0.050</div>
<div style="left:1287px;top:777px;width:5px;height:1px;background:#000;"></div>
<div style="left:1296.5px;top:770.2px;font:14px/15.50px 'Liberation Serif',serif;color:#000;white-space:pre;letter-spacing:-0.2px;">0.0</div>
<div style="left:13px;top:889px;width:1551px;height:1px;background:#9a9aa8;"></div>
<div style="left:13px;top:890px;width:1551px;height:19px;background:#f1eeee;"></div>
<div style="left:45px;top:896.0px;font:12px/13.40px 'Liberation Sans',sans-serif;color:#000;white-space:pre;letter-spacing:-0.48px;">&lt; &lt; Start menu (F1)</div>
<div style="left:1084px;top:892px;width:1px;height:15px;background:#c9c9c9;"></div>
<div style="left:1133px;top:892px;width:1px;height:15px;background:#c9c9c9;"></div>
<div style="left:1194px;top:892px;width:1px;height:15px;background:#c9c9c9;"></div>
<div style="left:1424px;top:892px;width:1px;height:15px;background:#c9c9c9;"></div>
<div style="left:1503px;top:892px;width:1px;height:15px;background:#c9c9c9;"></div>
<div style="left:1069px;top:896.0px;font:12px/13.40px 'Liberation Sans',sans-serif;color:#000;white-space:pre;">--</div>
<div style="left:1090px;top:896.0px;font:12px/13.40px 'Liberation Sans',sans-serif;color:#000;white-space:pre;letter-spacing:-0.78px;">AU : ON</div>
<div style="left:1137px;top:896.0px;font:12px/13.40px 'Liberation Sans',sans-serif;color:#000;white-space:pre;letter-spacing:-0.30px;">Light Grids</div>
<div style="left:1199px;top:896.0px;font:12px/13.40px 'Liberation Sans',sans-serif;color:#000;white-space:pre;letter-spacing:-0.51px;">1:[Book43]Sheet1!Col("Estimated")[1:100000]</div>
<div style="left:1428px;top:896.0px;font:12px/13.40px 'Liberation Sans',sans-serif;color:#000;white-space:pre;letter-spacing:-0.62px;">1:[Graph43]1!1</div>
<div style="left:1509px;top:896.0px;font:12px/13.40px 'Liberation Sans',sans-serif;color:#000;white-space:pre;letter-spacing:-0.60px;">Radian</div>
<svg style="left:1548px;top:896px;" width="12" height="12" viewBox="0 0 12 12"><path d="M10 2v1M10 6v1M6 6v1M10 10v1M6 10v1M2 10v1" stroke="#b0b0b8" stroke-width="2"/></svg>
<svg style="left:13px;top:878px;" width="32" height="32" viewBox="0 0 32 32"><circle cx="15.500" cy="15.500" r="14.500" fill="#e4604c" stroke="#d9432e"/><circle cx="15.500" cy="15.500" r="14" fill="url(#ball)"/><path d="M9 6v18h17M9 12h16M9 18h16M15 6v18M21 6v18" stroke="#fbd5cc" stroke-width=".8" fill="none" opacity=".8"/><path d="M9 22l5-9 3 4 5-9" stroke="#3b5d9a" fill="none" stroke-width="1.200"/><circle cx="9.500" cy="22" r="1.200" fill="#1e63c8"/><circle cx="14" cy="13" r="1.200" fill="#1e63c8"/><circle cx="17" cy="17" r="1.200" fill="#1e63c8"/><circle cx="22" cy="8.500" r="1.200" fill="#1e63c8"/></svg>
</body></html>
